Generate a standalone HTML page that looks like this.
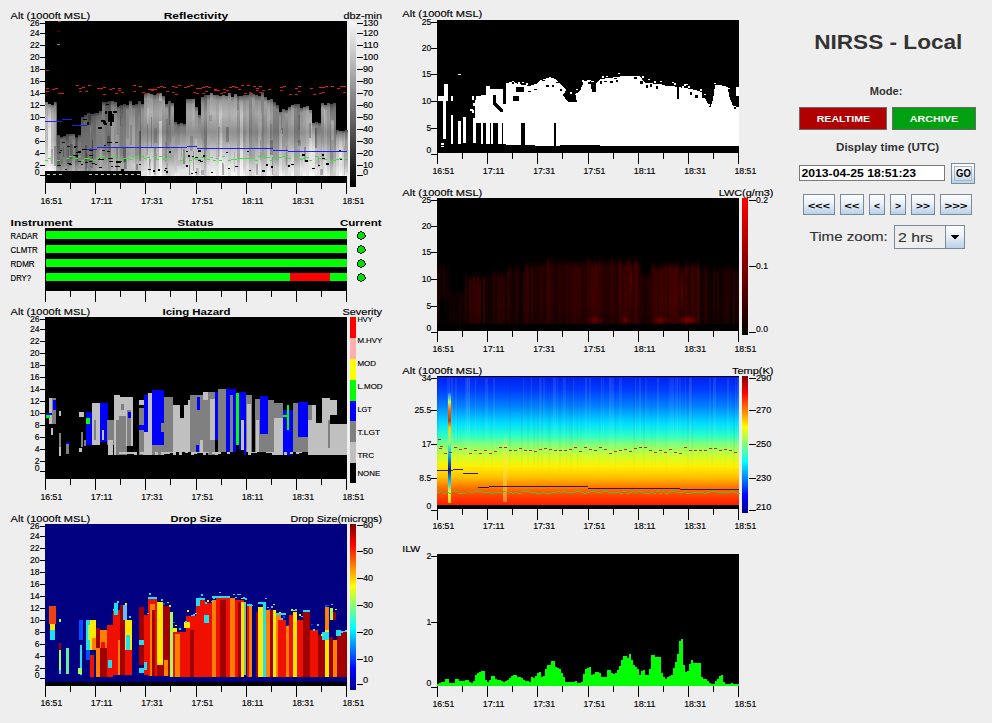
<!DOCTYPE html>
<html><head><meta charset="utf-8"><style>
html,body{margin:0;padding:0;background:#eeeeee;width:992px;height:723px;overflow:hidden}
svg{display:block}
text{font-family:"Liberation Sans",sans-serif}
</style></head><body>
<svg width="992" height="723" viewBox="0 0 992 723" shape-rendering="crispEdges">
<rect x="0" y="0" width="992" height="723" fill="#eeeeee"/>
<text x="10.6" y="18.6" font-size="9.6" fill="#000" stroke="#000" stroke-width="0.15" text-anchor="start" textLength="79.6" lengthAdjust="spacingAndGlyphs" >Alt (1000ft MSL)</text>
<text x="195.9" y="18.6" font-size="9.6" font-weight="bold" fill="#000" text-anchor="middle" textLength="64.5" lengthAdjust="spacingAndGlyphs" >Reflectivity</text>
<text x="382" y="18.6" font-size="9.6" fill="#000" stroke="#000" stroke-width="0.15" text-anchor="end" textLength="38.4" lengthAdjust="spacingAndGlyphs" >dbz-min</text>
<rect x="45.00" y="21.00" width="302.00" height="162.00" fill="#000" />
<defs><linearGradient id="rf0" x1="0" y1="0" x2="0" y2="1"><stop offset="0" stop-color="#343434"/><stop offset="0.07" stop-color="#636363"/><stop offset="0.25" stop-color="#7d7d7d"/><stop offset="0.55" stop-color="#767676"/><stop offset="0.75" stop-color="#767676"/><stop offset="0.9" stop-color="#b8b8b8"/><stop offset="1" stop-color="#c4c4c4"/></linearGradient><linearGradient id="rf1" x1="0" y1="0" x2="0" y2="1"><stop offset="0" stop-color="#4b4b4b"/><stop offset="0.07" stop-color="#5d5d5d"/><stop offset="0.25" stop-color="#737373"/><stop offset="0.55" stop-color="#898989"/><stop offset="0.75" stop-color="#8d8d8d"/><stop offset="0.9" stop-color="#c9c9c9"/><stop offset="1" stop-color="#cdcdcd"/></linearGradient><linearGradient id="rf2" x1="0" y1="0" x2="0" y2="1"><stop offset="0" stop-color="#454545"/><stop offset="0.07" stop-color="#6b6b6b"/><stop offset="0.25" stop-color="#9a9a9a"/><stop offset="0.55" stop-color="#898989"/><stop offset="0.75" stop-color="#8c8c8c"/><stop offset="0.9" stop-color="#b9b9b9"/><stop offset="1" stop-color="#cbcbcb"/></linearGradient><linearGradient id="rf3" x1="0" y1="0" x2="0" y2="1"><stop offset="0" stop-color="#4c4c4c"/><stop offset="0.07" stop-color="#717171"/><stop offset="0.25" stop-color="#8e8e8e"/><stop offset="0.55" stop-color="#969696"/><stop offset="0.75" stop-color="#a1a1a1"/><stop offset="0.9" stop-color="#d0d0d0"/><stop offset="1" stop-color="#d2d2d2"/></linearGradient><linearGradient id="rf4" x1="0" y1="0" x2="0" y2="1"><stop offset="0" stop-color="#414141"/><stop offset="0.07" stop-color="#808080"/><stop offset="0.25" stop-color="#8b8b8b"/><stop offset="0.55" stop-color="#9b9b9b"/><stop offset="0.75" stop-color="#999999"/><stop offset="0.9" stop-color="#cccccc"/><stop offset="1" stop-color="#cfcfcf"/></linearGradient><linearGradient id="rf5" x1="0" y1="0" x2="0" y2="1"><stop offset="0" stop-color="#555555"/><stop offset="0.07" stop-color="#9c9c9c"/><stop offset="0.25" stop-color="#9e9e9e"/><stop offset="0.55" stop-color="#acacac"/><stop offset="0.75" stop-color="#a3a3a3"/><stop offset="0.9" stop-color="#cfcfcf"/><stop offset="1" stop-color="#e0e0e0"/></linearGradient><linearGradient id="rf6" x1="0" y1="0" x2="0" y2="1"><stop offset="0" stop-color="#575757"/><stop offset="0.07" stop-color="#8b8b8b"/><stop offset="0.25" stop-color="#a8a8a8"/><stop offset="0.55" stop-color="#a6a6a6"/><stop offset="0.75" stop-color="#bbbbbb"/><stop offset="0.9" stop-color="#d0d0d0"/><stop offset="1" stop-color="#eeeeee"/></linearGradient><linearGradient id="rf7" x1="0" y1="0" x2="0" y2="1"><stop offset="0" stop-color="#585858"/><stop offset="0.07" stop-color="#949494"/><stop offset="0.25" stop-color="#afafaf"/><stop offset="0.55" stop-color="#bebebe"/><stop offset="0.75" stop-color="#bbbbbb"/><stop offset="0.9" stop-color="#e3e3e3"/><stop offset="1" stop-color="#e4e4e4"/></linearGradient><linearGradient id="rf8" x1="0" y1="0" x2="0" y2="1"><stop offset="0" stop-color="#6b6b6b"/><stop offset="0.07" stop-color="#9b9b9b"/><stop offset="0.25" stop-color="#b9b9b9"/><stop offset="0.55" stop-color="#b9b9b9"/><stop offset="0.75" stop-color="#cfcfcf"/><stop offset="0.9" stop-color="#e4e4e4"/><stop offset="1" stop-color="#f7f7f7"/></linearGradient><linearGradient id="rf9" x1="0" y1="0" x2="0" y2="1"><stop offset="0" stop-color="#626262"/><stop offset="0.07" stop-color="#a1a1a1"/><stop offset="0.25" stop-color="#c4c4c4"/><stop offset="0.55" stop-color="#cacaca"/><stop offset="0.75" stop-color="#d4d4d4"/><stop offset="0.9" stop-color="#e6e6e6"/><stop offset="1" stop-color="#eaeaea"/></linearGradient><linearGradient id="rf10" x1="0" y1="0" x2="0" y2="1"><stop offset="0" stop-color="#616161"/><stop offset="0.07" stop-color="#a0a0a0"/><stop offset="0.25" stop-color="#cdcdcd"/><stop offset="0.55" stop-color="#dddddd"/><stop offset="0.75" stop-color="#e3e3e3"/><stop offset="0.9" stop-color="#f2f2f2"/><stop offset="1" stop-color="#fafafa"/></linearGradient><linearGradient id="rf11" x1="0" y1="0" x2="0" y2="1"><stop offset="0" stop-color="#737373"/><stop offset="0.07" stop-color="#ababab"/><stop offset="0.25" stop-color="#d7d7d7"/><stop offset="0.55" stop-color="#e7e7e7"/><stop offset="0.75" stop-color="#e2e2e2"/><stop offset="0.9" stop-color="#e9e9e9"/><stop offset="1" stop-color="#ffffff"/></linearGradient></defs>
<rect x="45.00" y="102.00" width="3.00" height="69.00" fill="url(#rf8)" />
<rect x="48.00" y="104.00" width="3.00" height="67.00" fill="url(#rf11)" />
<rect x="51.00" y="105.00" width="3.00" height="66.00" fill="url(#rf8)" />
<rect x="54.00" y="102.00" width="3.00" height="69.00" fill="url(#rf6)" />
<rect x="57.00" y="135.00" width="3.00" height="36.00" fill="url(#rf5)" />
<rect x="60.00" y="137.00" width="3.00" height="34.00" fill="url(#rf5)" />
<rect x="63.00" y="136.00" width="3.00" height="35.00" fill="url(#rf6)" />
<rect x="66.00" y="134.00" width="3.00" height="37.00" fill="url(#rf3)" />
<rect x="69.00" y="134.00" width="3.00" height="37.00" fill="url(#rf5)" />
<rect x="72.00" y="134.00" width="3.00" height="37.00" fill="url(#rf8)" />
<rect x="75.00" y="137.00" width="3.00" height="34.00" fill="url(#rf4)" />
<rect x="78.00" y="135.00" width="3.00" height="36.00" fill="url(#rf6)" />
<rect x="81.00" y="116.53" width="3.00" height="54.47" fill="url(#rf3)" />
<rect x="84.00" y="114.58" width="3.00" height="56.42" fill="url(#rf4)" />
<rect x="87.00" y="112.63" width="3.00" height="58.37" fill="url(#rf3)" />
<rect x="90.00" y="111.68" width="3.00" height="59.32" fill="url(#rf2)" />
<rect x="93.00" y="112.74" width="3.00" height="58.26" fill="url(#rf4)" />
<rect x="96.00" y="112.79" width="3.00" height="58.21" fill="url(#rf6)" />
<rect x="99.00" y="110.67" width="3.00" height="60.33" fill="url(#rf6)" />
<rect x="102.00" y="102.06" width="3.00" height="68.94" fill="url(#rf5)" />
<rect x="105.00" y="102.39" width="3.00" height="68.61" fill="url(#rf3)" />
<rect x="108.00" y="100.72" width="3.00" height="70.28" fill="url(#rf2)" />
<rect x="111.00" y="101.06" width="3.00" height="69.94" fill="url(#rf9)" />
<rect x="114.00" y="102.39" width="3.00" height="68.61" fill="url(#rf8)" />
<rect x="117.00" y="105.72" width="3.00" height="65.28" fill="url(#rf6)" />
<rect x="120.00" y="104.95" width="3.00" height="66.05" fill="url(#rf3)" />
<rect x="123.00" y="103.68" width="3.00" height="67.32" fill="url(#rf4)" />
<rect x="126.00" y="105.41" width="3.00" height="65.59" fill="url(#rf5)" />
<rect x="129.00" y="101.14" width="3.00" height="69.86" fill="url(#rf7)" />
<rect x="132.00" y="104.86" width="3.00" height="66.14" fill="url(#rf7)" />
<rect x="135.00" y="103.59" width="3.00" height="67.41" fill="url(#rf4)" />
<rect x="138.00" y="101.32" width="3.00" height="69.68" fill="url(#rf3)" />
<rect x="141.00" y="104.05" width="3.00" height="71.45" fill="url(#rf7)" />
<rect x="144.00" y="94.00" width="3.00" height="81.50" fill="url(#rf7)" />
<rect x="147.00" y="93.00" width="3.00" height="82.50" fill="url(#rf8)" />
<rect x="150.00" y="94.00" width="3.00" height="81.50" fill="url(#rf8)" />
<rect x="153.00" y="95.00" width="3.00" height="80.50" fill="url(#rf6)" />
<rect x="156.00" y="94.00" width="3.00" height="81.50" fill="url(#rf6)" />
<rect x="159.00" y="93.00" width="3.00" height="82.50" fill="url(#rf11)" />
<rect x="162.00" y="96.00" width="3.00" height="79.50" fill="url(#rf5)" />
<rect x="165.00" y="104.00" width="3.00" height="71.50" fill="url(#rf5)" />
<rect x="168.00" y="101.00" width="3.00" height="74.50" fill="url(#rf3)" />
<rect x="171.00" y="103.00" width="3.00" height="72.50" fill="url(#rf5)" />
<rect x="174.00" y="122.00" width="3.00" height="53.50" fill="url(#rf6)" />
<rect x="177.00" y="124.00" width="3.00" height="51.50" fill="url(#rf6)" />
<rect x="180.00" y="123.00" width="3.00" height="52.50" fill="url(#rf7)" />
<rect x="183.00" y="124.00" width="3.00" height="51.50" fill="url(#rf7)" />
<rect x="186.00" y="99.00" width="3.00" height="76.50" fill="url(#rf7)" />
<rect x="189.00" y="99.00" width="3.00" height="76.50" fill="url(#rf7)" />
<rect x="192.00" y="99.00" width="3.00" height="76.50" fill="url(#rf8)" />
<rect x="195.00" y="107.00" width="3.00" height="68.50" fill="url(#rf7)" />
<rect x="198.00" y="115.00" width="3.00" height="60.50" fill="url(#rf7)" />
<rect x="201.00" y="96.99" width="3.00" height="78.51" fill="url(#rf6)" />
<rect x="204.00" y="94.94" width="3.00" height="80.56" fill="url(#rf2)" />
<rect x="207.00" y="94.90" width="3.00" height="80.60" fill="url(#rf7)" />
<rect x="210.00" y="92.85" width="3.00" height="82.65" fill="url(#rf8)" />
<rect x="213.00" y="94.80" width="3.00" height="80.70" fill="url(#rf8)" />
<rect x="216.00" y="94.75" width="3.00" height="80.75" fill="url(#rf7)" />
<rect x="219.00" y="95.71" width="3.00" height="79.79" fill="url(#rf10)" />
<rect x="222.00" y="94.66" width="3.00" height="80.84" fill="url(#rf8)" />
<rect x="225.00" y="95.61" width="3.00" height="79.89" fill="url(#rf8)" />
<rect x="228.00" y="92.56" width="3.00" height="82.94" fill="url(#rf7)" />
<rect x="231.00" y="96.52" width="3.00" height="78.98" fill="url(#rf8)" />
<rect x="234.00" y="94.47" width="3.00" height="81.03" fill="url(#rf8)" />
<rect x="237.00" y="96.42" width="3.00" height="79.08" fill="url(#rf5)" />
<rect x="240.00" y="96.37" width="3.00" height="79.13" fill="url(#rf10)" />
<rect x="243.00" y="95.33" width="3.00" height="80.17" fill="url(#rf6)" />
<rect x="246.00" y="95.28" width="3.00" height="80.22" fill="url(#rf7)" />
<rect x="249.00" y="92.23" width="3.00" height="83.27" fill="url(#rf4)" />
<rect x="252.00" y="94.18" width="3.00" height="81.32" fill="url(#rf5)" />
<rect x="255.00" y="95.13" width="3.00" height="80.37" fill="url(#rf6)" />
<rect x="258.00" y="96.09" width="3.00" height="79.41" fill="url(#rf7)" />
<rect x="261.00" y="92.04" width="3.00" height="83.46" fill="url(#rf4)" />
<rect x="264.00" y="97.00" width="3.00" height="78.50" fill="url(#rf5)" />
<rect x="267.00" y="100.00" width="3.00" height="75.50" fill="url(#rf8)" />
<rect x="270.00" y="99.00" width="3.00" height="76.50" fill="url(#rf6)" />
<rect x="273.00" y="102.00" width="3.00" height="73.50" fill="url(#rf4)" />
<rect x="276.00" y="105.00" width="3.00" height="70.50" fill="url(#rf4)" />
<rect x="279.00" y="112.00" width="3.00" height="63.50" fill="url(#rf8)" />
<rect x="282.00" y="109.00" width="3.00" height="66.50" fill="url(#rf6)" />
<rect x="285.00" y="110.00" width="3.00" height="65.50" fill="url(#rf5)" />
<rect x="288.00" y="107.00" width="3.00" height="68.50" fill="url(#rf7)" />
<rect x="291.00" y="105.00" width="3.00" height="70.50" fill="url(#rf8)" />
<rect x="294.00" y="104.00" width="3.00" height="71.50" fill="url(#rf4)" />
<rect x="297.00" y="104.00" width="3.00" height="71.50" fill="url(#rf3)" />
<rect x="300.00" y="108.00" width="3.00" height="67.50" fill="url(#rf7)" />
<rect x="303.00" y="107.00" width="3.00" height="68.50" fill="url(#rf8)" />
<rect x="306.00" y="106.00" width="3.00" height="69.50" fill="url(#rf9)" />
<rect x="309.00" y="110.00" width="3.00" height="65.50" fill="url(#rf11)" />
<rect x="312.00" y="123.00" width="3.00" height="52.50" fill="url(#rf11)" />
<rect x="315.00" y="122.00" width="3.00" height="53.50" fill="url(#rf7)" />
<rect x="318.00" y="123.00" width="3.00" height="52.50" fill="url(#rf7)" />
<rect x="321.00" y="103.00" width="3.00" height="72.50" fill="url(#rf5)" />
<rect x="324.00" y="105.00" width="3.00" height="70.50" fill="url(#rf8)" />
<rect x="327.00" y="103.00" width="3.00" height="72.50" fill="url(#rf6)" />
<rect x="330.00" y="104.00" width="3.00" height="71.50" fill="url(#rf2)" />
<rect x="333.00" y="103.00" width="3.00" height="72.50" fill="url(#rf3)" />
<rect x="336.00" y="130.00" width="3.00" height="45.50" fill="url(#rf9)" />
<rect x="339.00" y="131.00" width="3.00" height="44.50" fill="url(#rf11)" />
<rect x="342.00" y="131.00" width="3.00" height="44.50" fill="url(#rf9)" />
<rect x="345.00" y="130.00" width="3.00" height="45.50" fill="url(#rf6)" />
<rect x="54" y="146" width="2" height="20" fill="#000" opacity="0.25"/>
<rect x="181" y="133" width="1" height="6" fill="#fff" opacity="0.12"/>
<rect x="100" y="148" width="3" height="15" fill="#fff" opacity="0.24"/>
<rect x="147" y="157" width="2" height="10" fill="#fff" opacity="0.25"/>
<rect x="318" y="157" width="1" height="10" fill="#000" opacity="0.17"/>
<rect x="311" y="139" width="1" height="20" fill="#fff" opacity="0.24"/>
<rect x="159" y="101" width="3" height="20" fill="#000" opacity="0.19"/>
<rect x="48" y="128" width="3" height="30" fill="#fff" opacity="0.29"/>
<rect x="282" y="130" width="1" height="6" fill="#fff" opacity="0.26"/>
<rect x="108" y="117" width="2" height="6" fill="#fff" opacity="0.21"/>
<rect x="209" y="115" width="3" height="6" fill="#000" opacity="0.12"/>
<rect x="270" y="124" width="2" height="15" fill="#000" opacity="0.11"/>
<rect x="77" y="151" width="1" height="10" fill="#000" opacity="0.24"/>
<rect x="116" y="135" width="3" height="30" fill="#fff" opacity="0.24"/>
<rect x="297" y="143" width="3" height="6" fill="#fff" opacity="0.19"/>
<rect x="331" y="122" width="3" height="30" fill="#fff" opacity="0.20"/>
<rect x="331" y="120" width="3" height="20" fill="#fff" opacity="0.27"/>
<rect x="151" y="117" width="1" height="30" fill="#000" opacity="0.21"/>
<rect x="147" y="125" width="1" height="30" fill="#000" opacity="0.18"/>
<rect x="320" y="169" width="3" height="6" fill="#000" opacity="0.30"/>
<rect x="107" y="136" width="3" height="10" fill="#000" opacity="0.21"/>
<rect x="256" y="164" width="2" height="11" fill="#000" opacity="0.20"/>
<rect x="218" y="127" width="2" height="30" fill="#000" opacity="0.14"/>
<rect x="60" y="167" width="1" height="6" fill="#000" opacity="0.13"/>
<rect x="51" y="149" width="2" height="15" fill="#000" opacity="0.20"/>
<rect x="300" y="153" width="1" height="22" fill="#fff" opacity="0.24"/>
<rect x="316" y="164" width="1" height="11" fill="#fff" opacity="0.27"/>
<rect x="126" y="139" width="3" height="30" fill="#fff" opacity="0.21"/>
<rect x="322" y="144" width="1" height="10" fill="#fff" opacity="0.23"/>
<rect x="222" y="163" width="2" height="12" fill="#000" opacity="0.28"/>
<rect x="156" y="153" width="1" height="6" fill="#000" opacity="0.15"/>
<rect x="90" y="128" width="1" height="20" fill="#fff" opacity="0.18"/>
<rect x="109" y="116" width="3" height="6" fill="#000" opacity="0.21"/>
<rect x="228" y="163" width="2" height="6" fill="#fff" opacity="0.23"/>
<rect x="220" y="133" width="3" height="10" fill="#fff" opacity="0.20"/>
<rect x="57" y="137" width="3" height="30" fill="#000" opacity="0.21"/>
<rect x="120" y="116" width="1" height="10" fill="#000" opacity="0.13"/>
<rect x="189" y="165" width="1" height="10" fill="#000" opacity="0.29"/>
<rect x="281" y="115" width="1" height="15" fill="#000" opacity="0.19"/>
<rect x="226" y="127" width="3" height="15" fill="#000" opacity="0.24"/>
<rect x="147" y="108" width="2" height="15" fill="#fff" opacity="0.18"/>
<rect x="144" y="142" width="1" height="30" fill="#fff" opacity="0.16"/>
<rect x="88" y="159" width="3" height="16" fill="#000" opacity="0.14"/>
<rect x="344" y="169" width="2" height="6" fill="#fff" opacity="0.25"/>
<rect x="126" y="158" width="2" height="10" fill="#fff" opacity="0.28"/>
<rect x="234" y="152" width="1" height="20" fill="#000" opacity="0.14"/>
<rect x="219" y="117" width="1" height="6" fill="#fff" opacity="0.30"/>
<rect x="70" y="144" width="3" height="15" fill="#000" opacity="0.23"/>
<rect x="336" y="115" width="1" height="20" fill="#000" opacity="0.20"/>
<rect x="154" y="147" width="2" height="28" fill="#000" opacity="0.22"/>
<rect x="166" y="119" width="2" height="30" fill="#000" opacity="0.14"/>
<rect x="237" y="95" width="2" height="15" fill="#000" opacity="0.17"/>
<rect x="321" y="147" width="3" height="28" fill="#fff" opacity="0.12"/>
<rect x="272" y="157" width="1" height="18" fill="#000" opacity="0.25"/>
<rect x="68" y="149" width="1" height="20" fill="#000" opacity="0.13"/>
<rect x="298" y="140" width="3" height="6" fill="#000" opacity="0.20"/>
<rect x="190" y="136" width="3" height="15" fill="#000" opacity="0.16"/>
<rect x="183" y="149" width="2" height="15" fill="#000" opacity="0.25"/>
<rect x="344" y="132" width="1" height="20" fill="#fff" opacity="0.18"/>
<rect x="206" y="151" width="1" height="24" fill="#fff" opacity="0.29"/>
<rect x="82" y="159" width="1" height="16" fill="#fff" opacity="0.15"/>
<rect x="169" y="105" width="1" height="20" fill="#000" opacity="0.29"/>
<rect x="170" y="143" width="1" height="6" fill="#fff" opacity="0.19"/>
<rect x="149" y="159" width="2" height="16" fill="#000" opacity="0.17"/>
<rect x="116" y="148" width="2" height="27" fill="#000" opacity="0.22"/>
<rect x="259" y="122" width="3" height="30" fill="#fff" opacity="0.13"/>
<rect x="193" y="151" width="1" height="20" fill="#000" opacity="0.28"/>
<rect x="304" y="147" width="2" height="15" fill="#000" opacity="0.24"/>
<rect x="334" y="150" width="1" height="15" fill="#fff" opacity="0.14"/>
<rect x="172" y="136" width="3" height="10" fill="#fff" opacity="0.11"/>
<rect x="76" y="136" width="2" height="20" fill="#000" opacity="0.11"/>
<rect x="158" y="135" width="1" height="6" fill="#fff" opacity="0.13"/>
<rect x="165" y="142" width="2" height="20" fill="#000" opacity="0.14"/>
<rect x="220" y="132" width="1" height="6" fill="#fff" opacity="0.19"/>
<rect x="154" y="128" width="3" height="15" fill="#000" opacity="0.13"/>
<rect x="123" y="147" width="3" height="15" fill="#000" opacity="0.25"/>
<rect x="139" y="131" width="2" height="30" fill="#000" opacity="0.28"/>
<rect x="85" y="145" width="2" height="30" fill="#000" opacity="0.26"/>
<rect x="282" y="128" width="1" height="6" fill="#000" opacity="0.28"/>
<rect x="86" y="153" width="2" height="15" fill="#000" opacity="0.13"/>
<rect x="228" y="144" width="2" height="15" fill="#fff" opacity="0.16"/>
<rect x="270" y="140" width="3" height="15" fill="#000" opacity="0.26"/>
<rect x="201" y="139" width="1" height="20" fill="#fff" opacity="0.25"/>
<rect x="309" y="123" width="2" height="15" fill="#000" opacity="0.24"/>
<rect x="344" y="146" width="1" height="29" fill="#000" opacity="0.18"/>
<rect x="124" y="159" width="3" height="10" fill="#000" opacity="0.25"/>
<rect x="189" y="157" width="1" height="18" fill="#000" opacity="0.13"/>
<rect x="196" y="168" width="3" height="7" fill="#000" opacity="0.21"/>
<rect x="324" y="109" width="1" height="15" fill="#fff" opacity="0.28"/>
<rect x="88" y="115" width="3" height="10" fill="#000" opacity="0.26"/>
<rect x="261" y="113" width="1" height="20" fill="#fff" opacity="0.20"/>
<rect x="280" y="134" width="2" height="15" fill="#fff" opacity="0.20"/>
<rect x="320" y="161" width="1" height="14" fill="#fff" opacity="0.18"/>
<rect x="223" y="159" width="2" height="6" fill="#fff" opacity="0.29"/>
<rect x="57" y="154" width="3" height="6" fill="#fff" opacity="0.18"/>
<rect x="260" y="164" width="1" height="10" fill="#fff" opacity="0.18"/>
<rect x="130" y="125" width="2" height="20" fill="#000" opacity="0.15"/>
<rect x="75" y="152" width="3" height="6" fill="#000" opacity="0.13"/>
<rect x="136" y="164" width="2" height="6" fill="#000" opacity="0.28"/>
<rect x="63" y="147" width="1" height="10" fill="#000" opacity="0.22"/>
<rect x="286" y="146" width="1" height="20" fill="#000" opacity="0.16"/>
<rect x="133" y="164" width="2" height="11" fill="#fff" opacity="0.21"/>
<rect x="178" y="145" width="2" height="15" fill="#fff" opacity="0.25"/>
<rect x="92" y="140" width="1" height="20" fill="#000" opacity="0.29"/>
<rect x="242" y="168" width="3" height="7" fill="#fff" opacity="0.11"/>
<rect x="166" y="163" width="2" height="12" fill="#000" opacity="0.15"/>
<rect x="260" y="140" width="1" height="20" fill="#000" opacity="0.16"/>
<rect x="177" y="166" width="3" height="9" fill="#fff" opacity="0.30"/>
<rect x="181" y="147" width="1" height="10" fill="#000" opacity="0.14"/>
<rect x="149" y="156" width="1" height="10" fill="#000" opacity="0.15"/>
<rect x="315" y="128" width="2" height="20" fill="#000" opacity="0.25"/>
<rect x="323" y="160" width="2" height="6" fill="#fff" opacity="0.18"/>
<rect x="91" y="158" width="2" height="10" fill="#000" opacity="0.18"/>
<rect x="298" y="115" width="2" height="15" fill="#000" opacity="0.12"/>
<rect x="201" y="170" width="3" height="5" fill="#000" opacity="0.24"/>
<rect x="99" y="150" width="3" height="20" fill="#fff" opacity="0.26"/>
<rect x="107" y="147" width="1" height="20" fill="#fff" opacity="0.20"/>
<rect x="195" y="139" width="2" height="6" fill="#fff" opacity="0.27"/>
<rect x="150" y="163" width="1" height="12" fill="#fff" opacity="0.29"/>
<rect x="197" y="167" width="2" height="8" fill="#fff" opacity="0.15"/>
<rect x="81.00" y="164.00" width="2.00" height="1.00" fill="#000" />
<rect x="98.00" y="159.00" width="4.00" height="1.00" fill="#000" />
<rect x="116.00" y="161.00" width="5.00" height="1.00" fill="#000" />
<rect x="104.00" y="145.00" width="2.00" height="1.00" fill="#000" />
<rect x="74.00" y="146.00" width="3.00" height="1.00" fill="#000" />
<rect x="78.00" y="151.00" width="3.00" height="1.00" fill="#000" />
<rect x="107.00" y="142.00" width="5.00" height="1.00" fill="#000" />
<rect x="67.00" y="146.00" width="3.00" height="1.00" fill="#000" />
<rect x="60.00" y="150.00" width="2.00" height="1.00" fill="#000" />
<rect x="111.00" y="166.00" width="2.00" height="1.00" fill="#000" />
<rect x="99.00" y="167.00" width="3.00" height="1.00" fill="#000" />
<rect x="82.00" y="149.00" width="5.00" height="1.00" fill="#000" />
<rect x="117.00" y="161.00" width="5.00" height="1.00" fill="#000" />
<rect x="57.00" y="165.00" width="4.00" height="1.00" fill="#000" />
<rect x="87.00" y="173.00" width="2.00" height="1.00" fill="#000" />
<rect x="89.00" y="161.00" width="3.00" height="1.00" fill="#000" />
<rect x="99.00" y="159.00" width="5.00" height="1.00" fill="#000" />
<rect x="69.00" y="164.00" width="3.00" height="1.00" fill="#000" />
<rect x="98.00" y="158.00" width="2.00" height="1.00" fill="#000" />
<rect x="76.00" y="156.00" width="4.00" height="1.00" fill="#000" />
<rect x="85.00" y="162.00" width="3.00" height="1.00" fill="#000" />
<rect x="81.00" y="173.00" width="3.00" height="1.00" fill="#000" />
<rect x="59.00" y="152.00" width="2.00" height="1.00" fill="#000" />
<rect x="73.00" y="155.00" width="5.00" height="1.00" fill="#000" />
<rect x="109.00" y="161.00" width="4.00" height="1.00" fill="#000" />
<rect x="67.00" y="163.00" width="4.00" height="1.00" fill="#000" />
<rect x="115.00" y="147.00" width="5.00" height="1.00" fill="#000" />
<rect x="73.00" y="155.00" width="2.00" height="1.00" fill="#000" />
<rect x="89.00" y="150.00" width="4.00" height="1.00" fill="#000" />
<rect x="74.00" y="147.00" width="2.00" height="1.00" fill="#000" />
<rect x="92.00" y="163.00" width="3.00" height="1.00" fill="#000" />
<rect x="102.00" y="150.00" width="3.00" height="1.00" fill="#000" />
<rect x="65.00" y="169.00" width="2.00" height="1.00" fill="#000" />
<rect x="107.00" y="151.00" width="3.00" height="1.00" fill="#000" />
<rect x="95.00" y="164.00" width="2.00" height="1.00" fill="#000" />
<rect x="76.00" y="152.00" width="5.00" height="1.00" fill="#000" />
<rect x="115.00" y="142.00" width="3.00" height="1.00" fill="#000" />
<rect x="105.00" y="147.00" width="5.00" height="1.00" fill="#000" />
<rect x="78.00" y="161.00" width="3.00" height="1.00" fill="#000" />
<rect x="89.00" y="155.00" width="4.00" height="1.00" fill="#000" />
<rect x="62.00" y="142.00" width="3.00" height="1.00" fill="#000" />
<rect x="107.00" y="171.00" width="2.00" height="1.00" fill="#000" />
<rect x="116.00" y="162.00" width="5.00" height="1.00" fill="#000" />
<rect x="108.00" y="158.00" width="5.00" height="1.00" fill="#000" />
<rect x="115.00" y="166.00" width="5.00" height="1.00" fill="#000" />
<rect x="87.00" y="122.00" width="2.00" height="3.00" fill="#000" />
<rect x="101.00" y="120.00" width="4.00" height="2.00" fill="#000" />
<rect x="106.00" y="104.00" width="3.00" height="1.00" fill="#000" />
<rect x="98.00" y="127.00" width="4.00" height="2.00" fill="#000" />
<rect x="104.00" y="123.00" width="3.00" height="2.00" fill="#000" />
<rect x="117.00" y="106.00" width="2.00" height="1.00" fill="#000" />
<rect x="108.00" y="111.00" width="4.00" height="2.00" fill="#000" />
<rect x="83.00" y="119.00" width="4.00" height="1.00" fill="#000" />
<rect x="113.00" y="111.00" width="4.00" height="2.00" fill="#000" />
<rect x="105.00" y="111.00" width="2.00" height="3.00" fill="#000" />
<rect x="103.00" y="121.00" width="3.00" height="3.00" fill="#000" />
<rect x="90.00" y="111.00" width="4.00" height="3.00" fill="#000" />
<defs><linearGradient id="rfd" x1="0" y1="0" x2="1" y2="0"><stop offset="0" stop-color="#000" stop-opacity="0.3"/><stop offset="0.6" stop-color="#000" stop-opacity="0.22"/><stop offset="1" stop-color="#000" stop-opacity="0"/></linearGradient></defs>
<rect x="56" y="100" width="100" height="71" fill="url(#rfd)"/>
<defs><linearGradient id="rfb" x1="0" y1="0" x2="0" y2="1"><stop offset="0" stop-color="#000" stop-opacity="0"/><stop offset="0.5" stop-color="#000" stop-opacity="0.22"/><stop offset="1" stop-color="#000" stop-opacity="0"/></linearGradient></defs>
<rect x="140" y="112" width="207" height="40" fill="url(#rfb)"/>
<rect x="108.00" y="112.00" width="2.00" height="10.00" fill="#000" />
<rect x="110.00" y="111.00" width="2.00" height="15.00" fill="#000" />
<rect x="112.00" y="114.00" width="2.00" height="8.00" fill="#000" />
<rect x="195.00" y="157.00" width="3.00" height="1.00" fill="#000" />
<rect x="203.00" y="155.00" width="2.00" height="2.00" fill="#000" />
<rect x="235.00" y="166.00" width="3.00" height="1.00" fill="#000" />
<rect x="211.00" y="172.00" width="2.00" height="1.00" fill="#000" />
<rect x="198.00" y="150.00" width="3.00" height="2.00" fill="#000" />
<rect x="198.00" y="160.00" width="3.00" height="1.00" fill="#000" />
<rect x="318.00" y="165.00" width="2.00" height="1.00" fill="#000" />
<rect x="195.00" y="172.00" width="2.00" height="1.00" fill="#000" />
<rect x="200.00" y="161.00" width="3.00" height="1.00" fill="#000" />
<rect x="164.00" y="170.00" width="2.00" height="1.00" fill="#000" />
<rect x="169.00" y="151.00" width="2.00" height="2.00" fill="#000" />
<rect x="305.00" y="160.00" width="3.00" height="2.00" fill="#000" />
<rect x="302.00" y="154.00" width="3.00" height="2.00" fill="#000" />
<rect x="226.00" y="152.00" width="2.00" height="1.00" fill="#000" />
<rect x="340.00" y="159.00" width="2.00" height="1.00" fill="#000" />
<rect x="188.00" y="155.00" width="2.00" height="2.00" fill="#000" />
<rect x="322.00" y="158.00" width="3.00" height="1.00" fill="#000" />
<rect x="271.00" y="166.00" width="2.00" height="2.00" fill="#000" />
<rect x="166.00" y="171.00" width="2.00" height="2.00" fill="#000" />
<rect x="153.00" y="170.00" width="2.00" height="2.00" fill="#000" />
<rect x="139.00" y="164.00" width="2.00" height="1.00" fill="#000" />
<rect x="121.00" y="169.00" width="3.00" height="2.00" fill="#000" />
<rect x="228.00" y="168.00" width="2.00" height="1.00" fill="#000" />
<rect x="192.00" y="156.00" width="2.00" height="1.00" fill="#000" />
<rect x="191.00" y="173.00" width="2.00" height="1.00" fill="#000" />
<rect x="322.00" y="154.00" width="2.00" height="2.00" fill="#000" />
<rect x="312.00" y="168.00" width="3.00" height="1.00" fill="#000" />
<rect x="247.00" y="151.00" width="2.00" height="1.00" fill="#000" />
<rect x="262.00" y="170.00" width="3.00" height="2.00" fill="#000" />
<rect x="288.00" y="165.00" width="2.00" height="2.00" fill="#000" />
<rect x="249.00" y="170.00" width="2.00" height="1.00" fill="#000" />
<rect x="148.00" y="169.00" width="3.00" height="1.00" fill="#000" />
<rect x="291.00" y="164.00" width="3.00" height="1.00" fill="#000" />
<rect x="186.00" y="165.00" width="2.00" height="2.00" fill="#000" />
<rect x="186.00" y="151.00" width="2.00" height="1.00" fill="#000" />
<rect x="266.00" y="164.00" width="2.00" height="2.00" fill="#000" />
<rect x="158.00" y="169.00" width="2.00" height="2.00" fill="#000" />
<rect x="326.00" y="163.00" width="3.00" height="2.00" fill="#000" />
<rect x="339.00" y="150.00" width="2.00" height="1.00" fill="#000" />
<rect x="165.00" y="168.00" width="2.00" height="1.00" fill="#000" />
<rect x="45.00" y="171.00" width="95.00" height="12.00" fill="#000" />
<rect x="140.00" y="175.50" width="207.00" height="7.50" fill="#000" />
<rect x="47.00" y="173.50" width="3.00" height="1.00" fill="#c8c8c8" />
<rect x="53.00" y="173.50" width="3.00" height="1.00" fill="#c8c8c8" />
<rect x="59.00" y="173.50" width="3.00" height="1.00" fill="#c8c8c8" />
<rect x="89.00" y="173.50" width="3.00" height="1.00" fill="#c8c8c8" />
<rect x="95.00" y="173.50" width="3.00" height="1.00" fill="#c8c8c8" />
<rect x="101.00" y="173.50" width="3.00" height="1.00" fill="#c8c8c8" />
<rect x="107.00" y="173.50" width="3.00" height="1.00" fill="#c8c8c8" />
<rect x="113.00" y="173.50" width="3.00" height="1.00" fill="#c8c8c8" />
<rect x="119.00" y="173.50" width="3.00" height="1.00" fill="#c8c8c8" />
<rect x="125.00" y="173.50" width="3.00" height="1.00" fill="#c8c8c8" />
<rect x="131.00" y="173.50" width="3.00" height="1.00" fill="#c8c8c8" />
<rect x="137.00" y="173.50" width="3.00" height="1.00" fill="#c8c8c8" />
<rect x="46.00" y="88.00" width="3.00" height="1.20" fill="#e02020" />
<rect x="46.00" y="91.00" width="3.00" height="1.20" fill="#d01818" />
<rect x="52.00" y="89.00" width="3.00" height="1.20" fill="#e02020" />
<rect x="55.00" y="88.00" width="3.00" height="1.20" fill="#e02020" />
<rect x="58.00" y="93.00" width="3.00" height="1.20" fill="#d01818" />
<rect x="61.00" y="93.00" width="3.00" height="1.20" fill="#d01818" />
<rect x="76.00" y="85.00" width="3.00" height="1.20" fill="#e02020" />
<rect x="79.00" y="88.00" width="3.00" height="1.20" fill="#e02020" />
<rect x="79.00" y="91.00" width="3.00" height="1.20" fill="#d01818" />
<rect x="82.00" y="87.00" width="3.00" height="1.20" fill="#e02020" />
<rect x="85.00" y="91.00" width="3.00" height="1.20" fill="#d01818" />
<rect x="88.00" y="85.00" width="3.00" height="1.20" fill="#e02020" />
<rect x="97.00" y="88.00" width="3.00" height="1.20" fill="#e02020" />
<rect x="100.00" y="88.00" width="3.00" height="1.20" fill="#e02020" />
<rect x="103.00" y="87.00" width="3.00" height="1.20" fill="#e02020" />
<rect x="103.00" y="94.00" width="3.00" height="1.20" fill="#d01818" />
<rect x="109.00" y="89.00" width="3.00" height="1.20" fill="#e02020" />
<rect x="112.00" y="88.00" width="3.00" height="1.20" fill="#e02020" />
<rect x="115.00" y="93.00" width="3.00" height="1.20" fill="#d01818" />
<rect x="118.00" y="88.00" width="3.00" height="1.20" fill="#e02020" />
<rect x="118.00" y="90.00" width="3.00" height="1.20" fill="#d01818" />
<rect x="121.00" y="92.00" width="3.00" height="1.20" fill="#d01818" />
<rect x="133.00" y="85.00" width="3.00" height="1.20" fill="#e02020" />
<rect x="133.00" y="91.00" width="3.00" height="1.20" fill="#d01818" />
<rect x="139.00" y="86.00" width="3.00" height="1.20" fill="#e02020" />
<rect x="142.00" y="92.00" width="3.00" height="1.20" fill="#d01818" />
<rect x="145.00" y="93.00" width="3.00" height="1.20" fill="#d01818" />
<rect x="148.00" y="89.00" width="3.00" height="1.20" fill="#e02020" />
<rect x="151.00" y="89.00" width="3.00" height="1.20" fill="#e02020" />
<rect x="151.00" y="90.00" width="3.00" height="1.20" fill="#d01818" />
<rect x="154.00" y="89.00" width="3.00" height="1.20" fill="#e02020" />
<rect x="157.00" y="87.00" width="3.00" height="1.20" fill="#e02020" />
<rect x="157.00" y="93.00" width="3.00" height="1.20" fill="#d01818" />
<rect x="160.00" y="86.00" width="3.00" height="1.20" fill="#e02020" />
<rect x="163.00" y="87.00" width="3.00" height="1.20" fill="#e02020" />
<rect x="166.00" y="91.00" width="3.00" height="1.20" fill="#d01818" />
<rect x="172.00" y="86.00" width="3.00" height="1.20" fill="#e02020" />
<rect x="172.00" y="92.00" width="3.00" height="1.20" fill="#d01818" />
<rect x="175.00" y="87.00" width="3.00" height="1.20" fill="#e02020" />
<rect x="175.00" y="94.00" width="3.00" height="1.20" fill="#d01818" />
<rect x="178.00" y="85.00" width="3.00" height="1.20" fill="#e02020" />
<rect x="184.00" y="87.00" width="3.00" height="1.20" fill="#e02020" />
<rect x="187.00" y="86.00" width="3.00" height="1.20" fill="#e02020" />
<rect x="190.00" y="85.00" width="3.00" height="1.20" fill="#e02020" />
<rect x="193.00" y="92.00" width="3.00" height="1.20" fill="#d01818" />
<rect x="196.00" y="88.00" width="3.00" height="1.20" fill="#e02020" />
<rect x="196.00" y="93.00" width="3.00" height="1.20" fill="#d01818" />
<rect x="199.00" y="88.00" width="3.00" height="1.20" fill="#e02020" />
<rect x="202.00" y="87.00" width="3.00" height="1.20" fill="#e02020" />
<rect x="202.00" y="93.00" width="3.00" height="1.20" fill="#d01818" />
<rect x="205.00" y="86.00" width="3.00" height="1.20" fill="#e02020" />
<rect x="205.00" y="91.00" width="3.00" height="1.20" fill="#d01818" />
<rect x="208.00" y="87.00" width="3.00" height="1.20" fill="#e02020" />
<rect x="214.00" y="89.00" width="3.00" height="1.20" fill="#e02020" />
<rect x="214.00" y="90.00" width="3.00" height="1.20" fill="#d01818" />
<rect x="217.00" y="90.00" width="3.00" height="1.20" fill="#d01818" />
<rect x="220.00" y="93.00" width="3.00" height="1.20" fill="#d01818" />
<rect x="223.00" y="89.00" width="3.00" height="1.20" fill="#e02020" />
<rect x="223.00" y="92.00" width="3.00" height="1.20" fill="#d01818" />
<rect x="226.00" y="90.00" width="3.00" height="1.20" fill="#d01818" />
<rect x="229.00" y="87.00" width="3.00" height="1.20" fill="#e02020" />
<rect x="232.00" y="86.00" width="3.00" height="1.20" fill="#e02020" />
<rect x="235.00" y="87.00" width="3.00" height="1.20" fill="#e02020" />
<rect x="238.00" y="89.00" width="3.00" height="1.20" fill="#e02020" />
<rect x="241.00" y="85.00" width="3.00" height="1.20" fill="#e02020" />
<rect x="244.00" y="93.00" width="3.00" height="1.20" fill="#d01818" />
<rect x="247.00" y="85.00" width="3.00" height="1.20" fill="#e02020" />
<rect x="250.00" y="93.00" width="3.00" height="1.20" fill="#d01818" />
<rect x="253.00" y="86.00" width="3.00" height="1.20" fill="#e02020" />
<rect x="256.00" y="88.00" width="3.00" height="1.20" fill="#e02020" />
<rect x="256.00" y="90.00" width="3.00" height="1.20" fill="#d01818" />
<rect x="259.00" y="86.00" width="3.00" height="1.20" fill="#e02020" />
<rect x="259.00" y="92.00" width="3.00" height="1.20" fill="#d01818" />
<rect x="262.00" y="90.00" width="3.00" height="1.20" fill="#d01818" />
<rect x="268.00" y="89.00" width="3.00" height="1.20" fill="#e02020" />
<rect x="280.00" y="87.00" width="3.00" height="1.20" fill="#e02020" />
<rect x="280.00" y="90.00" width="3.00" height="1.20" fill="#d01818" />
<rect x="283.00" y="86.00" width="3.00" height="1.20" fill="#e02020" />
<rect x="289.00" y="94.00" width="3.00" height="1.20" fill="#d01818" />
<rect x="295.00" y="88.00" width="3.00" height="1.20" fill="#e02020" />
<rect x="295.00" y="94.00" width="3.00" height="1.20" fill="#d01818" />
<rect x="298.00" y="86.00" width="3.00" height="1.20" fill="#e02020" />
<rect x="298.00" y="91.00" width="3.00" height="1.20" fill="#d01818" />
<rect x="310.00" y="88.00" width="3.00" height="1.20" fill="#e02020" />
<rect x="313.00" y="94.00" width="3.00" height="1.20" fill="#d01818" />
<rect x="319.00" y="87.00" width="3.00" height="1.20" fill="#e02020" />
<rect x="319.00" y="93.00" width="3.00" height="1.20" fill="#d01818" />
<rect x="322.00" y="87.00" width="3.00" height="1.20" fill="#e02020" />
<rect x="322.00" y="92.00" width="3.00" height="1.20" fill="#d01818" />
<rect x="325.00" y="86.00" width="3.00" height="1.20" fill="#e02020" />
<rect x="331.00" y="86.00" width="3.00" height="1.20" fill="#e02020" />
<rect x="337.00" y="88.00" width="3.00" height="1.20" fill="#e02020" />
<rect x="340.00" y="86.00" width="3.00" height="1.20" fill="#e02020" />
<rect x="343.00" y="86.00" width="3.00" height="1.20" fill="#e02020" />
<rect x="343.00" y="92.00" width="3.00" height="1.20" fill="#d01818" />
<rect x="45.00" y="121.00" width="17.00" height="1.40" fill="#2020f0" />
<rect x="62.00" y="119.00" width="10.00" height="1.40" fill="#2020f0" />
<rect x="72.00" y="125.00" width="15.00" height="1.40" fill="#2020f0" />
<rect x="87.00" y="149.00" width="10.00" height="1.40" fill="#2020f0" />
<rect x="97.00" y="147.00" width="90.00" height="1.40" fill="#2020f0" />
<rect x="187.00" y="146.00" width="10.00" height="1.40" fill="#2020f0" />
<rect x="197.00" y="148.00" width="76.00" height="1.40" fill="#2020f0" />
<rect x="273.00" y="149.50" width="15.00" height="1.40" fill="#2020f0" />
<rect x="288.00" y="150.50" width="59.00" height="1.40" fill="#2020f0" />
<rect x="45.00" y="160.00" width="3.00" height="1.40" fill="#40e040" />
<rect x="48.00" y="158.00" width="3.00" height="1.40" fill="#40e040" />
<rect x="57.00" y="160.00" width="3.00" height="1.40" fill="#40e040" />
<rect x="66.00" y="158.00" width="3.00" height="1.40" fill="#40e040" />
<rect x="69.00" y="156.00" width="3.00" height="1.40" fill="#40e040" />
<rect x="72.00" y="156.00" width="3.00" height="1.40" fill="#40e040" />
<rect x="75.00" y="158.00" width="3.00" height="1.40" fill="#40e040" />
<rect x="78.00" y="156.00" width="3.00" height="1.40" fill="#40e040" />
<rect x="81.00" y="160.00" width="3.00" height="1.40" fill="#40e040" />
<rect x="84.00" y="158.00" width="3.00" height="1.40" fill="#40e040" />
<rect x="87.00" y="158.00" width="3.00" height="1.40" fill="#40e040" />
<rect x="90.00" y="159.00" width="3.00" height="1.40" fill="#40e040" />
<rect x="93.00" y="160.00" width="3.00" height="1.40" fill="#40e040" />
<rect x="96.00" y="158.00" width="3.00" height="1.40" fill="#40e040" />
<rect x="99.00" y="157.00" width="3.00" height="1.40" fill="#40e040" />
<rect x="102.00" y="156.00" width="3.00" height="1.40" fill="#40e040" />
<rect x="105.00" y="158.00" width="3.00" height="1.40" fill="#40e040" />
<rect x="111.00" y="157.00" width="3.00" height="1.40" fill="#40e040" />
<rect x="114.00" y="156.00" width="3.00" height="1.40" fill="#40e040" />
<rect x="117.00" y="159.00" width="3.00" height="1.40" fill="#40e040" />
<rect x="120.00" y="160.00" width="3.00" height="1.40" fill="#40e040" />
<rect x="123.00" y="158.00" width="3.00" height="1.40" fill="#40e040" />
<rect x="126.00" y="158.00" width="3.00" height="1.40" fill="#40e040" />
<rect x="129.00" y="159.00" width="3.00" height="1.40" fill="#40e040" />
<rect x="132.00" y="156.00" width="3.00" height="1.40" fill="#40e040" />
<rect x="135.00" y="156.00" width="3.00" height="1.40" fill="#40e040" />
<rect x="141.00" y="156.00" width="3.00" height="1.40" fill="#40e040" />
<rect x="144.00" y="158.00" width="3.00" height="1.40" fill="#40e040" />
<rect x="147.00" y="157.00" width="3.00" height="1.40" fill="#40e040" />
<rect x="153.00" y="156.00" width="3.00" height="1.40" fill="#40e040" />
<rect x="156.00" y="159.00" width="3.00" height="1.40" fill="#40e040" />
<rect x="159.00" y="156.00" width="3.00" height="1.40" fill="#40e040" />
<rect x="162.00" y="159.00" width="3.00" height="1.40" fill="#40e040" />
<rect x="165.00" y="159.00" width="3.00" height="1.40" fill="#40e040" />
<rect x="168.00" y="157.00" width="3.00" height="1.40" fill="#40e040" />
<rect x="180.00" y="160.00" width="3.00" height="1.40" fill="#40e040" />
<rect x="183.00" y="156.00" width="3.00" height="1.40" fill="#40e040" />
<rect x="189.00" y="160.00" width="3.00" height="1.40" fill="#40e040" />
<rect x="192.00" y="158.00" width="3.00" height="1.40" fill="#40e040" />
<rect x="195.00" y="159.00" width="3.00" height="1.40" fill="#40e040" />
<rect x="198.00" y="159.00" width="3.00" height="1.40" fill="#40e040" />
<rect x="201.00" y="157.00" width="3.00" height="1.40" fill="#40e040" />
<rect x="204.00" y="158.00" width="3.00" height="1.40" fill="#40e040" />
<rect x="207.00" y="159.00" width="3.00" height="1.40" fill="#40e040" />
<rect x="210.00" y="157.00" width="3.00" height="1.40" fill="#40e040" />
<rect x="213.00" y="160.00" width="3.00" height="1.40" fill="#40e040" />
<rect x="216.00" y="158.00" width="3.00" height="1.40" fill="#40e040" />
<rect x="219.00" y="160.00" width="3.00" height="1.40" fill="#40e040" />
<rect x="222.00" y="156.00" width="3.00" height="1.40" fill="#40e040" />
<rect x="228.00" y="160.00" width="3.00" height="1.40" fill="#40e040" />
<rect x="231.00" y="159.00" width="3.00" height="1.40" fill="#40e040" />
<rect x="234.00" y="159.00" width="3.00" height="1.40" fill="#40e040" />
<rect x="237.00" y="158.00" width="3.00" height="1.40" fill="#40e040" />
<rect x="240.00" y="158.00" width="3.00" height="1.40" fill="#40e040" />
<rect x="243.00" y="158.00" width="3.00" height="1.40" fill="#40e040" />
<rect x="246.00" y="158.00" width="3.00" height="1.40" fill="#40e040" />
<rect x="249.00" y="158.00" width="3.00" height="1.40" fill="#40e040" />
<rect x="252.00" y="158.00" width="3.00" height="1.40" fill="#40e040" />
<rect x="255.00" y="160.00" width="3.00" height="1.40" fill="#40e040" />
<rect x="258.00" y="156.00" width="3.00" height="1.40" fill="#40e040" />
<rect x="261.00" y="157.00" width="3.00" height="1.40" fill="#40e040" />
<rect x="264.00" y="157.00" width="3.00" height="1.40" fill="#40e040" />
<rect x="267.00" y="157.00" width="3.00" height="1.40" fill="#40e040" />
<rect x="270.00" y="160.00" width="3.00" height="1.40" fill="#40e040" />
<rect x="273.00" y="158.00" width="3.00" height="1.40" fill="#40e040" />
<rect x="276.00" y="157.00" width="3.00" height="1.40" fill="#40e040" />
<rect x="279.00" y="157.00" width="3.00" height="1.40" fill="#40e040" />
<rect x="282.00" y="156.00" width="3.00" height="1.40" fill="#40e040" />
<rect x="285.00" y="156.00" width="3.00" height="1.40" fill="#40e040" />
<rect x="288.00" y="158.00" width="3.00" height="1.40" fill="#40e040" />
<rect x="294.00" y="157.00" width="3.00" height="1.40" fill="#40e040" />
<rect x="297.00" y="157.00" width="3.00" height="1.40" fill="#40e040" />
<rect x="300.00" y="159.00" width="3.00" height="1.40" fill="#40e040" />
<rect x="303.00" y="158.00" width="3.00" height="1.40" fill="#40e040" />
<rect x="306.00" y="157.00" width="3.00" height="1.40" fill="#40e040" />
<rect x="309.00" y="160.00" width="3.00" height="1.40" fill="#40e040" />
<rect x="315.00" y="156.00" width="3.00" height="1.40" fill="#40e040" />
<rect x="318.00" y="158.00" width="3.00" height="1.40" fill="#40e040" />
<rect x="324.00" y="159.00" width="3.00" height="1.40" fill="#40e040" />
<rect x="330.00" y="160.00" width="3.00" height="1.40" fill="#40e040" />
<rect x="333.00" y="160.00" width="3.00" height="1.40" fill="#40e040" />
<rect x="336.00" y="159.00" width="3.00" height="1.40" fill="#40e040" />
<rect x="339.00" y="158.00" width="3.00" height="1.40" fill="#40e040" />
<rect x="345.00" y="159.00" width="3.00" height="1.40" fill="#40e040" />
<rect x="57.00" y="44.00" width="3.00" height="1.00" fill="#30c030" />
<rect x="46.00" y="70.00" width="3.00" height="1.00" fill="#b02020" />
<rect x="58.00" y="21.00" width="3.00" height="1.00" fill="#d02020" />
<rect x="57.00" y="31.00" width="3.00" height="1.00" fill="#600000" />
<line x1="40" y1="23.5" x2="45" y2="23.5" stroke="#000" stroke-width="1"/>
<text x="39.5" y="26.0" font-size="8.6" fill="#000" stroke="#000" stroke-width="0.15" text-anchor="end" >26</text>
<line x1="40" y1="33.5" x2="45" y2="33.5" stroke="#000" stroke-width="1"/>
<text x="39.5" y="36.0" font-size="8.6" fill="#000" stroke="#000" stroke-width="0.15" text-anchor="end" >24</text>
<line x1="40" y1="45.5" x2="45" y2="45.5" stroke="#000" stroke-width="1"/>
<text x="39.5" y="48.0" font-size="8.6" fill="#000" stroke="#000" stroke-width="0.15" text-anchor="end" >22</text>
<line x1="40" y1="57.5" x2="45" y2="57.5" stroke="#000" stroke-width="1"/>
<text x="39.5" y="60.0" font-size="8.6" fill="#000" stroke="#000" stroke-width="0.15" text-anchor="end" >20</text>
<line x1="40" y1="69.5" x2="45" y2="69.5" stroke="#000" stroke-width="1"/>
<text x="39.5" y="72.0" font-size="8.6" fill="#000" stroke="#000" stroke-width="0.15" text-anchor="end" >18</text>
<line x1="40" y1="81.5" x2="45" y2="81.5" stroke="#000" stroke-width="1"/>
<text x="39.5" y="84.0" font-size="8.6" fill="#000" stroke="#000" stroke-width="0.15" text-anchor="end" >16</text>
<line x1="40" y1="93.5" x2="45" y2="93.5" stroke="#000" stroke-width="1"/>
<text x="39.5" y="96.0" font-size="8.6" fill="#000" stroke="#000" stroke-width="0.15" text-anchor="end" >14</text>
<line x1="40" y1="105.5" x2="45" y2="105.5" stroke="#000" stroke-width="1"/>
<text x="39.5" y="108.0" font-size="8.6" fill="#000" stroke="#000" stroke-width="0.15" text-anchor="end" >12</text>
<line x1="40" y1="117.5" x2="45" y2="117.5" stroke="#000" stroke-width="1"/>
<text x="39.5" y="120.0" font-size="8.6" fill="#000" stroke="#000" stroke-width="0.15" text-anchor="end" >10</text>
<line x1="40" y1="129.5" x2="45" y2="129.5" stroke="#000" stroke-width="1"/>
<text x="39.5" y="132.0" font-size="8.6" fill="#000" stroke="#000" stroke-width="0.15" text-anchor="end" >8</text>
<line x1="40" y1="141.5" x2="45" y2="141.5" stroke="#000" stroke-width="1"/>
<text x="39.5" y="144.0" font-size="8.6" fill="#000" stroke="#000" stroke-width="0.15" text-anchor="end" >6</text>
<line x1="40" y1="153.5" x2="45" y2="153.5" stroke="#000" stroke-width="1"/>
<text x="39.5" y="156.0" font-size="8.6" fill="#000" stroke="#000" stroke-width="0.15" text-anchor="end" >4</text>
<line x1="40" y1="165.5" x2="45" y2="165.5" stroke="#000" stroke-width="1"/>
<text x="39.5" y="168.0" font-size="8.6" fill="#000" stroke="#000" stroke-width="0.15" text-anchor="end" >2</text>
<line x1="40" y1="175.5" x2="45" y2="175.5" stroke="#000" stroke-width="1"/>
<text x="39.5" y="174.8" font-size="8.6" fill="#000" stroke="#000" stroke-width="0.15" text-anchor="end" >0</text>
<line x1="45.5" y1="183" x2="45.5" y2="194" stroke="#000" stroke-width="1"/>
<line x1="70.5" y1="183" x2="70.5" y2="189" stroke="#000" stroke-width="1"/>
<line x1="95.5" y1="183" x2="95.5" y2="194" stroke="#000" stroke-width="1"/>
<line x1="120.5" y1="183" x2="120.5" y2="189" stroke="#000" stroke-width="1"/>
<line x1="145.5" y1="183" x2="145.5" y2="194" stroke="#000" stroke-width="1"/>
<line x1="170.5" y1="183" x2="170.5" y2="189" stroke="#000" stroke-width="1"/>
<line x1="196.5" y1="183" x2="196.5" y2="194" stroke="#000" stroke-width="1"/>
<line x1="221.5" y1="183" x2="221.5" y2="189" stroke="#000" stroke-width="1"/>
<line x1="246.5" y1="183" x2="246.5" y2="194" stroke="#000" stroke-width="1"/>
<line x1="271.5" y1="183" x2="271.5" y2="189" stroke="#000" stroke-width="1"/>
<line x1="296.5" y1="183" x2="296.5" y2="194" stroke="#000" stroke-width="1"/>
<line x1="321.5" y1="183" x2="321.5" y2="189" stroke="#000" stroke-width="1"/>
<line x1="346.5" y1="183" x2="346.5" y2="194" stroke="#000" stroke-width="1"/>
<text x="40.5" y="203.6" font-size="8.6" fill="#000" stroke="#000" stroke-width="0.15" text-anchor="start" textLength="21.8" lengthAdjust="spacingAndGlyphs" >16:51</text>
<text x="90.8" y="203.6" font-size="8.6" fill="#000" stroke="#000" stroke-width="0.15" text-anchor="start" textLength="21.8" lengthAdjust="spacingAndGlyphs" >17:11</text>
<text x="141.2" y="203.6" font-size="8.6" fill="#000" stroke="#000" stroke-width="0.15" text-anchor="start" textLength="21.8" lengthAdjust="spacingAndGlyphs" >17:31</text>
<text x="191.5" y="203.6" font-size="8.6" fill="#000" stroke="#000" stroke-width="0.15" text-anchor="start" textLength="21.8" lengthAdjust="spacingAndGlyphs" >17:51</text>
<text x="241.8" y="203.6" font-size="8.6" fill="#000" stroke="#000" stroke-width="0.15" text-anchor="start" textLength="21.8" lengthAdjust="spacingAndGlyphs" >18:11</text>
<text x="292.2" y="203.6" font-size="8.6" fill="#000" stroke="#000" stroke-width="0.15" text-anchor="start" textLength="21.8" lengthAdjust="spacingAndGlyphs" >18:31</text>
<text x="342.5" y="203.6" font-size="8.6" fill="#000" stroke="#000" stroke-width="0.15" text-anchor="start" textLength="21.8" lengthAdjust="spacingAndGlyphs" >18:51</text>
<defs><linearGradient id="gbar" x1="0" y1="0" x2="0" y2="1"><stop offset="0" stop-color="#f8f8f8"/><stop offset="1" stop-color="#000"/></linearGradient></defs>
<rect x="350.00" y="21.00" width="6.00" height="166.00" fill="url(#gbar)" />
<line x1="357" y1="23.5" x2="363" y2="23.5" stroke="#000" stroke-width="1"/>
<text x="363" y="26.0" font-size="8.6" fill="#000" stroke="#000" stroke-width="0.15" text-anchor="start" textLength="15.299999999999999" lengthAdjust="spacingAndGlyphs" >130</text>
<line x1="357" y1="33.5" x2="363" y2="33.5" stroke="#000" stroke-width="1"/>
<text x="363" y="36.0" font-size="8.6" fill="#000" stroke="#000" stroke-width="0.15" text-anchor="start" textLength="15.299999999999999" lengthAdjust="spacingAndGlyphs" >120</text>
<line x1="357" y1="45.5" x2="363" y2="45.5" stroke="#000" stroke-width="1"/>
<text x="363" y="48.0" font-size="8.6" fill="#000" stroke="#000" stroke-width="0.15" text-anchor="start" textLength="15.299999999999999" lengthAdjust="spacingAndGlyphs" >110</text>
<line x1="357" y1="57.5" x2="363" y2="57.5" stroke="#000" stroke-width="1"/>
<text x="363" y="60.0" font-size="8.6" fill="#000" stroke="#000" stroke-width="0.15" text-anchor="start" textLength="15.299999999999999" lengthAdjust="spacingAndGlyphs" >100</text>
<line x1="357" y1="69.5" x2="363" y2="69.5" stroke="#000" stroke-width="1"/>
<text x="363" y="72.0" font-size="8.6" fill="#000" stroke="#000" stroke-width="0.15" text-anchor="start" textLength="10.2" lengthAdjust="spacingAndGlyphs" >90</text>
<line x1="357" y1="81.5" x2="363" y2="81.5" stroke="#000" stroke-width="1"/>
<text x="363" y="84.0" font-size="8.6" fill="#000" stroke="#000" stroke-width="0.15" text-anchor="start" textLength="10.2" lengthAdjust="spacingAndGlyphs" >80</text>
<line x1="357" y1="93.5" x2="363" y2="93.5" stroke="#000" stroke-width="1"/>
<text x="363" y="96.0" font-size="8.6" fill="#000" stroke="#000" stroke-width="0.15" text-anchor="start" textLength="10.2" lengthAdjust="spacingAndGlyphs" >70</text>
<line x1="357" y1="105.5" x2="363" y2="105.5" stroke="#000" stroke-width="1"/>
<text x="363" y="108.0" font-size="8.6" fill="#000" stroke="#000" stroke-width="0.15" text-anchor="start" textLength="10.2" lengthAdjust="spacingAndGlyphs" >60</text>
<line x1="357" y1="117.5" x2="363" y2="117.5" stroke="#000" stroke-width="1"/>
<text x="363" y="120.0" font-size="8.6" fill="#000" stroke="#000" stroke-width="0.15" text-anchor="start" textLength="10.2" lengthAdjust="spacingAndGlyphs" >50</text>
<line x1="357" y1="129.5" x2="363" y2="129.5" stroke="#000" stroke-width="1"/>
<text x="363" y="132.0" font-size="8.6" fill="#000" stroke="#000" stroke-width="0.15" text-anchor="start" textLength="10.2" lengthAdjust="spacingAndGlyphs" >40</text>
<line x1="357" y1="141.5" x2="363" y2="141.5" stroke="#000" stroke-width="1"/>
<text x="363" y="144.0" font-size="8.6" fill="#000" stroke="#000" stroke-width="0.15" text-anchor="start" textLength="10.2" lengthAdjust="spacingAndGlyphs" >30</text>
<line x1="357" y1="153.5" x2="363" y2="153.5" stroke="#000" stroke-width="1"/>
<text x="363" y="156.0" font-size="8.6" fill="#000" stroke="#000" stroke-width="0.15" text-anchor="start" textLength="10.2" lengthAdjust="spacingAndGlyphs" >20</text>
<line x1="357" y1="165.5" x2="363" y2="165.5" stroke="#000" stroke-width="1"/>
<text x="363" y="168.0" font-size="8.6" fill="#000" stroke="#000" stroke-width="0.15" text-anchor="start" textLength="10.2" lengthAdjust="spacingAndGlyphs" >10</text>
<line x1="357" y1="175.5" x2="363" y2="175.5" stroke="#000" stroke-width="1"/>
<text x="363" y="174.8" font-size="8.6" fill="#000" stroke="#000" stroke-width="0.15" text-anchor="start" textLength="5.1" lengthAdjust="spacingAndGlyphs" >0</text>
<text x="10.6" y="225.8" font-size="9.4" font-weight="bold" fill="#000" text-anchor="start" textLength="62" lengthAdjust="spacingAndGlyphs" >Instrument</text>
<text x="195.5" y="225.8" font-size="9.4" font-weight="bold" fill="#000" text-anchor="middle" textLength="36.3" lengthAdjust="spacingAndGlyphs" >Status</text>
<text x="381.6" y="225.8" font-size="9.4" font-weight="bold" fill="#000" text-anchor="end" textLength="41.6" lengthAdjust="spacingAndGlyphs" >Current</text>
<rect x="45.00" y="228.00" width="302.00" height="63.00" fill="#000" />
<rect x="46.00" y="231.00" width="301.00" height="8.00" fill="#00ff00" />
<circle cx="361.3" cy="235.5" r="3.8" fill="#00e000" stroke="#000" stroke-width="0.9"/>
<text x="10.6" y="239" font-size="8.2" fill="#000" stroke="#000" stroke-width="0.15" text-anchor="start" textLength="27.2" lengthAdjust="spacingAndGlyphs" >RADAR</text>
<rect x="46.00" y="245.00" width="301.00" height="8.00" fill="#00ff00" />
<circle cx="361.3" cy="249.5" r="3.8" fill="#00e000" stroke="#000" stroke-width="0.9"/>
<text x="10.6" y="253" font-size="8.2" fill="#000" stroke="#000" stroke-width="0.15" text-anchor="start" textLength="27.2" lengthAdjust="spacingAndGlyphs" >CLMTR</text>
<rect x="46.00" y="259.00" width="301.00" height="8.00" fill="#00ff00" />
<circle cx="361.3" cy="263.5" r="3.8" fill="#00e000" stroke="#000" stroke-width="0.9"/>
<text x="10.6" y="267" font-size="8.2" fill="#000" stroke="#000" stroke-width="0.15" text-anchor="start" textLength="24" lengthAdjust="spacingAndGlyphs" >RDMR</text>
<rect x="46.00" y="273.00" width="301.00" height="8.00" fill="#00ff00" />
<circle cx="361.3" cy="277.5" r="3.8" fill="#00e000" stroke="#000" stroke-width="0.9"/>
<text x="10.6" y="281" font-size="8.2" fill="#000" stroke="#000" stroke-width="0.15" text-anchor="start" textLength="20.4" lengthAdjust="spacingAndGlyphs" >DRY?</text>
<rect x="290.00" y="273.00" width="40.00" height="8.00" fill="#ff0000" />
<line x1="45.5" y1="291" x2="45.5" y2="302" stroke="#000" stroke-width="1"/>
<line x1="70.5" y1="291" x2="70.5" y2="297" stroke="#000" stroke-width="1"/>
<line x1="95.5" y1="291" x2="95.5" y2="302" stroke="#000" stroke-width="1"/>
<line x1="120.5" y1="291" x2="120.5" y2="297" stroke="#000" stroke-width="1"/>
<line x1="145.5" y1="291" x2="145.5" y2="302" stroke="#000" stroke-width="1"/>
<line x1="170.5" y1="291" x2="170.5" y2="297" stroke="#000" stroke-width="1"/>
<line x1="196.5" y1="291" x2="196.5" y2="302" stroke="#000" stroke-width="1"/>
<line x1="221.5" y1="291" x2="221.5" y2="297" stroke="#000" stroke-width="1"/>
<line x1="246.5" y1="291" x2="246.5" y2="302" stroke="#000" stroke-width="1"/>
<line x1="271.5" y1="291" x2="271.5" y2="297" stroke="#000" stroke-width="1"/>
<line x1="296.5" y1="291" x2="296.5" y2="302" stroke="#000" stroke-width="1"/>
<line x1="321.5" y1="291" x2="321.5" y2="297" stroke="#000" stroke-width="1"/>
<line x1="346.5" y1="291" x2="346.5" y2="302" stroke="#000" stroke-width="1"/>
<text x="10.6" y="314.6" font-size="9.6" fill="#000" stroke="#000" stroke-width="0.15" text-anchor="start" textLength="79.6" lengthAdjust="spacingAndGlyphs" >Alt (1000ft MSL)</text>
<text x="196.5" y="314.6" font-size="9.6" font-weight="bold" fill="#000" text-anchor="middle" textLength="68" lengthAdjust="spacingAndGlyphs" >Icing Hazard</text>
<text x="382" y="314.6" font-size="9.6" fill="#000" stroke="#000" stroke-width="0.15" text-anchor="end" textLength="39.5" lengthAdjust="spacingAndGlyphs" >Severity</text>
<rect x="45.00" y="317.00" width="302.00" height="162.00" fill="#000" />
<rect x="49.00" y="398.00" width="7.00" height="26.00" fill="#808080" />
<rect x="49.00" y="398.00" width="3.00" height="26.00" fill="#c0c0c0" />
<rect x="53.00" y="400.00" width="3.00" height="10.00" fill="#0000ff" />
<rect x="46.00" y="413.00" width="6.00" height="2.00" fill="#0000ff" />
<rect x="46.00" y="415.00" width="4.00" height="3.00" fill="#00ff00" />
<rect x="51.00" y="428.00" width="2.00" height="7.00" fill="#c0c0c0" />
<rect x="59.00" y="411.00" width="2.00" height="5.00" fill="#c0c0c0" />
<rect x="59.00" y="433.00" width="2.00" height="14.00" fill="#808080" />
<rect x="59.00" y="447.00" width="2.00" height="9.00" fill="#c0c0c0" />
<rect x="66.00" y="442.00" width="3.00" height="2.00" fill="#0000ff" />
<rect x="66.00" y="444.00" width="3.00" height="10.00" fill="#808080" />
<rect x="79.00" y="412.00" width="5.00" height="5.00" fill="#c0c0c0" />
<rect x="81.00" y="432.00" width="2.00" height="15.00" fill="#808080" />
<rect x="79.00" y="448.00" width="3.00" height="4.00" fill="#c0c0c0" />
<rect x="86.00" y="412.00" width="6.00" height="33.00" fill="#0000ff" />
<rect x="86.00" y="418.00" width="4.00" height="6.00" fill="#00ff00" />
<rect x="84.00" y="440.00" width="2.00" height="6.00" fill="#808080" />
<rect x="92.00" y="403.00" width="8.00" height="42.00" fill="#c0c0c0" />
<rect x="94.00" y="420.00" width="2.00" height="20.00" fill="#808080" />
<rect x="100.00" y="403.00" width="8.00" height="39.00" fill="#0000ff" />
<rect x="102.00" y="430.00" width="2.00" height="10.00" fill="#c0c0c0" />
<rect x="107.00" y="420.00" width="7.00" height="25.00" fill="#808080" />
<rect x="108.00" y="440.00" width="5.00" height="15.00" fill="#c0c0c0" />
<rect x="114.00" y="395.00" width="6.00" height="60.00" fill="#c0c0c0" />
<rect x="116.00" y="420.00" width="3.00" height="35.00" fill="#808080" />
<rect x="119.00" y="415.00" width="8.00" height="40.00" fill="#808080" />
<rect x="119.00" y="397.00" width="8.00" height="19.00" fill="#c0c0c0" />
<rect x="121.00" y="404.00" width="3.00" height="6.00" fill="#808080" />
<rect x="126.00" y="397.00" width="7.00" height="49.00" fill="#c0c0c0" />
<rect x="127.00" y="410.00" width="4.00" height="36.00" fill="#808080" />
<rect x="128.00" y="412.00" width="3.00" height="6.00" fill="#0000ff" />
<rect x="139.00" y="400.00" width="5.00" height="5.00" fill="#c0c0c0" />
<rect x="139.00" y="408.00" width="5.00" height="47.00" fill="#808080" />
<rect x="139.00" y="425.00" width="5.00" height="5.00" fill="#0000ff" />
<rect x="144.00" y="395.00" width="4.00" height="37.00" fill="#0000ff" />
<rect x="144.00" y="432.00" width="4.00" height="23.00" fill="#c0c0c0" />
<rect x="148.00" y="393.00" width="4.00" height="59.00" fill="#c0c0c0" />
<rect x="152.00" y="390.00" width="12.00" height="55.00" fill="#0000ff" />
<rect x="152.00" y="445.00" width="12.00" height="10.00" fill="#808080" />
<rect x="161.00" y="423.00" width="3.00" height="9.00" fill="#808080" />
<rect x="164.00" y="397.00" width="9.00" height="55.00" fill="#808080" />
<rect x="173.00" y="405.00" width="7.00" height="47.00" fill="#c0c0c0" />
<rect x="180.00" y="418.00" width="4.00" height="34.00" fill="#c0c0c0" />
<rect x="184.00" y="405.00" width="6.00" height="47.00" fill="#c0c0c0" />
<rect x="188.00" y="400.00" width="2.00" height="52.00" fill="#c0c0c0" />
<rect x="190.00" y="395.00" width="14.00" height="57.00" fill="#808080" />
<rect x="197.00" y="397.00" width="3.00" height="13.00" fill="#0000ff" />
<rect x="200.00" y="440.00" width="4.00" height="12.00" fill="#c0c0c0" />
<rect x="196.00" y="445.00" width="3.00" height="7.00" fill="#0000ff" />
<rect x="203.00" y="392.00" width="5.00" height="8.00" fill="#c0c0c0" />
<rect x="203.00" y="400.00" width="5.00" height="52.00" fill="#808080" />
<rect x="208.00" y="392.00" width="7.00" height="63.00" fill="#808080" />
<rect x="210.00" y="399.00" width="5.00" height="41.00" fill="#c0c0c0" />
<rect x="215.00" y="392.00" width="3.00" height="48.00" fill="#0000ff" />
<rect x="218.00" y="389.00" width="8.00" height="63.00" fill="#808080" />
<rect x="226.00" y="389.00" width="10.00" height="63.00" fill="#0000ff" />
<rect x="230.00" y="395.00" width="3.00" height="57.00" fill="#808080" />
<rect x="236.00" y="393.00" width="3.00" height="52.00" fill="#00ff00" />
<rect x="239.00" y="392.00" width="5.00" height="58.00" fill="#0000ff" />
<rect x="241.00" y="420.00" width="3.00" height="30.00" fill="#c0c0c0" />
<rect x="244.00" y="392.00" width="2.00" height="63.00" fill="#0000ff" />
<rect x="246.00" y="395.00" width="6.00" height="57.00" fill="#808080" />
<rect x="247.00" y="404.00" width="4.00" height="48.00" fill="#c0c0c0" />
<rect x="255.00" y="399.00" width="5.00" height="53.00" fill="#808080" />
<rect x="256.00" y="420.00" width="3.00" height="32.00" fill="#c0c0c0" />
<rect x="260.00" y="396.00" width="8.00" height="56.00" fill="#0000ff" />
<rect x="260.00" y="434.00" width="8.00" height="18.00" fill="#808080" />
<rect x="268.00" y="400.00" width="6.00" height="52.00" fill="#808080" />
<rect x="274.00" y="403.00" width="9.00" height="49.00" fill="#808080" />
<rect x="274.00" y="418.00" width="9.00" height="37.00" fill="#c0c0c0" />
<rect x="283.00" y="410.00" width="10.00" height="45.00" fill="#0000ff" />
<rect x="287.00" y="405.00" width="2.00" height="25.00" fill="#00ff00" />
<rect x="283.00" y="415.00" width="4.00" height="2.00" fill="#00ff00" />
<rect x="293.00" y="403.00" width="5.00" height="49.00" fill="#808080" />
<rect x="298.00" y="402.00" width="10.00" height="35.00" fill="#0000ff" />
<rect x="298.00" y="437.00" width="10.00" height="15.00" fill="#808080" />
<rect x="308.00" y="405.00" width="8.00" height="50.00" fill="#c0c0c0" />
<rect x="308.00" y="405.00" width="4.00" height="15.00" fill="#808080" />
<rect x="316.00" y="423.00" width="6.00" height="32.00" fill="#c0c0c0" />
<rect x="322.00" y="398.00" width="8.00" height="57.00" fill="#c0c0c0" />
<rect x="328.00" y="420.00" width="2.00" height="28.00" fill="#808080" />
<rect x="330.00" y="424.00" width="17.00" height="31.00" fill="#c0c0c0" />
<rect x="330.00" y="400.00" width="7.00" height="15.00" fill="#c0c0c0" />
<rect x="110.00" y="452.00" width="3.00" height="3.00" fill="#c0c0c0" />
<rect x="119.00" y="452.00" width="3.00" height="2.00" fill="#c0c0c0" />
<rect x="122.00" y="452.00" width="3.00" height="2.00" fill="#c0c0c0" />
<rect x="125.00" y="452.00" width="3.00" height="2.00" fill="#c0c0c0" />
<rect x="128.00" y="452.00" width="3.00" height="2.00" fill="#c0c0c0" />
<rect x="131.00" y="452.00" width="3.00" height="2.00" fill="#c0c0c0" />
<rect x="134.00" y="452.00" width="3.00" height="3.00" fill="#c0c0c0" />
<rect x="140.00" y="452.00" width="3.00" height="2.00" fill="#c0c0c0" />
<rect x="143.00" y="452.00" width="3.00" height="3.00" fill="#c0c0c0" />
<rect x="146.00" y="452.00" width="3.00" height="3.00" fill="#c0c0c0" />
<rect x="149.00" y="452.00" width="3.00" height="3.00" fill="#c0c0c0" />
<rect x="155.00" y="452.00" width="3.00" height="3.00" fill="#c0c0c0" />
<rect x="161.00" y="452.00" width="3.00" height="3.00" fill="#c0c0c0" />
<rect x="164.00" y="452.00" width="3.00" height="2.00" fill="#c0c0c0" />
<rect x="167.00" y="452.00" width="3.00" height="2.00" fill="#c0c0c0" />
<rect x="170.00" y="452.00" width="3.00" height="1.00" fill="#c0c0c0" />
<rect x="173.00" y="452.00" width="3.00" height="3.00" fill="#c0c0c0" />
<rect x="179.00" y="452.00" width="3.00" height="3.00" fill="#c0c0c0" />
<rect x="185.00" y="452.00" width="3.00" height="1.00" fill="#c0c0c0" />
<rect x="191.00" y="452.00" width="3.00" height="3.00" fill="#c0c0c0" />
<rect x="194.00" y="452.00" width="3.00" height="2.00" fill="#c0c0c0" />
<rect x="197.00" y="452.00" width="3.00" height="1.00" fill="#c0c0c0" />
<rect x="200.00" y="452.00" width="3.00" height="1.00" fill="#c0c0c0" />
<rect x="203.00" y="452.00" width="3.00" height="3.00" fill="#c0c0c0" />
<rect x="206.00" y="452.00" width="3.00" height="1.00" fill="#c0c0c0" />
<rect x="212.00" y="452.00" width="3.00" height="2.00" fill="#c0c0c0" />
<rect x="215.00" y="452.00" width="3.00" height="3.00" fill="#c0c0c0" />
<rect x="218.00" y="452.00" width="3.00" height="2.00" fill="#c0c0c0" />
<rect x="227.00" y="452.00" width="3.00" height="2.00" fill="#c0c0c0" />
<rect x="248.00" y="452.00" width="3.00" height="3.00" fill="#c0c0c0" />
<rect x="251.00" y="452.00" width="3.00" height="1.00" fill="#c0c0c0" />
<rect x="254.00" y="452.00" width="3.00" height="1.00" fill="#c0c0c0" />
<rect x="266.00" y="452.00" width="3.00" height="1.00" fill="#c0c0c0" />
<rect x="269.00" y="452.00" width="3.00" height="1.00" fill="#c0c0c0" />
<rect x="272.00" y="452.00" width="3.00" height="3.00" fill="#c0c0c0" />
<rect x="275.00" y="452.00" width="3.00" height="1.00" fill="#c0c0c0" />
<rect x="278.00" y="452.00" width="3.00" height="2.00" fill="#c0c0c0" />
<rect x="284.00" y="452.00" width="3.00" height="3.00" fill="#c0c0c0" />
<rect x="290.00" y="452.00" width="3.00" height="2.00" fill="#c0c0c0" />
<rect x="296.00" y="452.00" width="3.00" height="2.00" fill="#c0c0c0" />
<rect x="299.00" y="452.00" width="3.00" height="1.00" fill="#c0c0c0" />
<rect x="311.00" y="452.00" width="3.00" height="3.00" fill="#c0c0c0" />
<rect x="314.00" y="452.00" width="3.00" height="2.00" fill="#c0c0c0" />
<rect x="317.00" y="452.00" width="3.00" height="2.00" fill="#c0c0c0" />
<rect x="326.00" y="452.00" width="3.00" height="2.00" fill="#c0c0c0" />
<rect x="332.00" y="452.00" width="3.00" height="3.00" fill="#c0c0c0" />
<rect x="341.00" y="452.00" width="3.00" height="1.00" fill="#c0c0c0" />
<line x1="40" y1="319.5" x2="45" y2="319.5" stroke="#000" stroke-width="1"/>
<text x="39.5" y="322.0" font-size="8.6" fill="#000" stroke="#000" stroke-width="0.15" text-anchor="end" >26</text>
<line x1="40" y1="329.5" x2="45" y2="329.5" stroke="#000" stroke-width="1"/>
<text x="39.5" y="332.0" font-size="8.6" fill="#000" stroke="#000" stroke-width="0.15" text-anchor="end" >24</text>
<line x1="40" y1="341.5" x2="45" y2="341.5" stroke="#000" stroke-width="1"/>
<text x="39.5" y="344.0" font-size="8.6" fill="#000" stroke="#000" stroke-width="0.15" text-anchor="end" >22</text>
<line x1="40" y1="353.5" x2="45" y2="353.5" stroke="#000" stroke-width="1"/>
<text x="39.5" y="356.0" font-size="8.6" fill="#000" stroke="#000" stroke-width="0.15" text-anchor="end" >20</text>
<line x1="40" y1="365.5" x2="45" y2="365.5" stroke="#000" stroke-width="1"/>
<text x="39.5" y="368.0" font-size="8.6" fill="#000" stroke="#000" stroke-width="0.15" text-anchor="end" >18</text>
<line x1="40" y1="377.5" x2="45" y2="377.5" stroke="#000" stroke-width="1"/>
<text x="39.5" y="380.0" font-size="8.6" fill="#000" stroke="#000" stroke-width="0.15" text-anchor="end" >16</text>
<line x1="40" y1="389.5" x2="45" y2="389.5" stroke="#000" stroke-width="1"/>
<text x="39.5" y="392.0" font-size="8.6" fill="#000" stroke="#000" stroke-width="0.15" text-anchor="end" >14</text>
<line x1="40" y1="401.5" x2="45" y2="401.5" stroke="#000" stroke-width="1"/>
<text x="39.5" y="404.0" font-size="8.6" fill="#000" stroke="#000" stroke-width="0.15" text-anchor="end" >12</text>
<line x1="40" y1="413.5" x2="45" y2="413.5" stroke="#000" stroke-width="1"/>
<text x="39.5" y="416.0" font-size="8.6" fill="#000" stroke="#000" stroke-width="0.15" text-anchor="end" >10</text>
<line x1="40" y1="425.5" x2="45" y2="425.5" stroke="#000" stroke-width="1"/>
<text x="39.5" y="428.0" font-size="8.6" fill="#000" stroke="#000" stroke-width="0.15" text-anchor="end" >8</text>
<line x1="40" y1="437.5" x2="45" y2="437.5" stroke="#000" stroke-width="1"/>
<text x="39.5" y="440.0" font-size="8.6" fill="#000" stroke="#000" stroke-width="0.15" text-anchor="end" >6</text>
<line x1="40" y1="449.5" x2="45" y2="449.5" stroke="#000" stroke-width="1"/>
<text x="39.5" y="452.0" font-size="8.6" fill="#000" stroke="#000" stroke-width="0.15" text-anchor="end" >4</text>
<line x1="40" y1="461.5" x2="45" y2="461.5" stroke="#000" stroke-width="1"/>
<text x="39.5" y="464.0" font-size="8.6" fill="#000" stroke="#000" stroke-width="0.15" text-anchor="end" >2</text>
<line x1="40" y1="471.5" x2="45" y2="471.5" stroke="#000" stroke-width="1"/>
<text x="39.5" y="470.8" font-size="8.6" fill="#000" stroke="#000" stroke-width="0.15" text-anchor="end" >0</text>
<line x1="45.5" y1="479" x2="45.5" y2="490" stroke="#000" stroke-width="1"/>
<line x1="70.5" y1="479" x2="70.5" y2="485" stroke="#000" stroke-width="1"/>
<line x1="95.5" y1="479" x2="95.5" y2="490" stroke="#000" stroke-width="1"/>
<line x1="120.5" y1="479" x2="120.5" y2="485" stroke="#000" stroke-width="1"/>
<line x1="145.5" y1="479" x2="145.5" y2="490" stroke="#000" stroke-width="1"/>
<line x1="170.5" y1="479" x2="170.5" y2="485" stroke="#000" stroke-width="1"/>
<line x1="196.5" y1="479" x2="196.5" y2="490" stroke="#000" stroke-width="1"/>
<line x1="221.5" y1="479" x2="221.5" y2="485" stroke="#000" stroke-width="1"/>
<line x1="246.5" y1="479" x2="246.5" y2="490" stroke="#000" stroke-width="1"/>
<line x1="271.5" y1="479" x2="271.5" y2="485" stroke="#000" stroke-width="1"/>
<line x1="296.5" y1="479" x2="296.5" y2="490" stroke="#000" stroke-width="1"/>
<line x1="321.5" y1="479" x2="321.5" y2="485" stroke="#000" stroke-width="1"/>
<line x1="346.5" y1="479" x2="346.5" y2="490" stroke="#000" stroke-width="1"/>
<text x="40.5" y="499.6" font-size="8.6" fill="#000" stroke="#000" stroke-width="0.15" text-anchor="start" textLength="21.8" lengthAdjust="spacingAndGlyphs" >16:51</text>
<text x="90.8" y="499.6" font-size="8.6" fill="#000" stroke="#000" stroke-width="0.15" text-anchor="start" textLength="21.8" lengthAdjust="spacingAndGlyphs" >17:11</text>
<text x="141.2" y="499.6" font-size="8.6" fill="#000" stroke="#000" stroke-width="0.15" text-anchor="start" textLength="21.8" lengthAdjust="spacingAndGlyphs" >17:31</text>
<text x="191.5" y="499.6" font-size="8.6" fill="#000" stroke="#000" stroke-width="0.15" text-anchor="start" textLength="21.8" lengthAdjust="spacingAndGlyphs" >17:51</text>
<text x="241.8" y="499.6" font-size="8.6" fill="#000" stroke="#000" stroke-width="0.15" text-anchor="start" textLength="21.8" lengthAdjust="spacingAndGlyphs" >18:11</text>
<text x="292.2" y="499.6" font-size="8.6" fill="#000" stroke="#000" stroke-width="0.15" text-anchor="start" textLength="21.8" lengthAdjust="spacingAndGlyphs" >18:31</text>
<text x="342.5" y="499.6" font-size="8.6" fill="#000" stroke="#000" stroke-width="0.15" text-anchor="start" textLength="21.8" lengthAdjust="spacingAndGlyphs" >18:51</text>
<rect x="350.00" y="317.00" width="6.00" height="21.00" fill="#ff0000" />
<rect x="350.00" y="338.00" width="6.00" height="21.00" fill="#ffafaf" />
<rect x="350.00" y="359.00" width="6.00" height="21.00" fill="#ffff00" />
<rect x="350.00" y="380.00" width="6.00" height="20.50" fill="#00ff00" />
<rect x="350.00" y="400.50" width="6.00" height="20.50" fill="#0000ff" />
<rect x="350.00" y="421.00" width="6.00" height="21.00" fill="#808080" />
<rect x="350.00" y="442.00" width="6.00" height="20.50" fill="#c0c0c0" />
<rect x="350.00" y="462.50" width="6.00" height="20.50" fill="#000000" />
<text x="357.4" y="321.9" font-size="8" fill="#000" stroke="#000" stroke-width="0.15" text-anchor="start" textLength="15.2" lengthAdjust="spacingAndGlyphs" >HVY</text>
<text x="357.4" y="342.6" font-size="8" fill="#000" stroke="#000" stroke-width="0.15" text-anchor="start" textLength="24.9" lengthAdjust="spacingAndGlyphs" >M.HVY</text>
<text x="357.4" y="365.7" font-size="8" fill="#000" stroke="#000" stroke-width="0.15" text-anchor="start" textLength="18.6" lengthAdjust="spacingAndGlyphs" >MOD</text>
<text x="357.4" y="388.5" font-size="8" fill="#000" stroke="#000" stroke-width="0.15" text-anchor="start" textLength="25.2" lengthAdjust="spacingAndGlyphs" >L.MOD</text>
<text x="357.4" y="412" font-size="8" fill="#000" stroke="#000" stroke-width="0.15" text-anchor="start" textLength="14.5" lengthAdjust="spacingAndGlyphs" >LGT</text>
<text x="357.4" y="434.9" font-size="8" fill="#000" stroke="#000" stroke-width="0.15" text-anchor="start" textLength="22.6" lengthAdjust="spacingAndGlyphs" >T.LGT</text>
<text x="357.4" y="457.8" font-size="8" fill="#000" stroke="#000" stroke-width="0.15" text-anchor="start" textLength="16.6" lengthAdjust="spacingAndGlyphs" >TRC</text>
<text x="357.4" y="476.1" font-size="8" fill="#000" stroke="#000" stroke-width="0.15" text-anchor="start" textLength="22.8" lengthAdjust="spacingAndGlyphs" >NONE</text>
<text x="10.6" y="521.6" font-size="9.6" fill="#000" stroke="#000" stroke-width="0.15" text-anchor="start" textLength="79.6" lengthAdjust="spacingAndGlyphs" >Alt (1000ft MSL)</text>
<text x="196.2" y="521.6" font-size="9.6" font-weight="bold" fill="#000" text-anchor="middle" textLength="51.2" lengthAdjust="spacingAndGlyphs" >Drop Size</text>
<text x="382" y="521.6" font-size="9.6" fill="#000" stroke="#000" stroke-width="0.15" text-anchor="end" textLength="91.5" lengthAdjust="spacingAndGlyphs" >Drop Size(microns)</text>
<rect x="45.00" y="524.00" width="302.00" height="161.50" fill="#000080" />
<rect x="49.00" y="606.00" width="7.00" height="18.00" fill="#f04010" />
<rect x="50.00" y="624.00" width="5.00" height="6.00" fill="#ffe800" />
<rect x="50.00" y="630.00" width="5.00" height="10.00" fill="#20e0f0" />
<rect x="59.00" y="619.00" width="2.00" height="3.00" fill="#a0ff60" />
<rect x="59.00" y="643.00" width="2.00" height="7.00" fill="#a00000" />
<rect x="59.00" y="650.00" width="2.00" height="20.00" fill="#a0ff60" />
<rect x="59.00" y="670.00" width="2.00" height="4.00" fill="#20e0f0" />
<rect x="66.00" y="648.00" width="3.00" height="26.00" fill="#60f0a0" />
<rect x="79.00" y="620.00" width="4.00" height="20.00" fill="#0050ff" />
<rect x="80.00" y="645.00" width="2.00" height="30.00" fill="#20e0f0" />
<rect x="78.00" y="668.00" width="4.00" height="6.00" fill="#a0ff60" />
<rect x="86.00" y="620.00" width="6.00" height="30.00" fill="#20e0f0" />
<rect x="88.00" y="625.00" width="4.00" height="15.00" fill="#a0ff60" />
<rect x="90.00" y="620.00" width="6.00" height="30.00" fill="#ffe800" />
<rect x="92.00" y="638.00" width="4.00" height="12.00" fill="#ff8000" />
<rect x="96.00" y="628.00" width="4.00" height="20.00" fill="#a00000" />
<rect x="100.00" y="630.00" width="7.00" height="18.00" fill="#ff8000" />
<rect x="101.00" y="642.00" width="4.00" height="10.00" fill="#f01000" />
<rect x="107.00" y="625.00" width="6.00" height="52.00" fill="#f01000" />
<rect x="108.00" y="660.00" width="4.00" height="8.00" fill="#20e0f0" />
<rect x="100.00" y="648.00" width="7.00" height="29.00" fill="#a00000" />
<rect x="96.00" y="648.00" width="4.00" height="29.00" fill="#ff8000" />
<rect x="86.00" y="650.00" width="4.00" height="10.00" fill="#0050ff" />
<rect x="90.00" y="655.00" width="4.00" height="22.00" fill="#f01000" />
<rect x="113.00" y="610.00" width="7.00" height="65.00" fill="#f01000" />
<rect x="114.00" y="603.00" width="4.00" height="12.00" fill="#20e0f0" />
<rect x="118.00" y="640.00" width="4.00" height="35.00" fill="#ff8000" />
<rect x="120.00" y="605.00" width="5.00" height="70.00" fill="#a00000" />
<rect x="123.00" y="605.00" width="4.00" height="15.00" fill="#60c0ff" />
<rect x="125.00" y="620.00" width="7.00" height="30.00" fill="#ffe800" />
<rect x="126.00" y="635.00" width="4.00" height="15.00" fill="#20e0f0" />
<rect x="125.00" y="650.00" width="7.00" height="25.00" fill="#f01000" />
<rect x="139.00" y="607.00" width="5.00" height="58.00" fill="#a00000" />
<rect x="139.00" y="640.00" width="5.00" height="5.00" fill="#20e0f0" />
<rect x="139.00" y="668.00" width="5.00" height="5.00" fill="#20e0f0" />
<rect x="144.00" y="615.00" width="4.00" height="60.00" fill="#f01000" />
<rect x="144.00" y="662.00" width="3.00" height="8.00" fill="#20e0f0" />
<rect x="148.00" y="599.00" width="9.00" height="77.00" fill="#f01000" />
<rect x="150.00" y="604.00" width="5.00" height="72.00" fill="#ff8000" />
<rect x="152.00" y="610.00" width="3.00" height="66.00" fill="#a00000" />
<rect x="157.00" y="602.00" width="6.00" height="63.00" fill="#ffe800" />
<rect x="157.00" y="665.00" width="6.00" height="11.00" fill="#a00000" />
<rect x="163.00" y="606.00" width="7.00" height="70.00" fill="#a00000" />
<rect x="164.00" y="660.00" width="4.00" height="16.00" fill="#ff8000" />
<rect x="170.00" y="612.00" width="3.00" height="65.00" fill="#a0ff60" />
<rect x="173.00" y="632.00" width="13.00" height="45.00" fill="#f01000" />
<rect x="173.00" y="628.00" width="4.00" height="4.00" fill="#ffe800" />
<rect x="175.00" y="634.00" width="5.00" height="43.00" fill="#ff8000" />
<rect x="186.00" y="616.00" width="10.00" height="61.00" fill="#f01000" />
<rect x="190.00" y="630.00" width="4.00" height="47.00" fill="#a00000" />
<rect x="184.00" y="622.00" width="6.00" height="6.00" fill="#ffe800" />
<rect x="196.00" y="600.00" width="9.00" height="77.00" fill="#f01000" />
<rect x="196.00" y="600.00" width="4.00" height="6.00" fill="#20e0f0" />
<rect x="205.00" y="603.00" width="7.00" height="74.00" fill="#f01000" />
<rect x="204.00" y="615.00" width="5.00" height="8.00" fill="#20e0f0" />
<rect x="212.00" y="600.00" width="4.00" height="77.00" fill="#ff8000" />
<rect x="216.00" y="598.00" width="14.00" height="79.00" fill="#f01000" />
<rect x="220.00" y="600.00" width="6.00" height="77.00" fill="#a00000" />
<rect x="230.00" y="598.00" width="5.00" height="79.00" fill="#ff8000" />
<rect x="235.00" y="600.00" width="9.00" height="77.00" fill="#f01000" />
<rect x="238.00" y="602.00" width="4.00" height="75.00" fill="#a00000" />
<rect x="241.00" y="602.00" width="3.00" height="75.00" fill="#ffe800" />
<rect x="244.00" y="602.00" width="2.00" height="73.00" fill="#80c080" />
<rect x="247.00" y="606.00" width="5.00" height="71.00" fill="#f01000" />
<rect x="249.00" y="606.00" width="3.00" height="71.00" fill="#ff8000" />
<rect x="256.00" y="612.00" width="2.00" height="65.00" fill="#a00000" />
<rect x="258.00" y="607.00" width="5.00" height="70.00" fill="#ffe800" />
<rect x="263.00" y="604.00" width="3.00" height="73.00" fill="#20e0f0" />
<rect x="266.00" y="610.00" width="4.00" height="67.00" fill="#ff8000" />
<rect x="270.00" y="610.00" width="3.00" height="67.00" fill="#a00000" />
<rect x="273.00" y="610.00" width="3.00" height="67.00" fill="#ffe800" />
<rect x="276.00" y="615.00" width="5.00" height="62.00" fill="#ff8000" />
<rect x="278.00" y="620.00" width="3.00" height="57.00" fill="#f01000" />
<rect x="281.00" y="620.00" width="5.00" height="57.00" fill="#f01000" />
<rect x="286.00" y="626.00" width="3.00" height="51.00" fill="#ff8000" />
<rect x="289.00" y="615.00" width="4.00" height="62.00" fill="#f01000" />
<rect x="293.00" y="612.00" width="4.00" height="65.00" fill="#ffe800" />
<rect x="297.00" y="620.00" width="6.00" height="57.00" fill="#f01000" />
<rect x="303.00" y="612.00" width="7.00" height="65.00" fill="#a00000" />
<rect x="310.00" y="630.00" width="8.00" height="47.00" fill="#f01000" />
<rect x="318.00" y="635.00" width="7.00" height="42.00" fill="#a00000" />
<rect x="325.00" y="625.00" width="4.00" height="52.00" fill="#ffe800" />
<rect x="325.00" y="607.00" width="4.00" height="23.00" fill="#ff8000" />
<rect x="330.00" y="608.00" width="3.00" height="12.00" fill="#a0ff60" />
<rect x="333.00" y="612.00" width="3.00" height="8.00" fill="#a00000" />
<rect x="329.00" y="637.00" width="4.00" height="40.00" fill="#a00000" />
<rect x="333.00" y="640.00" width="4.00" height="37.00" fill="#ff8000" />
<rect x="337.00" y="632.00" width="10.00" height="45.00" fill="#a00000" />
<rect x="322.00" y="632.00" width="7.00" height="8.00" fill="#20e0f0" />
<rect x="336.00" y="630.00" width="5.00" height="6.00" fill="#20e0f0" />
<rect x="113.00" y="609.00" width="2.00" height="2.00" fill="#20e0f0" />
<rect x="117.00" y="601.00" width="2.00" height="2.00" fill="#20e0f0" />
<rect x="125.00" y="603.00" width="2.00" height="2.00" fill="#ffe800" />
<rect x="129.00" y="616.00" width="2.00" height="2.00" fill="#20e0f0" />
<rect x="147.00" y="613.00" width="2.00" height="1.00" fill="#20e0f0" />
<rect x="149.00" y="593.00" width="2.00" height="2.00" fill="#20e0f0" />
<rect x="151.00" y="598.00" width="2.00" height="2.00" fill="#0050ff" />
<rect x="155.00" y="597.00" width="2.00" height="1.00" fill="#20e0f0" />
<rect x="161.00" y="599.00" width="2.00" height="2.00" fill="#20e0f0" />
<rect x="163.00" y="603.00" width="2.00" height="2.00" fill="#0050ff" />
<rect x="167.00" y="602.00" width="2.00" height="1.00" fill="#a0ff60" />
<rect x="169.00" y="605.00" width="2.00" height="2.00" fill="#a0ff60" />
<rect x="173.00" y="622.00" width="2.00" height="1.00" fill="#0050ff" />
<rect x="175.00" y="625.00" width="2.00" height="1.00" fill="#ffe800" />
<rect x="179.00" y="628.00" width="2.00" height="2.00" fill="#20e0f0" />
<rect x="185.00" y="621.00" width="2.00" height="2.00" fill="#60c0ff" />
<rect x="187.00" y="610.00" width="2.00" height="2.00" fill="#ffe800" />
<rect x="191.00" y="615.00" width="2.00" height="1.00" fill="#20e0f0" />
<rect x="193.00" y="614.00" width="2.00" height="2.00" fill="#60c0ff" />
<rect x="195.00" y="613.00" width="2.00" height="1.00" fill="#a0ff60" />
<rect x="197.00" y="599.00" width="2.00" height="2.00" fill="#20e0f0" />
<rect x="199.00" y="597.00" width="2.00" height="1.00" fill="#0050ff" />
<rect x="201.00" y="594.00" width="2.00" height="2.00" fill="#20e0f0" />
<rect x="205.00" y="602.00" width="2.00" height="2.00" fill="#20e0f0" />
<rect x="207.00" y="600.00" width="2.00" height="2.00" fill="#ffe800" />
<rect x="211.00" y="601.00" width="2.00" height="1.00" fill="#60c0ff" />
<rect x="213.00" y="598.00" width="2.00" height="1.00" fill="#20e0f0" />
<rect x="215.00" y="596.00" width="2.00" height="2.00" fill="#ffe800" />
<rect x="219.00" y="592.00" width="2.00" height="1.00" fill="#60c0ff" />
<rect x="221.00" y="596.00" width="2.00" height="2.00" fill="#20e0f0" />
<rect x="225.00" y="596.00" width="2.00" height="2.00" fill="#ffe800" />
<rect x="233.00" y="594.00" width="2.00" height="1.00" fill="#20e0f0" />
<rect x="235.00" y="597.00" width="2.00" height="1.00" fill="#20e0f0" />
<rect x="237.00" y="594.00" width="2.00" height="1.00" fill="#20e0f0" />
<rect x="239.00" y="594.00" width="2.00" height="1.00" fill="#20e0f0" />
<rect x="241.00" y="598.00" width="2.00" height="1.00" fill="#a0ff60" />
<rect x="243.00" y="597.00" width="2.00" height="2.00" fill="#20e0f0" />
<rect x="245.00" y="598.00" width="2.00" height="2.00" fill="#20e0f0" />
<rect x="249.00" y="604.00" width="2.00" height="1.00" fill="#60c0ff" />
<rect x="251.00" y="605.00" width="2.00" height="1.00" fill="#20e0f0" />
<rect x="259.00" y="603.00" width="2.00" height="1.00" fill="#60c0ff" />
<rect x="263.00" y="603.00" width="2.00" height="2.00" fill="#20e0f0" />
<rect x="265.00" y="598.00" width="2.00" height="1.00" fill="#60c0ff" />
<rect x="267.00" y="607.00" width="2.00" height="1.00" fill="#60c0ff" />
<rect x="269.00" y="609.00" width="2.00" height="1.00" fill="#0050ff" />
<rect x="271.00" y="606.00" width="2.00" height="2.00" fill="#60c0ff" />
<rect x="273.00" y="604.00" width="2.00" height="1.00" fill="#a0ff60" />
<rect x="279.00" y="612.00" width="2.00" height="2.00" fill="#ffe800" />
<rect x="281.00" y="618.00" width="2.00" height="2.00" fill="#20e0f0" />
<rect x="283.00" y="616.00" width="2.00" height="2.00" fill="#0050ff" />
<rect x="287.00" y="625.00" width="2.00" height="1.00" fill="#0050ff" />
<rect x="291.00" y="609.00" width="2.00" height="2.00" fill="#a0ff60" />
<rect x="293.00" y="610.00" width="2.00" height="1.00" fill="#ffe800" />
<rect x="295.00" y="609.00" width="2.00" height="2.00" fill="#60c0ff" />
<rect x="299.00" y="614.00" width="2.00" height="2.00" fill="#ffe800" />
<rect x="301.00" y="616.00" width="2.00" height="1.00" fill="#20e0f0" />
<rect x="305.00" y="610.00" width="2.00" height="2.00" fill="#a0ff60" />
<rect x="311.00" y="624.00" width="2.00" height="1.00" fill="#0050ff" />
<rect x="313.00" y="629.00" width="2.00" height="2.00" fill="#20e0f0" />
<rect x="317.00" y="624.00" width="2.00" height="2.00" fill="#60c0ff" />
<rect x="321.00" y="634.00" width="2.00" height="2.00" fill="#a0ff60" />
<rect x="325.00" y="605.00" width="2.00" height="2.00" fill="#0050ff" />
<rect x="327.00" y="605.00" width="2.00" height="1.00" fill="#0050ff" />
<rect x="331.00" y="604.00" width="2.00" height="1.00" fill="#60c0ff" />
<rect x="335.00" y="609.00" width="2.00" height="1.00" fill="#a0ff60" />
<rect x="341.00" y="631.00" width="2.00" height="2.00" fill="#60c0ff" />
<rect x="343.00" y="631.00" width="2.00" height="1.00" fill="#20e0f0" />
<rect x="345.00" y="630.00" width="2.00" height="2.00" fill="#60c0ff" />
<rect x="148.00" y="597.00" width="9.00" height="2.00" fill="#20e0f0" />
<rect x="196.00" y="598.00" width="9.00" height="2.00" fill="#20e0f0" />
<rect x="212.00" y="596.00" width="18.00" height="2.00" fill="#20e0f0" />
<rect x="247.00" y="604.00" width="5.00" height="2.00" fill="#20e0f0" />
<rect x="258.00" y="602.00" width="8.00" height="2.00" fill="#20e0f0" />
<rect x="276.00" y="613.00" width="10.00" height="2.00" fill="#20e0f0" />
<rect x="303.00" y="610.00" width="7.00" height="2.00" fill="#20e0f0" />
<rect x="45.00" y="682.00" width="302.00" height="3.50" fill="#000" />
<line x1="40" y1="526.5" x2="45" y2="526.5" stroke="#000" stroke-width="1"/>
<text x="39.5" y="529.0" font-size="8.6" fill="#000" stroke="#000" stroke-width="0.15" text-anchor="end" >26</text>
<line x1="40" y1="536.5" x2="45" y2="536.5" stroke="#000" stroke-width="1"/>
<text x="39.5" y="539.0" font-size="8.6" fill="#000" stroke="#000" stroke-width="0.15" text-anchor="end" >24</text>
<line x1="40" y1="548.5" x2="45" y2="548.5" stroke="#000" stroke-width="1"/>
<text x="39.5" y="551.0" font-size="8.6" fill="#000" stroke="#000" stroke-width="0.15" text-anchor="end" >22</text>
<line x1="40" y1="560.5" x2="45" y2="560.5" stroke="#000" stroke-width="1"/>
<text x="39.5" y="563.0" font-size="8.6" fill="#000" stroke="#000" stroke-width="0.15" text-anchor="end" >20</text>
<line x1="40" y1="572.5" x2="45" y2="572.5" stroke="#000" stroke-width="1"/>
<text x="39.5" y="575.0" font-size="8.6" fill="#000" stroke="#000" stroke-width="0.15" text-anchor="end" >18</text>
<line x1="40" y1="584.5" x2="45" y2="584.5" stroke="#000" stroke-width="1"/>
<text x="39.5" y="587.0" font-size="8.6" fill="#000" stroke="#000" stroke-width="0.15" text-anchor="end" >16</text>
<line x1="40" y1="596.5" x2="45" y2="596.5" stroke="#000" stroke-width="1"/>
<text x="39.5" y="599.0" font-size="8.6" fill="#000" stroke="#000" stroke-width="0.15" text-anchor="end" >14</text>
<line x1="40" y1="608.5" x2="45" y2="608.5" stroke="#000" stroke-width="1"/>
<text x="39.5" y="611.0" font-size="8.6" fill="#000" stroke="#000" stroke-width="0.15" text-anchor="end" >12</text>
<line x1="40" y1="620.5" x2="45" y2="620.5" stroke="#000" stroke-width="1"/>
<text x="39.5" y="623.0" font-size="8.6" fill="#000" stroke="#000" stroke-width="0.15" text-anchor="end" >10</text>
<line x1="40" y1="632.5" x2="45" y2="632.5" stroke="#000" stroke-width="1"/>
<text x="39.5" y="635.0" font-size="8.6" fill="#000" stroke="#000" stroke-width="0.15" text-anchor="end" >8</text>
<line x1="40" y1="644.5" x2="45" y2="644.5" stroke="#000" stroke-width="1"/>
<text x="39.5" y="647.0" font-size="8.6" fill="#000" stroke="#000" stroke-width="0.15" text-anchor="end" >6</text>
<line x1="40" y1="656.5" x2="45" y2="656.5" stroke="#000" stroke-width="1"/>
<text x="39.5" y="659.0" font-size="8.6" fill="#000" stroke="#000" stroke-width="0.15" text-anchor="end" >4</text>
<line x1="40" y1="668.5" x2="45" y2="668.5" stroke="#000" stroke-width="1"/>
<text x="39.5" y="671.0" font-size="8.6" fill="#000" stroke="#000" stroke-width="0.15" text-anchor="end" >2</text>
<line x1="40" y1="678.5" x2="45" y2="678.5" stroke="#000" stroke-width="1"/>
<text x="39.5" y="677.8" font-size="8.6" fill="#000" stroke="#000" stroke-width="0.15" text-anchor="end" >0</text>
<line x1="45.5" y1="685.5" x2="45.5" y2="696.5" stroke="#000" stroke-width="1"/>
<line x1="70.5" y1="685.5" x2="70.5" y2="691.5" stroke="#000" stroke-width="1"/>
<line x1="95.5" y1="685.5" x2="95.5" y2="696.5" stroke="#000" stroke-width="1"/>
<line x1="120.5" y1="685.5" x2="120.5" y2="691.5" stroke="#000" stroke-width="1"/>
<line x1="145.5" y1="685.5" x2="145.5" y2="696.5" stroke="#000" stroke-width="1"/>
<line x1="170.5" y1="685.5" x2="170.5" y2="691.5" stroke="#000" stroke-width="1"/>
<line x1="196.5" y1="685.5" x2="196.5" y2="696.5" stroke="#000" stroke-width="1"/>
<line x1="221.5" y1="685.5" x2="221.5" y2="691.5" stroke="#000" stroke-width="1"/>
<line x1="246.5" y1="685.5" x2="246.5" y2="696.5" stroke="#000" stroke-width="1"/>
<line x1="271.5" y1="685.5" x2="271.5" y2="691.5" stroke="#000" stroke-width="1"/>
<line x1="296.5" y1="685.5" x2="296.5" y2="696.5" stroke="#000" stroke-width="1"/>
<line x1="321.5" y1="685.5" x2="321.5" y2="691.5" stroke="#000" stroke-width="1"/>
<line x1="346.5" y1="685.5" x2="346.5" y2="696.5" stroke="#000" stroke-width="1"/>
<text x="40.5" y="706.1" font-size="8.6" fill="#000" stroke="#000" stroke-width="0.15" text-anchor="start" textLength="21.8" lengthAdjust="spacingAndGlyphs" >16:51</text>
<text x="90.8" y="706.1" font-size="8.6" fill="#000" stroke="#000" stroke-width="0.15" text-anchor="start" textLength="21.8" lengthAdjust="spacingAndGlyphs" >17:11</text>
<text x="141.2" y="706.1" font-size="8.6" fill="#000" stroke="#000" stroke-width="0.15" text-anchor="start" textLength="21.8" lengthAdjust="spacingAndGlyphs" >17:31</text>
<text x="191.5" y="706.1" font-size="8.6" fill="#000" stroke="#000" stroke-width="0.15" text-anchor="start" textLength="21.8" lengthAdjust="spacingAndGlyphs" >17:51</text>
<text x="241.8" y="706.1" font-size="8.6" fill="#000" stroke="#000" stroke-width="0.15" text-anchor="start" textLength="21.8" lengthAdjust="spacingAndGlyphs" >18:11</text>
<text x="292.2" y="706.1" font-size="8.6" fill="#000" stroke="#000" stroke-width="0.15" text-anchor="start" textLength="21.8" lengthAdjust="spacingAndGlyphs" >18:31</text>
<text x="342.5" y="706.1" font-size="8.6" fill="#000" stroke="#000" stroke-width="0.15" text-anchor="start" textLength="21.8" lengthAdjust="spacingAndGlyphs" >18:51</text>
<defs><linearGradient id="jet" x1="0" y1="1" x2="0" y2="0"><stop offset="0" stop-color="#00008f"/><stop offset="0.125" stop-color="#0000ff"/><stop offset="0.375" stop-color="#00ffff"/><stop offset="0.625" stop-color="#ffff00"/><stop offset="0.875" stop-color="#ff0000"/><stop offset="1" stop-color="#800000"/></linearGradient></defs>
<rect x="350.00" y="524.00" width="6.00" height="166.00" fill="url(#jet)" />
<line x1="357" y1="525.5" x2="363" y2="525.5" stroke="#000" stroke-width="1"/>
<text x="363" y="528.2" font-size="8.6" fill="#000" stroke="#000" stroke-width="0.15" text-anchor="start" textLength="10.2" lengthAdjust="spacingAndGlyphs" >60</text>
<line x1="357" y1="551.5" x2="363" y2="551.5" stroke="#000" stroke-width="1"/>
<text x="363" y="553.8" font-size="8.6" fill="#000" stroke="#000" stroke-width="0.15" text-anchor="start" textLength="10.2" lengthAdjust="spacingAndGlyphs" >50</text>
<line x1="357" y1="578.5" x2="363" y2="578.5" stroke="#000" stroke-width="1"/>
<text x="363" y="580.8" font-size="8.6" fill="#000" stroke="#000" stroke-width="0.15" text-anchor="start" textLength="10.2" lengthAdjust="spacingAndGlyphs" >40</text>
<line x1="357" y1="605.5" x2="363" y2="605.5" stroke="#000" stroke-width="1"/>
<text x="363" y="607.7" font-size="8.6" fill="#000" stroke="#000" stroke-width="0.15" text-anchor="start" textLength="10.2" lengthAdjust="spacingAndGlyphs" >30</text>
<line x1="357" y1="632.5" x2="363" y2="632.5" stroke="#000" stroke-width="1"/>
<text x="363" y="634.6" font-size="8.6" fill="#000" stroke="#000" stroke-width="0.15" text-anchor="start" textLength="10.2" lengthAdjust="spacingAndGlyphs" >20</text>
<line x1="357" y1="659.5" x2="363" y2="659.5" stroke="#000" stroke-width="1"/>
<text x="363" y="662.1" font-size="8.6" fill="#000" stroke="#000" stroke-width="0.15" text-anchor="start" textLength="10.2" lengthAdjust="spacingAndGlyphs" >10</text>
<line x1="357" y1="684.5" x2="363" y2="684.5" stroke="#000" stroke-width="1"/>
<text x="363" y="683.0" font-size="8.6" fill="#000" stroke="#000" stroke-width="0.15" text-anchor="start" textLength="5.1" lengthAdjust="spacingAndGlyphs" >0</text>
<text x="402.3" y="17.4" font-size="9.6" fill="#000" stroke="#000" stroke-width="0.15" text-anchor="start" textLength="80" lengthAdjust="spacingAndGlyphs" >Alt (1000ft MSL)</text>
<rect x="437.00" y="20.00" width="302.00" height="133.00" fill="#000" />
<rect x="438.00" y="96.00" width="10.00" height="5.00" fill="#fff" />
<rect x="444.00" y="84.00" width="4.00" height="12.00" fill="#fff" />
<rect x="443.00" y="101.00" width="3.00" height="38.00" fill="#fff" />
<rect x="451.00" y="96.00" width="2.00" height="5.00" fill="#fff" />
<rect x="451.00" y="115.00" width="2.00" height="29.00" fill="#fff" />
<rect x="458.00" y="121.00" width="3.00" height="23.00" fill="#fff" />
<rect x="463.00" y="117.00" width="3.00" height="26.00" fill="#fff" />
<rect x="458.00" y="74.00" width="3.00" height="1.00" fill="#fff" />
<rect x="472.00" y="96.00" width="2.00" height="4.00" fill="#fff" />
<rect x="473.00" y="103.00" width="2.00" height="3.00" fill="#fff" />
<rect x="472.00" y="110.00" width="2.00" height="3.00" fill="#fff" />
<rect x="473.00" y="118.00" width="2.00" height="25.00" fill="#fff" />
<rect x="475.00" y="100.00" width="2.00" height="43.00" fill="#fff" />
<rect x="470.00" y="109.00" width="3.00" height="2.00" fill="#fff" />
<rect x="441.00" y="143.00" width="3.00" height="2.00" fill="#fff" />
<rect x="441.00" y="146.00" width="3.00" height="1.00" fill="#fff" />
<polygon points="476.0,146.0 476.0,96.0 486.0,95.0 486.0,86.0 490.0,86.0 490.0,88.7 503.0,88.7 503.0,104.0 506.0,104.0 506.0,83.4 513.0,81.0 518.0,84.0 530.0,86.0 538.0,83.0 540.0,80.0 545.0,79.0 550.0,77.0 555.0,79.0 560.0,83.0 566.0,90.0 572.0,95.0 577.0,93.0 580.0,91.0 584.0,81.0 590.0,80.0 595.0,85.0 600.0,79.0 610.0,78.0 620.0,76.5 630.0,76.0 640.0,76.5 645.0,83.0 660.0,84.0 665.0,85.5 670.0,85.5 677.0,87.0 685.0,88.0 690.0,89.0 695.0,90.0 702.0,92.0 706.0,100.0 710.0,108.0 713.0,100.0 715.0,85.0 720.0,85.0 728.0,87.0 731.0,95.0 735.0,104.0 739.0,103.0 739.0,146.0" fill="#fff"/>
<polygon points="493.0,94.6 496.0,94.6 496.0,103.0 503.0,110.0 503.0,112.0 500.0,112.0 493.0,104.0" fill="#000"/>
<rect x="516.00" y="87.00" width="8.00" height="5.00" fill="#000" />
<rect x="513.00" y="96.00" width="6.00" height="5.00" fill="#000" />
<polygon points="563.0,95.0 568.0,88.0 575.0,92.0 577.0,102.0 568.0,102.0" fill="#000"/>
<polygon points="590.0,81.0 596.0,84.0 596.0,92.0 592.0,92.0" fill="#000"/>
<rect x="677.00" y="87.00" width="2.00" height="12.00" fill="#000" />
<rect x="702.00" y="92.00" width="4.00" height="6.00" fill="#000" />
<rect x="695.00" y="95.00" width="3.00" height="3.00" fill="#000" />
<polygon points="728.0,87.0 735.0,95.0 739.0,104.0 739.0,107.0 733.0,106.0 729.0,96.0" fill="#000"/>
<rect x="736.00" y="87.00" width="3.00" height="9.00" fill="#fff" />
<rect x="512.00" y="82.00" width="2.00" height="2.00" fill="#000" />
<rect x="518.00" y="82.00" width="2.00" height="2.00" fill="#fff" />
<rect x="520.00" y="91.00" width="2.00" height="1.00" fill="#000" />
<rect x="522.00" y="82.00" width="2.00" height="1.00" fill="#fff" />
<rect x="526.00" y="83.00" width="2.00" height="2.00" fill="#fff" />
<rect x="528.00" y="91.00" width="3.00" height="1.00" fill="#000" />
<rect x="534.00" y="89.00" width="3.00" height="1.00" fill="#000" />
<rect x="542.00" y="80.00" width="3.00" height="1.00" fill="#000" />
<rect x="546.00" y="85.00" width="3.00" height="2.00" fill="#000" />
<rect x="552.00" y="85.00" width="2.00" height="2.00" fill="#000" />
<rect x="556.00" y="82.00" width="3.00" height="1.00" fill="#000" />
<rect x="560.00" y="89.00" width="2.00" height="2.00" fill="#000" />
<rect x="566.00" y="93.00" width="2.00" height="2.00" fill="#000" />
<rect x="570.00" y="92.00" width="2.00" height="2.00" fill="#fff" />
<rect x="574.00" y="99.00" width="2.00" height="1.00" fill="#000" />
<rect x="576.00" y="89.00" width="2.00" height="1.00" fill="#fff" />
<rect x="582.00" y="80.00" width="2.00" height="2.00" fill="#fff" />
<rect x="588.00" y="82.00" width="3.00" height="2.00" fill="#000" />
<rect x="592.00" y="81.00" width="2.00" height="1.00" fill="#fff" />
<rect x="600.00" y="81.00" width="2.00" height="3.00" fill="#000" />
<rect x="602.00" y="76.00" width="2.00" height="2.00" fill="#fff" />
<rect x="604.00" y="81.00" width="3.00" height="1.00" fill="#000" />
<rect x="606.00" y="76.00" width="2.00" height="1.00" fill="#fff" />
<rect x="610.00" y="81.00" width="3.00" height="2.00" fill="#000" />
<rect x="614.00" y="78.00" width="3.00" height="1.00" fill="#000" />
<rect x="616.00" y="80.00" width="2.00" height="2.00" fill="#000" />
<rect x="618.00" y="73.00" width="2.00" height="1.00" fill="#fff" />
<rect x="634.00" y="77.00" width="3.00" height="2.00" fill="#000" />
<rect x="640.00" y="81.00" width="3.00" height="3.00" fill="#000" />
<rect x="642.00" y="76.00" width="2.00" height="2.00" fill="#fff" />
<rect x="646.00" y="85.00" width="2.00" height="3.00" fill="#000" />
<rect x="648.00" y="79.00" width="2.00" height="1.00" fill="#fff" />
<rect x="650.00" y="84.00" width="2.00" height="3.00" fill="#000" />
<rect x="654.00" y="81.00" width="2.00" height="2.00" fill="#fff" />
<rect x="656.00" y="86.00" width="2.00" height="3.00" fill="#000" />
<rect x="660.00" y="81.00" width="2.00" height="1.00" fill="#fff" />
<rect x="672.00" y="82.00" width="2.00" height="1.00" fill="#fff" />
<rect x="674.00" y="83.00" width="2.00" height="2.00" fill="#fff" />
<rect x="682.00" y="86.00" width="2.00" height="2.00" fill="#fff" />
<rect x="684.00" y="84.00" width="2.00" height="2.00" fill="#fff" />
<rect x="686.00" y="84.00" width="2.00" height="1.00" fill="#fff" />
<rect x="688.00" y="86.00" width="2.00" height="2.00" fill="#fff" />
<rect x="690.00" y="92.00" width="2.00" height="3.00" fill="#000" />
<rect x="700.00" y="89.00" width="2.00" height="2.00" fill="#fff" />
<rect x="704.00" y="94.00" width="2.00" height="1.00" fill="#fff" />
<rect x="708.00" y="104.00" width="2.00" height="2.00" fill="#fff" />
<rect x="714.00" y="83.00" width="2.00" height="1.00" fill="#fff" />
<rect x="728.00" y="88.00" width="2.00" height="1.00" fill="#fff" />
<rect x="734.00" y="107.00" width="2.00" height="2.00" fill="#000" />
<rect x="736.00" y="106.00" width="3.00" height="1.00" fill="#000" />
<rect x="476.00" y="123.00" width="30.00" height="23.00" fill="#000" />
<rect x="480.50" y="123.00" width="2.00" height="21.00" fill="#fff" />
<rect x="486.00" y="123.00" width="3.50" height="21.00" fill="#fff" />
<rect x="490.50" y="123.00" width="2.50" height="21.00" fill="#fff" />
<rect x="498.00" y="123.00" width="3.50" height="21.00" fill="#fff" />
<rect x="503.00" y="123.00" width="3.00" height="21.00" fill="#fff" />
<rect x="521.00" y="123.00" width="4.00" height="23.00" fill="#000" />
<rect x="554.00" y="123.00" width="2.00" height="23.00" fill="#000" />
<rect x="505.00" y="145.00" width="30.00" height="1.00" fill="#000" />
<rect x="560.00" y="145.00" width="40.00" height="1.00" fill="#000" />
<line x1="431" y1="22.5" x2="437" y2="22.5" stroke="#000" stroke-width="1"/>
<text x="431.3" y="25.2" font-size="8.6" fill="#000" stroke="#000" stroke-width="0.15" text-anchor="end" >25</text>
<line x1="431" y1="48.5" x2="437" y2="48.5" stroke="#000" stroke-width="1"/>
<text x="431.3" y="50.6" font-size="8.6" fill="#000" stroke="#000" stroke-width="0.15" text-anchor="end" >20</text>
<line x1="431" y1="74.5" x2="437" y2="74.5" stroke="#000" stroke-width="1"/>
<text x="431.3" y="77.1" font-size="8.6" fill="#000" stroke="#000" stroke-width="0.15" text-anchor="end" >15</text>
<line x1="431" y1="101.5" x2="437" y2="101.5" stroke="#000" stroke-width="1"/>
<text x="431.3" y="104.0" font-size="8.6" fill="#000" stroke="#000" stroke-width="0.15" text-anchor="end" >10</text>
<line x1="431" y1="128.5" x2="437" y2="128.5" stroke="#000" stroke-width="1"/>
<text x="431.3" y="131.1" font-size="8.6" fill="#000" stroke="#000" stroke-width="0.15" text-anchor="end" >5</text>
<line x1="431" y1="154.5" x2="437" y2="154.5" stroke="#000" stroke-width="1"/>
<text x="431.3" y="152.5" font-size="8.6" fill="#000" stroke="#000" stroke-width="0.15" text-anchor="end" >0</text>
<line x1="437.5" y1="153" x2="437.5" y2="164" stroke="#000" stroke-width="1"/>
<line x1="462.5" y1="153" x2="462.5" y2="159" stroke="#000" stroke-width="1"/>
<line x1="487.5" y1="153" x2="487.5" y2="164" stroke="#000" stroke-width="1"/>
<line x1="512.5" y1="153" x2="512.5" y2="159" stroke="#000" stroke-width="1"/>
<line x1="537.5" y1="153" x2="537.5" y2="164" stroke="#000" stroke-width="1"/>
<line x1="562.5" y1="153" x2="562.5" y2="159" stroke="#000" stroke-width="1"/>
<line x1="588.5" y1="153" x2="588.5" y2="164" stroke="#000" stroke-width="1"/>
<line x1="613.5" y1="153" x2="613.5" y2="159" stroke="#000" stroke-width="1"/>
<line x1="638.5" y1="153" x2="638.5" y2="164" stroke="#000" stroke-width="1"/>
<line x1="663.5" y1="153" x2="663.5" y2="159" stroke="#000" stroke-width="1"/>
<line x1="688.5" y1="153" x2="688.5" y2="164" stroke="#000" stroke-width="1"/>
<line x1="713.5" y1="153" x2="713.5" y2="159" stroke="#000" stroke-width="1"/>
<line x1="738.5" y1="153" x2="738.5" y2="164" stroke="#000" stroke-width="1"/>
<text x="432.5" y="173.6" font-size="8.6" fill="#000" stroke="#000" stroke-width="0.15" text-anchor="start" textLength="21.8" lengthAdjust="spacingAndGlyphs" >16:51</text>
<text x="482.8" y="173.6" font-size="8.6" fill="#000" stroke="#000" stroke-width="0.15" text-anchor="start" textLength="21.8" lengthAdjust="spacingAndGlyphs" >17:11</text>
<text x="533.2" y="173.6" font-size="8.6" fill="#000" stroke="#000" stroke-width="0.15" text-anchor="start" textLength="21.8" lengthAdjust="spacingAndGlyphs" >17:31</text>
<text x="583.5" y="173.6" font-size="8.6" fill="#000" stroke="#000" stroke-width="0.15" text-anchor="start" textLength="21.8" lengthAdjust="spacingAndGlyphs" >17:51</text>
<text x="633.8" y="173.6" font-size="8.6" fill="#000" stroke="#000" stroke-width="0.15" text-anchor="start" textLength="21.8" lengthAdjust="spacingAndGlyphs" >18:11</text>
<text x="684.2" y="173.6" font-size="8.6" fill="#000" stroke="#000" stroke-width="0.15" text-anchor="start" textLength="21.8" lengthAdjust="spacingAndGlyphs" >18:31</text>
<text x="734.5" y="173.6" font-size="8.6" fill="#000" stroke="#000" stroke-width="0.15" text-anchor="start" textLength="21.8" lengthAdjust="spacingAndGlyphs" >18:51</text>
<text x="402.3" y="196.0" font-size="9.6" fill="#000" stroke="#000" stroke-width="0.15" text-anchor="start" textLength="80" lengthAdjust="spacingAndGlyphs" >Alt (1000ft MSL)</text>
<text x="773.5" y="196.0" font-size="9.6" fill="#000" stroke="#000" stroke-width="0.15" text-anchor="end" textLength="54.8" lengthAdjust="spacingAndGlyphs" >LWC(g/m3)</text>
<rect x="437.00" y="198.00" width="302.00" height="133.00" fill="#000" />
<defs><linearGradient id="lw0" x1="0" y1="0" x2="0" y2="1"><stop offset="0" stop-color="#060000" stop-opacity="0"/><stop offset="0.15" stop-color="#0c0000"/><stop offset="0.7" stop-color="#0c0000"/><stop offset="1" stop-color="#090000"/></linearGradient><linearGradient id="lw1" x1="0" y1="0" x2="0" y2="1"><stop offset="0" stop-color="#0a0000" stop-opacity="0"/><stop offset="0.15" stop-color="#140000"/><stop offset="0.7" stop-color="#150000"/><stop offset="1" stop-color="#100000"/></linearGradient><linearGradient id="lw2" x1="0" y1="0" x2="0" y2="1"><stop offset="0" stop-color="#0e0000" stop-opacity="0"/><stop offset="0.15" stop-color="#1c0000"/><stop offset="0.7" stop-color="#1d0000"/><stop offset="1" stop-color="#160000"/></linearGradient><linearGradient id="lw3" x1="0" y1="0" x2="0" y2="1"><stop offset="0" stop-color="#120000" stop-opacity="0"/><stop offset="0.15" stop-color="#240000"/><stop offset="0.7" stop-color="#250000"/><stop offset="1" stop-color="#1c0000"/></linearGradient><linearGradient id="lw4" x1="0" y1="0" x2="0" y2="1"><stop offset="0" stop-color="#160000" stop-opacity="0"/><stop offset="0.15" stop-color="#2c0000"/><stop offset="0.7" stop-color="#2e0000"/><stop offset="1" stop-color="#230000"/></linearGradient><linearGradient id="lw5" x1="0" y1="0" x2="0" y2="1"><stop offset="0" stop-color="#1a0000" stop-opacity="0"/><stop offset="0.15" stop-color="#340000"/><stop offset="0.7" stop-color="#360000"/><stop offset="1" stop-color="#290000"/></linearGradient><linearGradient id="lw6" x1="0" y1="0" x2="0" y2="1"><stop offset="0" stop-color="#1e0000" stop-opacity="0"/><stop offset="0.15" stop-color="#3c0000"/><stop offset="0.7" stop-color="#3f0000"/><stop offset="1" stop-color="#300000"/></linearGradient><linearGradient id="lw7" x1="0" y1="0" x2="0" y2="1"><stop offset="0" stop-color="#220000" stop-opacity="0"/><stop offset="0.15" stop-color="#440000"/><stop offset="0.7" stop-color="#470000"/><stop offset="1" stop-color="#360000"/></linearGradient><radialGradient id="lwg"><stop offset="0" stop-color="#b00000"/><stop offset="0.5" stop-color="#800000" stop-opacity="0.6"/><stop offset="1" stop-color="#500000" stop-opacity="0"/></radialGradient></defs>
<rect x="437.00" y="262.01" width="2.00" height="61.99" fill="url(#lw2)" />
<rect x="439.00" y="263.91" width="2.00" height="36.09" fill="url(#lw1)" />
<rect x="441.00" y="260.90" width="2.00" height="39.10" fill="url(#lw0)" />
<rect x="443.00" y="261.33" width="2.00" height="38.67" fill="url(#lw2)" />
<rect x="445.00" y="264.07" width="2.00" height="59.93" fill="url(#lw0)" />
<rect x="447.00" y="263.14" width="2.00" height="36.86" fill="url(#lw1)" />
<rect x="449.00" y="288.13" width="2.00" height="35.87" fill="url(#lw1)" />
<rect x="451.00" y="288.39" width="2.00" height="35.61" fill="url(#lw0)" />
<rect x="453.00" y="292.44" width="2.00" height="31.56" fill="url(#lw1)" />
<rect x="455.00" y="288.21" width="2.00" height="35.79" fill="url(#lw0)" />
<rect x="457.00" y="288.56" width="2.00" height="35.44" fill="url(#lw0)" />
<rect x="459.00" y="291.02" width="2.00" height="32.98" fill="url(#lw2)" />
<rect x="461.00" y="288.27" width="2.00" height="35.73" fill="url(#lw0)" />
<rect x="463.00" y="288.83" width="2.00" height="35.17" fill="url(#lw1)" />
<rect x="465.00" y="270.42" width="2.00" height="53.58" fill="url(#lw3)" />
<rect x="467.00" y="275.01" width="2.00" height="48.99" fill="url(#lw0)" />
<rect x="469.00" y="272.51" width="2.00" height="51.49" fill="url(#lw5)" />
<rect x="471.00" y="271.40" width="2.00" height="52.60" fill="url(#lw3)" />
<rect x="473.00" y="271.24" width="2.00" height="52.76" fill="url(#lw5)" />
<rect x="475.00" y="273.37" width="2.00" height="50.63" fill="url(#lw4)" />
<rect x="477.00" y="270.41" width="2.00" height="53.59" fill="url(#lw5)" />
<rect x="479.00" y="275.47" width="2.00" height="48.53" fill="url(#lw5)" />
<rect x="481.00" y="270.20" width="2.00" height="53.80" fill="url(#lw0)" />
<rect x="483.00" y="272.55" width="2.00" height="51.45" fill="url(#lw5)" />
<rect x="485.00" y="270.41" width="2.00" height="53.59" fill="url(#lw1)" />
<rect x="487.00" y="272.96" width="2.00" height="51.04" fill="url(#lw1)" />
<rect x="489.00" y="271.91" width="2.00" height="52.09" fill="url(#lw1)" />
<rect x="491.00" y="266.82" width="2.00" height="57.18" fill="url(#lw1)" />
<rect x="493.00" y="267.92" width="2.00" height="56.08" fill="url(#lw4)" />
<rect x="495.00" y="267.42" width="2.00" height="56.58" fill="url(#lw0)" />
<rect x="497.00" y="267.42" width="2.00" height="56.58" fill="url(#lw4)" />
<rect x="499.00" y="271.31" width="2.00" height="52.69" fill="url(#lw4)" />
<rect x="501.00" y="268.20" width="2.00" height="55.80" fill="url(#lw4)" />
<rect x="503.00" y="271.54" width="2.00" height="52.46" fill="url(#lw4)" />
<rect x="505.00" y="265.22" width="2.00" height="58.78" fill="url(#lw0)" />
<rect x="507.00" y="264.35" width="2.00" height="59.65" fill="url(#lw4)" />
<rect x="509.00" y="260.74" width="2.00" height="63.26" fill="url(#lw3)" />
<rect x="511.00" y="263.49" width="2.00" height="60.51" fill="url(#lw1)" />
<rect x="513.00" y="263.13" width="2.00" height="60.87" fill="url(#lw1)" />
<rect x="515.00" y="262.65" width="2.00" height="61.35" fill="url(#lw3)" />
<rect x="517.00" y="261.57" width="2.00" height="62.43" fill="url(#lw3)" />
<rect x="519.00" y="263.92" width="2.00" height="60.08" fill="url(#lw0)" />
<rect x="521.00" y="265.53" width="2.00" height="58.47" fill="url(#lw0)" />
<rect x="523.00" y="265.60" width="2.00" height="58.40" fill="url(#lw4)" />
<rect x="525.00" y="257.12" width="2.00" height="66.88" fill="url(#lw4)" />
<rect x="527.00" y="259.83" width="2.00" height="64.17" fill="url(#lw5)" />
<rect x="529.00" y="258.90" width="2.00" height="65.10" fill="url(#lw1)" />
<rect x="531.00" y="259.59" width="2.00" height="64.41" fill="url(#lw5)" />
<rect x="533.00" y="261.98" width="2.00" height="62.02" fill="url(#lw2)" />
<rect x="535.00" y="256.23" width="2.00" height="67.77" fill="url(#lw3)" />
<rect x="537.00" y="258.81" width="2.00" height="65.19" fill="url(#lw1)" />
<rect x="539.00" y="258.63" width="2.00" height="65.37" fill="url(#lw4)" />
<rect x="541.00" y="259.26" width="2.00" height="64.74" fill="url(#lw4)" />
<rect x="543.00" y="256.27" width="2.00" height="67.73" fill="url(#lw2)" />
<rect x="545.00" y="257.94" width="2.00" height="66.06" fill="url(#lw3)" />
<rect x="547.00" y="253.15" width="2.00" height="70.85" fill="url(#lw6)" />
<rect x="549.00" y="258.77" width="2.00" height="65.23" fill="url(#lw4)" />
<rect x="551.00" y="253.38" width="2.00" height="70.62" fill="url(#lw4)" />
<rect x="553.00" y="255.05" width="2.00" height="68.95" fill="url(#lw2)" />
<rect x="555.00" y="258.83" width="2.00" height="65.17" fill="url(#lw2)" />
<rect x="557.00" y="258.09" width="2.00" height="65.91" fill="url(#lw3)" />
<rect x="559.00" y="257.13" width="2.00" height="66.87" fill="url(#lw4)" />
<rect x="561.00" y="257.46" width="2.00" height="66.54" fill="url(#lw3)" />
<rect x="563.00" y="253.86" width="2.00" height="70.14" fill="url(#lw2)" />
<rect x="565.00" y="256.67" width="2.00" height="67.33" fill="url(#lw4)" />
<rect x="567.00" y="256.52" width="2.00" height="67.48" fill="url(#lw4)" />
<rect x="569.00" y="258.70" width="2.00" height="65.30" fill="url(#lw3)" />
<rect x="571.00" y="257.07" width="2.00" height="66.93" fill="url(#lw4)" />
<rect x="573.00" y="258.35" width="2.00" height="65.65" fill="url(#lw5)" />
<rect x="575.00" y="255.81" width="2.00" height="68.19" fill="url(#lw5)" />
<rect x="577.00" y="258.52" width="2.00" height="65.48" fill="url(#lw4)" />
<rect x="579.00" y="258.60" width="2.00" height="65.40" fill="url(#lw5)" />
<rect x="581.00" y="256.33" width="2.00" height="67.67" fill="url(#lw3)" />
<rect x="583.00" y="257.21" width="2.00" height="66.79" fill="url(#lw3)" />
<rect x="585.00" y="256.83" width="2.00" height="67.17" fill="url(#lw3)" />
<rect x="587.00" y="253.02" width="2.00" height="70.98" fill="url(#lw5)" />
<rect x="589.00" y="253.67" width="2.00" height="70.33" fill="url(#lw4)" />
<rect x="591.00" y="257.80" width="2.00" height="66.20" fill="url(#lw6)" />
<rect x="593.00" y="257.11" width="2.00" height="66.89" fill="url(#lw6)" />
<rect x="595.00" y="255.41" width="2.00" height="68.59" fill="url(#lw6)" />
<rect x="597.00" y="258.08" width="2.00" height="65.92" fill="url(#lw5)" />
<rect x="599.00" y="253.34" width="2.00" height="70.66" fill="url(#lw5)" />
<rect x="601.00" y="256.84" width="2.00" height="67.16" fill="url(#lw4)" />
<rect x="603.00" y="253.86" width="2.00" height="70.14" fill="url(#lw3)" />
<rect x="605.00" y="256.23" width="2.00" height="67.77" fill="url(#lw3)" />
<rect x="607.00" y="254.68" width="2.00" height="69.32" fill="url(#lw3)" />
<rect x="609.00" y="256.50" width="2.00" height="67.50" fill="url(#lw3)" />
<rect x="611.00" y="253.25" width="2.00" height="70.75" fill="url(#lw5)" />
<rect x="613.00" y="256.80" width="2.00" height="67.20" fill="url(#lw4)" />
<rect x="615.00" y="255.12" width="2.00" height="68.88" fill="url(#lw3)" />
<rect x="617.00" y="253.43" width="2.00" height="70.57" fill="url(#lw3)" />
<rect x="619.00" y="253.91" width="2.00" height="70.09" fill="url(#lw7)" />
<rect x="621.00" y="256.99" width="2.00" height="67.01" fill="url(#lw4)" />
<rect x="623.00" y="258.56" width="2.00" height="65.44" fill="url(#lw5)" />
<rect x="625.00" y="257.14" width="2.00" height="66.86" fill="url(#lw6)" />
<rect x="627.00" y="254.79" width="2.00" height="69.21" fill="url(#lw5)" />
<rect x="629.00" y="253.77" width="2.00" height="70.23" fill="url(#lw6)" />
<rect x="631.00" y="257.38" width="2.00" height="66.62" fill="url(#lw4)" />
<rect x="633.00" y="254.79" width="2.00" height="69.21" fill="url(#lw4)" />
<rect x="635.00" y="253.71" width="2.00" height="70.29" fill="url(#lw7)" />
<rect x="637.00" y="257.29" width="2.00" height="66.71" fill="url(#lw5)" />
<rect x="639.00" y="257.85" width="2.00" height="66.15" fill="url(#lw3)" />
<rect x="641.00" y="269.95" width="2.00" height="54.05" fill="url(#lw3)" />
<rect x="643.00" y="269.86" width="2.00" height="54.14" fill="url(#lw1)" />
<rect x="645.00" y="268.40" width="2.00" height="55.60" fill="url(#lw2)" />
<rect x="647.00" y="271.19" width="2.00" height="52.81" fill="url(#lw3)" />
<rect x="649.00" y="266.96" width="2.00" height="57.04" fill="url(#lw3)" />
<rect x="651.00" y="259.73" width="2.00" height="64.27" fill="url(#lw4)" />
<rect x="653.00" y="259.53" width="2.00" height="64.47" fill="url(#lw5)" />
<rect x="655.00" y="262.65" width="2.00" height="61.35" fill="url(#lw6)" />
<rect x="657.00" y="262.25" width="2.00" height="61.75" fill="url(#lw4)" />
<rect x="659.00" y="262.49" width="2.00" height="61.51" fill="url(#lw6)" />
<rect x="661.00" y="260.62" width="2.00" height="63.38" fill="url(#lw6)" />
<rect x="663.00" y="260.37" width="2.00" height="63.63" fill="url(#lw5)" />
<rect x="665.00" y="258.02" width="2.00" height="65.98" fill="url(#lw6)" />
<rect x="667.00" y="260.96" width="2.00" height="63.04" fill="url(#lw4)" />
<rect x="669.00" y="259.35" width="2.00" height="64.65" fill="url(#lw7)" />
<rect x="671.00" y="258.23" width="2.00" height="65.77" fill="url(#lw6)" />
<rect x="673.00" y="261.00" width="2.00" height="63.00" fill="url(#lw7)" />
<rect x="675.00" y="259.39" width="2.00" height="64.61" fill="url(#lw7)" />
<rect x="677.00" y="258.71" width="2.00" height="65.29" fill="url(#lw6)" />
<rect x="679.00" y="260.59" width="2.00" height="63.41" fill="url(#lw3)" />
<rect x="681.00" y="262.15" width="2.00" height="61.85" fill="url(#lw5)" />
<rect x="683.00" y="259.60" width="2.00" height="64.40" fill="url(#lw3)" />
<rect x="685.00" y="258.62" width="2.00" height="65.38" fill="url(#lw6)" />
<rect x="687.00" y="258.33" width="2.00" height="65.67" fill="url(#lw4)" />
<rect x="689.00" y="261.20" width="2.00" height="62.80" fill="url(#lw3)" />
<rect x="691.00" y="259.82" width="2.00" height="64.18" fill="url(#lw6)" />
<rect x="693.00" y="258.34" width="2.00" height="65.66" fill="url(#lw5)" />
<rect x="695.00" y="259.31" width="2.00" height="64.69" fill="url(#lw3)" />
<rect x="697.00" y="258.40" width="2.00" height="65.60" fill="url(#lw7)" />
<rect x="699.00" y="262.23" width="2.00" height="61.77" fill="url(#lw3)" />
<rect x="701.00" y="264.54" width="2.00" height="59.46" fill="url(#lw0)" />
<rect x="703.00" y="261.73" width="2.00" height="62.27" fill="url(#lw2)" />
<rect x="705.00" y="262.19" width="2.00" height="61.81" fill="url(#lw4)" />
<rect x="707.00" y="262.39" width="2.00" height="61.61" fill="url(#lw1)" />
<rect x="709.00" y="265.75" width="2.00" height="58.25" fill="url(#lw1)" />
<rect x="711.00" y="265.16" width="2.00" height="58.84" fill="url(#lw0)" />
<rect x="713.00" y="263.19" width="2.00" height="60.81" fill="url(#lw3)" />
<rect x="715.00" y="265.52" width="2.00" height="58.48" fill="url(#lw0)" />
<rect x="717.00" y="265.50" width="2.00" height="58.50" fill="url(#lw3)" />
<rect x="719.00" y="262.58" width="2.00" height="61.42" fill="url(#lw0)" />
<rect x="721.00" y="262.50" width="2.00" height="61.50" fill="url(#lw1)" />
<rect x="723.00" y="264.85" width="2.00" height="59.15" fill="url(#lw2)" />
<rect x="725.00" y="263.00" width="2.00" height="61.00" fill="url(#lw3)" />
<rect x="727.00" y="263.52" width="2.00" height="60.48" fill="url(#lw3)" />
<rect x="729.00" y="260.07" width="2.00" height="63.93" fill="url(#lw1)" />
<rect x="731.00" y="261.09" width="2.00" height="62.91" fill="url(#lw0)" />
<rect x="733.00" y="263.69" width="2.00" height="60.31" fill="url(#lw4)" />
<rect x="735.00" y="265.81" width="2.00" height="58.19" fill="url(#lw0)" />
<rect x="737.00" y="263.51" width="2.00" height="60.49" fill="url(#lw3)" />
<ellipse cx="595" cy="320" rx="11" ry="5" fill="url(#lwg)" opacity="0.45"/>
<ellipse cx="625" cy="320" rx="5" ry="5" fill="url(#lwg)" opacity="0.6"/>
<ellipse cx="660" cy="320" rx="10" ry="5" fill="url(#lwg)" opacity="0.55"/>
<ellipse cx="688" cy="320" rx="13" ry="6" fill="url(#lwg)" opacity="0.7"/>
<ellipse cx="682" cy="290" rx="3" ry="25" fill="url(#lwg)" opacity="0.3"/>
<ellipse cx="631" cy="280" rx="2" ry="20" fill="url(#lwg)" opacity="0.35"/>
<line x1="431" y1="200.5" x2="437" y2="200.5" stroke="#000" stroke-width="1"/>
<text x="431.3" y="203.2" font-size="8.6" fill="#000" stroke="#000" stroke-width="0.15" text-anchor="end" >25</text>
<line x1="431" y1="226.5" x2="437" y2="226.5" stroke="#000" stroke-width="1"/>
<text x="431.3" y="228.6" font-size="8.6" fill="#000" stroke="#000" stroke-width="0.15" text-anchor="end" >20</text>
<line x1="431" y1="252.5" x2="437" y2="252.5" stroke="#000" stroke-width="1"/>
<text x="431.3" y="255.1" font-size="8.6" fill="#000" stroke="#000" stroke-width="0.15" text-anchor="end" >15</text>
<line x1="431" y1="279.5" x2="437" y2="279.5" stroke="#000" stroke-width="1"/>
<text x="431.3" y="282.0" font-size="8.6" fill="#000" stroke="#000" stroke-width="0.15" text-anchor="end" >10</text>
<line x1="431" y1="306.5" x2="437" y2="306.5" stroke="#000" stroke-width="1"/>
<text x="431.3" y="309.1" font-size="8.6" fill="#000" stroke="#000" stroke-width="0.15" text-anchor="end" >5</text>
<line x1="431" y1="332.5" x2="437" y2="332.5" stroke="#000" stroke-width="1"/>
<text x="431.3" y="330.5" font-size="8.6" fill="#000" stroke="#000" stroke-width="0.15" text-anchor="end" >0</text>
<line x1="437.5" y1="331" x2="437.5" y2="342" stroke="#000" stroke-width="1"/>
<line x1="462.5" y1="331" x2="462.5" y2="337" stroke="#000" stroke-width="1"/>
<line x1="487.5" y1="331" x2="487.5" y2="342" stroke="#000" stroke-width="1"/>
<line x1="512.5" y1="331" x2="512.5" y2="337" stroke="#000" stroke-width="1"/>
<line x1="537.5" y1="331" x2="537.5" y2="342" stroke="#000" stroke-width="1"/>
<line x1="562.5" y1="331" x2="562.5" y2="337" stroke="#000" stroke-width="1"/>
<line x1="588.5" y1="331" x2="588.5" y2="342" stroke="#000" stroke-width="1"/>
<line x1="613.5" y1="331" x2="613.5" y2="337" stroke="#000" stroke-width="1"/>
<line x1="638.5" y1="331" x2="638.5" y2="342" stroke="#000" stroke-width="1"/>
<line x1="663.5" y1="331" x2="663.5" y2="337" stroke="#000" stroke-width="1"/>
<line x1="688.5" y1="331" x2="688.5" y2="342" stroke="#000" stroke-width="1"/>
<line x1="713.5" y1="331" x2="713.5" y2="337" stroke="#000" stroke-width="1"/>
<line x1="738.5" y1="331" x2="738.5" y2="342" stroke="#000" stroke-width="1"/>
<text x="432.5" y="351.6" font-size="8.6" fill="#000" stroke="#000" stroke-width="0.15" text-anchor="start" textLength="21.8" lengthAdjust="spacingAndGlyphs" >16:51</text>
<text x="482.8" y="351.6" font-size="8.6" fill="#000" stroke="#000" stroke-width="0.15" text-anchor="start" textLength="21.8" lengthAdjust="spacingAndGlyphs" >17:11</text>
<text x="533.2" y="351.6" font-size="8.6" fill="#000" stroke="#000" stroke-width="0.15" text-anchor="start" textLength="21.8" lengthAdjust="spacingAndGlyphs" >17:31</text>
<text x="583.5" y="351.6" font-size="8.6" fill="#000" stroke="#000" stroke-width="0.15" text-anchor="start" textLength="21.8" lengthAdjust="spacingAndGlyphs" >17:51</text>
<text x="633.8" y="351.6" font-size="8.6" fill="#000" stroke="#000" stroke-width="0.15" text-anchor="start" textLength="21.8" lengthAdjust="spacingAndGlyphs" >18:11</text>
<text x="684.2" y="351.6" font-size="8.6" fill="#000" stroke="#000" stroke-width="0.15" text-anchor="start" textLength="21.8" lengthAdjust="spacingAndGlyphs" >18:31</text>
<text x="734.5" y="351.6" font-size="8.6" fill="#000" stroke="#000" stroke-width="0.15" text-anchor="start" textLength="21.8" lengthAdjust="spacingAndGlyphs" >18:51</text>
<defs><linearGradient id="lwcg" x1="0" y1="1" x2="0" y2="0"><stop offset="0" stop-color="#000"/><stop offset="1" stop-color="#ff0000"/></linearGradient></defs>
<rect x="742.00" y="198.00" width="6.00" height="137.00" fill="url(#lwcg)" />
<line x1="749" y1="200.5" x2="756" y2="200.5" stroke="#000" stroke-width="1"/>
<text x="756" y="203.0" font-size="8.6" fill="#000" stroke="#000" stroke-width="0.15" text-anchor="start" >0.2</text>
<line x1="749" y1="266.5" x2="756" y2="266.5" stroke="#000" stroke-width="1"/>
<text x="756" y="269.4" font-size="8.6" fill="#000" stroke="#000" stroke-width="0.15" text-anchor="start" >0.1</text>
<line x1="749" y1="332.5" x2="756" y2="332.5" stroke="#000" stroke-width="1"/>
<text x="756" y="331.5" font-size="8.6" fill="#000" stroke="#000" stroke-width="0.15" text-anchor="start" >0.0</text>
<text x="402.3" y="373.9" font-size="9.6" fill="#000" stroke="#000" stroke-width="0.15" text-anchor="start" textLength="80" lengthAdjust="spacingAndGlyphs" >Alt (1000ft MSL)</text>
<text x="773.5" y="373.9" font-size="9.6" fill="#000" stroke="#000" stroke-width="0.15" text-anchor="end" textLength="41.6" lengthAdjust="spacingAndGlyphs" >Temp(K)</text>
<rect x="437.00" y="376.00" width="302.00" height="132.50" fill="#000" />
<defs><linearGradient id="tg" x1="0" y1="0" x2="0" y2="1"><stop offset="0" stop-color="#0020f0"/><stop offset="0.10" stop-color="#003cff"/><stop offset="0.23" stop-color="#0082ff"/><stop offset="0.36" stop-color="#00dcff"/><stop offset="0.46" stop-color="#28ffc8"/><stop offset="0.52" stop-color="#78ff82"/><stop offset="0.61" stop-color="#c8ff32"/><stop offset="0.70" stop-color="#fff000"/><stop offset="0.79" stop-color="#ffbe00"/><stop offset="0.85" stop-color="#ff8200"/><stop offset="0.91" stop-color="#ff5000"/><stop offset="1" stop-color="#ff1e00"/></linearGradient></defs>
<rect x="437.00" y="377.00" width="302.00" height="127.70" fill="url(#tg)" />
<rect x="437.00" y="376.00" width="302.00" height="1.40" fill="#000" />
<defs><linearGradient id="tsw" x1="0" y1="0" x2="0" y2="1"><stop offset="0" stop-color="#fff" stop-opacity="0.12"/><stop offset="0.7" stop-color="#fff" stop-opacity="0.06"/><stop offset="1" stop-color="#fff" stop-opacity="0"/></linearGradient><linearGradient id="tsd" x1="0" y1="0" x2="0" y2="1"><stop offset="0" stop-color="#000060" stop-opacity="0.1"/><stop offset="0.7" stop-color="#603000" stop-opacity="0.05"/><stop offset="1" stop-color="#000" stop-opacity="0"/></linearGradient></defs>
<rect x="437.00" y="378.00" width="2.00" height="100.00" fill="url(#tsd)" opacity="0.88"/>
<rect x="447.00" y="378.00" width="2.00" height="100.00" fill="url(#tsw)" opacity="0.60"/>
<rect x="449.00" y="378.00" width="1.00" height="100.00" fill="url(#tsw)" opacity="0.78"/>
<rect x="451.00" y="378.00" width="2.00" height="100.00" fill="url(#tsw)" opacity="0.85"/>
<rect x="455.00" y="378.00" width="2.00" height="100.00" fill="url(#tsw)" opacity="0.75"/>
<rect x="457.00" y="378.00" width="1.00" height="100.00" fill="url(#tsd)" opacity="0.70"/>
<rect x="465.00" y="378.00" width="3.00" height="100.00" fill="url(#tsw)" opacity="0.78"/>
<rect x="467.00" y="378.00" width="3.00" height="100.00" fill="url(#tsw)" opacity="0.74"/>
<rect x="469.00" y="378.00" width="1.00" height="100.00" fill="url(#tsw)" opacity="0.87"/>
<rect x="475.00" y="378.00" width="1.00" height="100.00" fill="url(#tsw)" opacity="0.93"/>
<rect x="483.00" y="378.00" width="1.00" height="100.00" fill="url(#tsd)" opacity="0.67"/>
<rect x="485.00" y="378.00" width="3.00" height="100.00" fill="url(#tsw)" opacity="0.75"/>
<rect x="491.00" y="378.00" width="2.00" height="100.00" fill="url(#tsd)" opacity="0.52"/>
<rect x="493.00" y="378.00" width="2.00" height="100.00" fill="url(#tsw)" opacity="0.72"/>
<rect x="509.00" y="378.00" width="2.00" height="100.00" fill="url(#tsd)" opacity="0.87"/>
<rect x="521.00" y="378.00" width="2.00" height="100.00" fill="url(#tsd)" opacity="0.94"/>
<rect x="523.00" y="378.00" width="1.00" height="100.00" fill="url(#tsw)" opacity="0.65"/>
<rect x="527.00" y="378.00" width="2.00" height="100.00" fill="url(#tsd)" opacity="0.72"/>
<rect x="531.00" y="378.00" width="1.00" height="100.00" fill="url(#tsw)" opacity="0.77"/>
<rect x="533.00" y="378.00" width="2.00" height="100.00" fill="url(#tsd)" opacity="0.78"/>
<rect x="537.00" y="378.00" width="2.00" height="100.00" fill="url(#tsd)" opacity="0.88"/>
<rect x="539.00" y="378.00" width="3.00" height="100.00" fill="url(#tsw)" opacity="0.69"/>
<rect x="541.00" y="378.00" width="2.00" height="100.00" fill="url(#tsd)" opacity="1.00"/>
<rect x="543.00" y="378.00" width="2.00" height="100.00" fill="url(#tsw)" opacity="0.53"/>
<rect x="547.00" y="378.00" width="2.00" height="100.00" fill="url(#tsd)" opacity="0.53"/>
<rect x="549.00" y="378.00" width="2.00" height="100.00" fill="url(#tsd)" opacity="0.87"/>
<rect x="553.00" y="378.00" width="3.00" height="100.00" fill="url(#tsw)" opacity="0.84"/>
<rect x="557.00" y="378.00" width="1.00" height="100.00" fill="url(#tsw)" opacity="0.57"/>
<rect x="559.00" y="378.00" width="2.00" height="100.00" fill="url(#tsd)" opacity="0.90"/>
<rect x="563.00" y="378.00" width="3.00" height="100.00" fill="url(#tsw)" opacity="0.67"/>
<rect x="565.00" y="378.00" width="2.00" height="100.00" fill="url(#tsd)" opacity="0.58"/>
<rect x="569.00" y="378.00" width="2.00" height="100.00" fill="url(#tsd)" opacity="0.64"/>
<rect x="571.00" y="378.00" width="2.00" height="100.00" fill="url(#tsd)" opacity="0.84"/>
<rect x="573.00" y="378.00" width="1.00" height="100.00" fill="url(#tsw)" opacity="0.73"/>
<rect x="577.00" y="378.00" width="1.00" height="100.00" fill="url(#tsd)" opacity="0.98"/>
<rect x="581.00" y="378.00" width="1.00" height="100.00" fill="url(#tsd)" opacity="0.50"/>
<rect x="585.00" y="378.00" width="2.00" height="100.00" fill="url(#tsw)" opacity="0.91"/>
<rect x="589.00" y="378.00" width="2.00" height="100.00" fill="url(#tsw)" opacity="0.79"/>
<rect x="599.00" y="378.00" width="1.00" height="100.00" fill="url(#tsd)" opacity="0.60"/>
<rect x="601.00" y="378.00" width="1.00" height="100.00" fill="url(#tsw)" opacity="0.82"/>
<rect x="603.00" y="378.00" width="1.00" height="100.00" fill="url(#tsw)" opacity="0.63"/>
<rect x="609.00" y="378.00" width="2.00" height="100.00" fill="url(#tsw)" opacity="0.93"/>
<rect x="611.00" y="378.00" width="3.00" height="100.00" fill="url(#tsw)" opacity="0.68"/>
<rect x="615.00" y="378.00" width="1.00" height="100.00" fill="url(#tsd)" opacity="0.92"/>
<rect x="619.00" y="378.00" width="3.00" height="100.00" fill="url(#tsw)" opacity="0.64"/>
<rect x="633.00" y="378.00" width="2.00" height="100.00" fill="url(#tsd)" opacity="0.94"/>
<rect x="635.00" y="378.00" width="1.00" height="100.00" fill="url(#tsw)" opacity="0.96"/>
<rect x="639.00" y="378.00" width="2.00" height="100.00" fill="url(#tsw)" opacity="0.80"/>
<rect x="643.00" y="378.00" width="2.00" height="100.00" fill="url(#tsd)" opacity="0.94"/>
<rect x="645.00" y="378.00" width="2.00" height="100.00" fill="url(#tsw)" opacity="0.53"/>
<rect x="651.00" y="378.00" width="1.00" height="100.00" fill="url(#tsd)" opacity="0.88"/>
<rect x="655.00" y="378.00" width="1.00" height="100.00" fill="url(#tsd)" opacity="0.55"/>
<rect x="657.00" y="378.00" width="2.00" height="100.00" fill="url(#tsw)" opacity="0.88"/>
<rect x="665.00" y="378.00" width="2.00" height="100.00" fill="url(#tsd)" opacity="0.51"/>
<rect x="669.00" y="378.00" width="2.00" height="100.00" fill="url(#tsw)" opacity="0.52"/>
<rect x="671.00" y="378.00" width="3.00" height="100.00" fill="url(#tsw)" opacity="0.66"/>
<rect x="675.00" y="378.00" width="3.00" height="100.00" fill="url(#tsw)" opacity="0.51"/>
<rect x="677.00" y="378.00" width="1.00" height="100.00" fill="url(#tsw)" opacity="0.62"/>
<rect x="679.00" y="378.00" width="2.00" height="100.00" fill="url(#tsw)" opacity="0.51"/>
<rect x="685.00" y="378.00" width="1.00" height="100.00" fill="url(#tsw)" opacity="0.56"/>
<rect x="687.00" y="378.00" width="2.00" height="100.00" fill="url(#tsd)" opacity="0.84"/>
<rect x="689.00" y="378.00" width="3.00" height="100.00" fill="url(#tsw)" opacity="0.94"/>
<rect x="691.00" y="378.00" width="2.00" height="100.00" fill="url(#tsd)" opacity="0.85"/>
<rect x="707.00" y="378.00" width="1.00" height="100.00" fill="url(#tsd)" opacity="0.64"/>
<rect x="709.00" y="378.00" width="2.00" height="100.00" fill="url(#tsw)" opacity="0.52"/>
<rect x="711.00" y="378.00" width="2.00" height="100.00" fill="url(#tsd)" opacity="0.64"/>
<rect x="713.00" y="378.00" width="3.00" height="100.00" fill="url(#tsw)" opacity="0.84"/>
<rect x="725.00" y="378.00" width="1.00" height="100.00" fill="url(#tsd)" opacity="0.54"/>
<rect x="727.00" y="378.00" width="2.00" height="100.00" fill="url(#tsw)" opacity="0.77"/>
<rect x="733.00" y="378.00" width="2.00" height="100.00" fill="url(#tsd)" opacity="1.00"/>
<rect x="735.00" y="378.00" width="1.00" height="100.00" fill="url(#tsw)" opacity="0.51"/>
<rect x="737.00" y="378.00" width="2.00" height="100.00" fill="url(#tsw)" opacity="0.86"/>
<defs><linearGradient id="sc" x1="0" y1="0" x2="0" y2="1"><stop offset="0" stop-color="#40e0ff" stop-opacity="0.3"/><stop offset="0.08" stop-color="#d0ff40"/><stop offset="0.15" stop-color="#ff7000"/><stop offset="0.25" stop-color="#c04000"/><stop offset="0.32" stop-color="#ffd000"/><stop offset="0.45" stop-color="#80ff80"/><stop offset="0.55" stop-color="#00c0ff"/><stop offset="0.70" stop-color="#0010a0"/><stop offset="0.8" stop-color="#00c0ff"/><stop offset="0.9" stop-color="#e0ff40"/><stop offset="1" stop-color="#ffd000"/></linearGradient><linearGradient id="sc2" x1="0" y1="0" x2="0" y2="1"><stop offset="0" stop-color="#ffff80" stop-opacity="0"/><stop offset="0.3" stop-color="#ffe060" stop-opacity="0.7"/><stop offset="1" stop-color="#ffe060" stop-opacity="0.9"/></linearGradient></defs>
<rect x="447.50" y="393.00" width="3.50" height="110.00" fill="url(#sc)" />
<rect x="503.00" y="432.00" width="3.50" height="70.00" fill="url(#sc2)" opacity="0.55"/>
<rect x="439.00" y="448.00" width="3.00" height="1.30" fill="#b03010" />
<rect x="444.00" y="453.00" width="3.00" height="1.30" fill="#b03010" />
<rect x="449.00" y="452.00" width="3.00" height="1.30" fill="#b03010" />
<rect x="454.00" y="447.00" width="3.00" height="1.30" fill="#b03010" />
<rect x="459.00" y="449.00" width="3.00" height="1.30" fill="#b03010" />
<rect x="464.00" y="448.00" width="3.00" height="1.30" fill="#b03010" />
<rect x="469.00" y="453.00" width="3.00" height="1.30" fill="#b03010" />
<rect x="474.00" y="450.00" width="3.00" height="1.30" fill="#b03010" />
<rect x="479.00" y="453.00" width="3.00" height="1.30" fill="#b03010" />
<rect x="484.00" y="450.00" width="3.00" height="1.30" fill="#b03010" />
<rect x="489.00" y="453.00" width="3.00" height="1.30" fill="#b03010" />
<rect x="494.00" y="451.00" width="3.00" height="1.30" fill="#b03010" />
<rect x="499.00" y="447.00" width="3.00" height="1.30" fill="#b03010" />
<rect x="504.00" y="447.00" width="3.00" height="1.30" fill="#b03010" />
<rect x="509.00" y="450.00" width="3.00" height="1.30" fill="#b03010" />
<rect x="514.00" y="450.00" width="3.00" height="1.30" fill="#b03010" />
<rect x="519.00" y="448.00" width="3.00" height="1.30" fill="#b03010" />
<rect x="524.00" y="450.00" width="3.00" height="1.30" fill="#b03010" />
<rect x="529.00" y="450.00" width="3.00" height="1.30" fill="#b03010" />
<rect x="534.00" y="451.00" width="3.00" height="1.30" fill="#b03010" />
<rect x="539.00" y="449.00" width="3.00" height="1.30" fill="#b03010" />
<rect x="544.00" y="448.00" width="3.00" height="1.30" fill="#b03010" />
<rect x="549.00" y="449.00" width="3.00" height="1.30" fill="#b03010" />
<rect x="554.00" y="450.00" width="3.00" height="1.30" fill="#b03010" />
<rect x="559.00" y="450.00" width="3.00" height="1.30" fill="#b03010" />
<rect x="564.00" y="450.00" width="3.00" height="1.30" fill="#b03010" />
<rect x="569.00" y="449.00" width="3.00" height="1.30" fill="#b03010" />
<rect x="574.00" y="447.00" width="3.00" height="1.30" fill="#b03010" />
<rect x="579.00" y="451.00" width="3.00" height="1.30" fill="#b03010" />
<rect x="584.00" y="447.00" width="3.00" height="1.30" fill="#b03010" />
<rect x="589.00" y="449.00" width="3.00" height="1.30" fill="#b03010" />
<rect x="594.00" y="450.00" width="3.00" height="1.30" fill="#b03010" />
<rect x="599.00" y="447.00" width="3.00" height="1.30" fill="#b03010" />
<rect x="604.00" y="449.00" width="3.00" height="1.30" fill="#b03010" />
<rect x="609.00" y="453.00" width="3.00" height="1.30" fill="#b03010" />
<rect x="614.00" y="451.00" width="3.00" height="1.30" fill="#b03010" />
<rect x="619.00" y="450.00" width="3.00" height="1.30" fill="#b03010" />
<rect x="624.00" y="449.00" width="3.00" height="1.30" fill="#b03010" />
<rect x="629.00" y="451.00" width="3.00" height="1.30" fill="#b03010" />
<rect x="634.00" y="448.00" width="3.00" height="1.30" fill="#b03010" />
<rect x="639.00" y="447.00" width="3.00" height="1.30" fill="#b03010" />
<rect x="644.00" y="447.00" width="3.00" height="1.30" fill="#b03010" />
<rect x="649.00" y="450.00" width="3.00" height="1.30" fill="#b03010" />
<rect x="654.00" y="452.00" width="3.00" height="1.30" fill="#b03010" />
<rect x="659.00" y="450.00" width="3.00" height="1.30" fill="#b03010" />
<rect x="664.00" y="452.00" width="3.00" height="1.30" fill="#b03010" />
<rect x="669.00" y="449.00" width="3.00" height="1.30" fill="#b03010" />
<rect x="674.00" y="452.00" width="3.00" height="1.30" fill="#b03010" />
<rect x="679.00" y="453.00" width="3.00" height="1.30" fill="#b03010" />
<rect x="684.00" y="447.00" width="3.00" height="1.30" fill="#b03010" />
<rect x="689.00" y="450.00" width="3.00" height="1.30" fill="#b03010" />
<rect x="694.00" y="450.00" width="3.00" height="1.30" fill="#b03010" />
<rect x="699.00" y="450.00" width="3.00" height="1.30" fill="#b03010" />
<rect x="704.00" y="450.00" width="3.00" height="1.30" fill="#b03010" />
<rect x="709.00" y="448.00" width="3.00" height="1.30" fill="#b03010" />
<rect x="714.00" y="448.00" width="3.00" height="1.30" fill="#b03010" />
<rect x="719.00" y="450.00" width="3.00" height="1.30" fill="#b03010" />
<rect x="724.00" y="449.00" width="3.00" height="1.30" fill="#b03010" />
<rect x="729.00" y="450.00" width="3.00" height="1.30" fill="#b03010" />
<rect x="734.00" y="452.00" width="3.00" height="1.30" fill="#b03010" />
<rect x="440.00" y="446.00" width="3.00" height="1.20" fill="#b03010" />
<rect x="438.00" y="439.00" width="3.00" height="1.20" fill="#b03010" />
<rect x="437.00" y="470.00" width="16.00" height="1.20" fill="#202040" />
<rect x="453.00" y="468.50" width="10.00" height="1.20" fill="#202040" />
<rect x="463.00" y="472.50" width="15.00" height="1.20" fill="#202040" />
<rect x="478.00" y="487.00" width="11.00" height="1.20" fill="#202040" />
<rect x="489.00" y="486.00" width="99.00" height="1.20" fill="#202040" />
<rect x="588.00" y="488.00" width="92.00" height="1.20" fill="#202040" />
<rect x="680.00" y="489.00" width="59.00" height="1.20" fill="#202040" />
<rect x="437.00" y="492.00" width="3.00" height="1.30" fill="#50c030" />
<rect x="440.00" y="491.00" width="3.00" height="1.30" fill="#50c030" />
<rect x="443.00" y="493.00" width="3.00" height="1.30" fill="#50c030" />
<rect x="446.00" y="492.00" width="3.00" height="1.30" fill="#50c030" />
<rect x="449.00" y="493.00" width="3.00" height="1.30" fill="#50c030" />
<rect x="452.00" y="491.00" width="3.00" height="1.30" fill="#50c030" />
<rect x="455.00" y="491.00" width="3.00" height="1.30" fill="#50c030" />
<rect x="458.00" y="493.00" width="3.00" height="1.30" fill="#50c030" />
<rect x="461.00" y="493.00" width="3.00" height="1.30" fill="#50c030" />
<rect x="464.00" y="493.00" width="3.00" height="1.30" fill="#50c030" />
<rect x="467.00" y="491.00" width="3.00" height="1.30" fill="#50c030" />
<rect x="470.00" y="492.00" width="3.00" height="1.30" fill="#50c030" />
<rect x="473.00" y="491.00" width="3.00" height="1.30" fill="#50c030" />
<rect x="476.00" y="491.00" width="3.00" height="1.30" fill="#50c030" />
<rect x="479.00" y="491.00" width="3.00" height="1.30" fill="#50c030" />
<rect x="482.00" y="492.00" width="3.00" height="1.30" fill="#50c030" />
<rect x="485.00" y="492.00" width="3.00" height="1.30" fill="#50c030" />
<rect x="488.00" y="492.00" width="3.00" height="1.30" fill="#50c030" />
<rect x="491.00" y="493.00" width="3.00" height="1.30" fill="#50c030" />
<rect x="494.00" y="492.00" width="3.00" height="1.30" fill="#50c030" />
<rect x="497.00" y="492.00" width="3.00" height="1.30" fill="#50c030" />
<rect x="500.00" y="492.00" width="3.00" height="1.30" fill="#50c030" />
<rect x="503.00" y="491.00" width="3.00" height="1.30" fill="#50c030" />
<rect x="506.00" y="493.00" width="3.00" height="1.30" fill="#50c030" />
<rect x="509.00" y="492.00" width="3.00" height="1.30" fill="#50c030" />
<rect x="512.00" y="493.00" width="3.00" height="1.30" fill="#50c030" />
<rect x="515.00" y="492.00" width="3.00" height="1.30" fill="#50c030" />
<rect x="518.00" y="493.00" width="3.00" height="1.30" fill="#50c030" />
<rect x="521.00" y="491.00" width="3.00" height="1.30" fill="#50c030" />
<rect x="524.00" y="491.00" width="3.00" height="1.30" fill="#50c030" />
<rect x="527.00" y="491.00" width="3.00" height="1.30" fill="#50c030" />
<rect x="530.00" y="492.00" width="3.00" height="1.30" fill="#50c030" />
<rect x="533.00" y="492.00" width="3.00" height="1.30" fill="#50c030" />
<rect x="536.00" y="493.00" width="3.00" height="1.30" fill="#50c030" />
<rect x="539.00" y="493.00" width="3.00" height="1.30" fill="#50c030" />
<rect x="542.00" y="492.00" width="3.00" height="1.30" fill="#50c030" />
<rect x="545.00" y="493.00" width="3.00" height="1.30" fill="#50c030" />
<rect x="548.00" y="493.00" width="3.00" height="1.30" fill="#50c030" />
<rect x="551.00" y="492.00" width="3.00" height="1.30" fill="#50c030" />
<rect x="554.00" y="492.00" width="3.00" height="1.30" fill="#50c030" />
<rect x="557.00" y="491.00" width="3.00" height="1.30" fill="#50c030" />
<rect x="560.00" y="492.00" width="3.00" height="1.30" fill="#50c030" />
<rect x="563.00" y="491.00" width="3.00" height="1.30" fill="#50c030" />
<rect x="566.00" y="492.00" width="3.00" height="1.30" fill="#50c030" />
<rect x="569.00" y="492.00" width="3.00" height="1.30" fill="#50c030" />
<rect x="572.00" y="492.00" width="3.00" height="1.30" fill="#50c030" />
<rect x="575.00" y="491.00" width="3.00" height="1.30" fill="#50c030" />
<rect x="578.00" y="491.00" width="3.00" height="1.30" fill="#50c030" />
<rect x="581.00" y="492.00" width="3.00" height="1.30" fill="#50c030" />
<rect x="584.00" y="493.00" width="3.00" height="1.30" fill="#50c030" />
<rect x="587.00" y="492.00" width="3.00" height="1.30" fill="#50c030" />
<rect x="590.00" y="491.00" width="3.00" height="1.30" fill="#50c030" />
<rect x="593.00" y="491.00" width="3.00" height="1.30" fill="#50c030" />
<rect x="596.00" y="492.00" width="3.00" height="1.30" fill="#50c030" />
<rect x="599.00" y="492.00" width="3.00" height="1.30" fill="#50c030" />
<rect x="602.00" y="491.00" width="3.00" height="1.30" fill="#50c030" />
<rect x="605.00" y="491.00" width="3.00" height="1.30" fill="#50c030" />
<rect x="608.00" y="492.00" width="3.00" height="1.30" fill="#50c030" />
<rect x="611.00" y="492.00" width="3.00" height="1.30" fill="#50c030" />
<rect x="614.00" y="492.00" width="3.00" height="1.30" fill="#50c030" />
<rect x="617.00" y="492.00" width="3.00" height="1.30" fill="#50c030" />
<rect x="620.00" y="493.00" width="3.00" height="1.30" fill="#50c030" />
<rect x="623.00" y="491.00" width="3.00" height="1.30" fill="#50c030" />
<rect x="626.00" y="493.00" width="3.00" height="1.30" fill="#50c030" />
<rect x="629.00" y="492.00" width="3.00" height="1.30" fill="#50c030" />
<rect x="632.00" y="491.00" width="3.00" height="1.30" fill="#50c030" />
<rect x="635.00" y="492.00" width="3.00" height="1.30" fill="#50c030" />
<rect x="638.00" y="491.00" width="3.00" height="1.30" fill="#50c030" />
<rect x="641.00" y="492.00" width="3.00" height="1.30" fill="#50c030" />
<rect x="644.00" y="493.00" width="3.00" height="1.30" fill="#50c030" />
<rect x="647.00" y="493.00" width="3.00" height="1.30" fill="#50c030" />
<rect x="650.00" y="492.00" width="3.00" height="1.30" fill="#50c030" />
<rect x="653.00" y="493.00" width="3.00" height="1.30" fill="#50c030" />
<rect x="656.00" y="491.00" width="3.00" height="1.30" fill="#50c030" />
<rect x="659.00" y="493.00" width="3.00" height="1.30" fill="#50c030" />
<rect x="662.00" y="491.00" width="3.00" height="1.30" fill="#50c030" />
<rect x="665.00" y="493.00" width="3.00" height="1.30" fill="#50c030" />
<rect x="668.00" y="492.00" width="3.00" height="1.30" fill="#50c030" />
<rect x="671.00" y="491.00" width="3.00" height="1.30" fill="#50c030" />
<rect x="674.00" y="491.00" width="3.00" height="1.30" fill="#50c030" />
<rect x="677.00" y="492.00" width="3.00" height="1.30" fill="#50c030" />
<rect x="680.00" y="492.00" width="3.00" height="1.30" fill="#50c030" />
<rect x="683.00" y="491.00" width="3.00" height="1.30" fill="#50c030" />
<rect x="686.00" y="493.00" width="3.00" height="1.30" fill="#50c030" />
<rect x="689.00" y="493.00" width="3.00" height="1.30" fill="#50c030" />
<rect x="692.00" y="492.00" width="3.00" height="1.30" fill="#50c030" />
<rect x="695.00" y="492.00" width="3.00" height="1.30" fill="#50c030" />
<rect x="698.00" y="492.00" width="3.00" height="1.30" fill="#50c030" />
<rect x="701.00" y="492.00" width="3.00" height="1.30" fill="#50c030" />
<rect x="704.00" y="493.00" width="3.00" height="1.30" fill="#50c030" />
<rect x="707.00" y="492.00" width="3.00" height="1.30" fill="#50c030" />
<rect x="710.00" y="491.00" width="3.00" height="1.30" fill="#50c030" />
<rect x="713.00" y="491.00" width="3.00" height="1.30" fill="#50c030" />
<rect x="716.00" y="492.00" width="3.00" height="1.30" fill="#50c030" />
<rect x="719.00" y="492.00" width="3.00" height="1.30" fill="#50c030" />
<rect x="722.00" y="492.00" width="3.00" height="1.30" fill="#50c030" />
<rect x="725.00" y="492.00" width="3.00" height="1.30" fill="#50c030" />
<rect x="728.00" y="492.00" width="3.00" height="1.30" fill="#50c030" />
<rect x="731.00" y="491.00" width="3.00" height="1.30" fill="#50c030" />
<rect x="734.00" y="492.00" width="3.00" height="1.30" fill="#50c030" />
<rect x="737.00" y="493.00" width="3.00" height="1.30" fill="#50c030" />
<rect x="437.00" y="504.70" width="302.00" height="4.00" fill="#000" />
<line x1="431" y1="378.5" x2="437" y2="378.5" stroke="#000" stroke-width="1"/>
<text x="431.3" y="380.6" font-size="8.6" fill="#000" stroke="#000" stroke-width="0.15" text-anchor="end" >34</text>
<line x1="431" y1="410.5" x2="437" y2="410.5" stroke="#000" stroke-width="1"/>
<text x="431.3" y="413.0" font-size="8.6" fill="#000" stroke="#000" stroke-width="0.15" text-anchor="end" >25.5</text>
<line x1="431" y1="444.5" x2="437" y2="444.5" stroke="#000" stroke-width="1"/>
<text x="431.3" y="447.0" font-size="8.6" fill="#000" stroke="#000" stroke-width="0.15" text-anchor="end" >17</text>
<line x1="431" y1="478.5" x2="437" y2="478.5" stroke="#000" stroke-width="1"/>
<text x="431.3" y="480.6" font-size="8.6" fill="#000" stroke="#000" stroke-width="0.15" text-anchor="end" >8.5</text>
<line x1="431" y1="510.5" x2="437" y2="510.5" stroke="#000" stroke-width="1"/>
<text x="431.3" y="509.0" font-size="8.6" fill="#000" stroke="#000" stroke-width="0.15" text-anchor="end" >0</text>
<line x1="437.5" y1="508.5" x2="437.5" y2="519.5" stroke="#000" stroke-width="1"/>
<line x1="462.5" y1="508.5" x2="462.5" y2="514.5" stroke="#000" stroke-width="1"/>
<line x1="487.5" y1="508.5" x2="487.5" y2="519.5" stroke="#000" stroke-width="1"/>
<line x1="512.5" y1="508.5" x2="512.5" y2="514.5" stroke="#000" stroke-width="1"/>
<line x1="537.5" y1="508.5" x2="537.5" y2="519.5" stroke="#000" stroke-width="1"/>
<line x1="562.5" y1="508.5" x2="562.5" y2="514.5" stroke="#000" stroke-width="1"/>
<line x1="588.5" y1="508.5" x2="588.5" y2="519.5" stroke="#000" stroke-width="1"/>
<line x1="613.5" y1="508.5" x2="613.5" y2="514.5" stroke="#000" stroke-width="1"/>
<line x1="638.5" y1="508.5" x2="638.5" y2="519.5" stroke="#000" stroke-width="1"/>
<line x1="663.5" y1="508.5" x2="663.5" y2="514.5" stroke="#000" stroke-width="1"/>
<line x1="688.5" y1="508.5" x2="688.5" y2="519.5" stroke="#000" stroke-width="1"/>
<line x1="713.5" y1="508.5" x2="713.5" y2="514.5" stroke="#000" stroke-width="1"/>
<line x1="738.5" y1="508.5" x2="738.5" y2="519.5" stroke="#000" stroke-width="1"/>
<text x="432.5" y="529.1" font-size="8.6" fill="#000" stroke="#000" stroke-width="0.15" text-anchor="start" textLength="21.8" lengthAdjust="spacingAndGlyphs" >16:51</text>
<text x="482.8" y="529.1" font-size="8.6" fill="#000" stroke="#000" stroke-width="0.15" text-anchor="start" textLength="21.8" lengthAdjust="spacingAndGlyphs" >17:11</text>
<text x="533.2" y="529.1" font-size="8.6" fill="#000" stroke="#000" stroke-width="0.15" text-anchor="start" textLength="21.8" lengthAdjust="spacingAndGlyphs" >17:31</text>
<text x="583.5" y="529.1" font-size="8.6" fill="#000" stroke="#000" stroke-width="0.15" text-anchor="start" textLength="21.8" lengthAdjust="spacingAndGlyphs" >17:51</text>
<text x="633.8" y="529.1" font-size="8.6" fill="#000" stroke="#000" stroke-width="0.15" text-anchor="start" textLength="21.8" lengthAdjust="spacingAndGlyphs" >18:11</text>
<text x="684.2" y="529.1" font-size="8.6" fill="#000" stroke="#000" stroke-width="0.15" text-anchor="start" textLength="21.8" lengthAdjust="spacingAndGlyphs" >18:31</text>
<text x="734.5" y="529.1" font-size="8.6" fill="#000" stroke="#000" stroke-width="0.15" text-anchor="start" textLength="21.8" lengthAdjust="spacingAndGlyphs" >18:51</text>
<defs><linearGradient id="jet2" x1="0" y1="1" x2="0" y2="0"><stop offset="0" stop-color="#00008f"/><stop offset="0.125" stop-color="#0000ff"/><stop offset="0.375" stop-color="#00ffff"/><stop offset="0.625" stop-color="#ffff00"/><stop offset="0.875" stop-color="#ff0000"/><stop offset="1" stop-color="#800000"/></linearGradient></defs>
<rect x="742.00" y="376.00" width="6.00" height="137.00" fill="url(#jet2)" />
<line x1="749" y1="378.5" x2="756" y2="378.5" stroke="#000" stroke-width="1"/>
<text x="756" y="380.6" font-size="8.6" fill="#000" stroke="#000" stroke-width="0.15" text-anchor="start" textLength="15.299999999999999" lengthAdjust="spacingAndGlyphs" >290</text>
<line x1="749" y1="410.5" x2="756" y2="410.5" stroke="#000" stroke-width="1"/>
<text x="756" y="413.0" font-size="8.6" fill="#000" stroke="#000" stroke-width="0.15" text-anchor="start" textLength="15.299999999999999" lengthAdjust="spacingAndGlyphs" >270</text>
<line x1="749" y1="444.5" x2="756" y2="444.5" stroke="#000" stroke-width="1"/>
<text x="756" y="446.9" font-size="8.6" fill="#000" stroke="#000" stroke-width="0.15" text-anchor="start" textLength="15.299999999999999" lengthAdjust="spacingAndGlyphs" >250</text>
<line x1="749" y1="478.5" x2="756" y2="478.5" stroke="#000" stroke-width="1"/>
<text x="756" y="481.0" font-size="8.6" fill="#000" stroke="#000" stroke-width="0.15" text-anchor="start" textLength="15.299999999999999" lengthAdjust="spacingAndGlyphs" >230</text>
<line x1="749" y1="510.5" x2="756" y2="510.5" stroke="#000" stroke-width="1"/>
<text x="756" y="509.5" font-size="8.6" fill="#000" stroke="#000" stroke-width="0.15" text-anchor="start" textLength="15.299999999999999" lengthAdjust="spacingAndGlyphs" >210</text>
<text x="402.3" y="552.2" font-size="9.6" fill="#000" stroke="#000" stroke-width="0.15" text-anchor="start" textLength="18" lengthAdjust="spacingAndGlyphs" >ILW</text>
<rect x="437.00" y="554.00" width="302.00" height="132.00" fill="#000" />
<polygon points="437.0,686.0 437.0,684.5 437.0,684.0 439.0,684.0 439.0,683.0 441.0,683.0 441.0,682.0 443.0,682.0 443.0,682.0 445.0,682.0 445.0,679.0 447.0,679.0 447.0,679.0 449.0,679.0 449.0,683.0 451.0,683.0 451.0,683.0 453.0,683.0 453.0,683.0 455.0,683.0 455.0,679.0 457.0,679.0 457.0,679.0 459.0,679.0 459.0,681.0 461.0,681.0 461.0,681.0 463.0,681.0 463.0,681.0 465.0,681.0 465.0,680.0 467.0,680.0 467.0,680.0 469.0,680.0 469.0,682.0 471.0,682.0 471.0,683.0 473.0,683.0 473.0,681.0 475.0,681.0 475.0,675.0 477.0,675.0 477.0,673.0 479.0,673.0 479.0,672.0 481.0,672.0 481.0,671.0 483.0,671.0 483.0,671.0 485.0,671.0 485.0,680.0 487.0,680.0 487.0,682.0 489.0,682.0 489.0,680.0 491.0,680.0 491.0,676.0 493.0,676.0 493.0,676.0 495.0,676.0 495.0,679.0 497.0,679.0 497.0,680.0 499.0,680.0 499.0,680.0 501.0,680.0 501.0,681.0 503.0,681.0 503.0,682.0 505.0,682.0 505.0,681.0 507.0,681.0 507.0,680.0 509.0,680.0 509.0,678.0 511.0,678.0 511.0,676.0 513.0,676.0 513.0,675.0 515.0,675.0 515.0,675.0 517.0,675.0 517.0,677.0 519.0,677.0 519.0,677.0 521.0,677.0 521.0,678.0 523.0,678.0 523.0,680.0 525.0,680.0 525.0,681.0 527.0,681.0 527.0,681.0 529.0,681.0 529.0,682.0 531.0,682.0 531.0,677.0 533.0,677.0 533.0,678.0 535.0,678.0 535.0,676.0 537.0,676.0 537.0,673.0 539.0,673.0 539.0,672.0 541.0,672.0 541.0,677.0 543.0,677.0 543.0,676.0 545.0,676.0 545.0,669.0 547.0,669.0 547.0,665.0 549.0,665.0 549.0,665.0 551.0,665.0 551.0,661.0 553.0,661.0 553.0,661.0 555.0,661.0 555.0,667.0 557.0,667.0 557.0,668.0 559.0,668.0 559.0,669.0 561.0,669.0 561.0,673.0 563.0,673.0 563.0,677.0 565.0,677.0 565.0,682.0 567.0,682.0 567.0,682.0 569.0,682.0 569.0,682.0 571.0,682.0 571.0,682.0 573.0,682.0 573.0,682.0 575.0,682.0 575.0,681.0 577.0,681.0 577.0,683.0 579.0,683.0 579.0,683.0 581.0,683.0 581.0,682.0 583.0,682.0 583.0,674.0 585.0,674.0 585.0,669.0 587.0,669.0 587.0,668.0 589.0,668.0 589.0,667.0 591.0,667.0 591.0,675.0 593.0,675.0 593.0,674.0 595.0,674.0 595.0,672.0 597.0,672.0 597.0,672.0 599.0,672.0 599.0,673.0 601.0,673.0 601.0,677.0 603.0,677.0 603.0,677.0 605.0,677.0 605.0,677.0 607.0,677.0 607.0,670.0 609.0,670.0 609.0,670.0 611.0,670.0 611.0,673.0 613.0,673.0 613.0,674.0 615.0,674.0 615.0,673.0 617.0,673.0 617.0,670.0 619.0,670.0 619.0,666.0 621.0,666.0 621.0,660.0 623.0,660.0 623.0,656.0 625.0,656.0 625.0,656.0 627.0,656.0 627.0,658.0 629.0,658.0 629.0,654.0 631.0,654.0 631.0,660.0 633.0,660.0 633.0,665.0 635.0,665.0 635.0,667.0 637.0,667.0 637.0,669.0 639.0,669.0 639.0,675.0 641.0,675.0 641.0,671.0 643.0,671.0 643.0,670.0 645.0,670.0 645.0,675.0 647.0,675.0 647.0,675.0 649.0,675.0 649.0,669.0 651.0,669.0 651.0,655.0 653.0,655.0 653.0,655.0 655.0,655.0 655.0,657.0 657.0,657.0 657.0,657.0 659.0,657.0 659.0,657.0 661.0,657.0 661.0,673.0 663.0,673.0 663.0,677.0 665.0,677.0 665.0,679.0 667.0,679.0 667.0,677.0 669.0,677.0 669.0,676.0 671.0,676.0 671.0,675.0 673.0,675.0 673.0,668.0 675.0,668.0 675.0,662.0 677.0,662.0 677.0,654.0 679.0,654.0 679.0,641.0 681.0,641.0 681.0,639.0 683.0,639.0 683.0,665.0 685.0,665.0 685.0,672.0 687.0,672.0 687.0,671.0 689.0,671.0 689.0,664.0 691.0,664.0 691.0,660.0 693.0,660.0 693.0,663.0 695.0,663.0 695.0,663.0 697.0,663.0 697.0,663.0 699.0,663.0 699.0,663.0 701.0,663.0 701.0,677.0 703.0,677.0 703.0,679.0 705.0,679.0 705.0,679.0 707.0,679.0 707.0,681.0 709.0,681.0 709.0,683.0 711.0,683.0 711.0,684.0 713.0,684.0 713.0,684.0 715.0,684.0 715.0,681.0 717.0,681.0 717.0,679.0 719.0,679.0 719.0,676.0 721.0,676.0 721.0,675.0 723.0,675.0 723.0,682.0 725.0,682.0 725.0,684.0 727.0,684.0 727.0,684.0 729.0,684.0 729.0,684.0 731.0,684.0 731.0,683.0 733.0,683.0 733.0,684.0 735.0,684.0 735.0,684.0 737.0,684.0 737.0,684.0 739.0,684.0 739.0,682.5 739.0,686.0" fill="#00ff00"/>
<line x1="431" y1="556.5" x2="437" y2="556.5" stroke="#000" stroke-width="1"/>
<text x="431.3" y="559.2" font-size="8.6" fill="#000" stroke="#000" stroke-width="0.15" text-anchor="end" >2</text>
<line x1="431" y1="622.5" x2="437" y2="622.5" stroke="#000" stroke-width="1"/>
<text x="431.3" y="624.7" font-size="8.6" fill="#000" stroke="#000" stroke-width="0.15" text-anchor="end" >1</text>
<line x1="431" y1="687.5" x2="437" y2="687.5" stroke="#000" stroke-width="1"/>
<text x="431.3" y="686.0" font-size="8.6" fill="#000" stroke="#000" stroke-width="0.15" text-anchor="end" >0</text>
<line x1="437.5" y1="686" x2="437.5" y2="697" stroke="#000" stroke-width="1"/>
<line x1="462.5" y1="686" x2="462.5" y2="692" stroke="#000" stroke-width="1"/>
<line x1="487.5" y1="686" x2="487.5" y2="697" stroke="#000" stroke-width="1"/>
<line x1="512.5" y1="686" x2="512.5" y2="692" stroke="#000" stroke-width="1"/>
<line x1="537.5" y1="686" x2="537.5" y2="697" stroke="#000" stroke-width="1"/>
<line x1="562.5" y1="686" x2="562.5" y2="692" stroke="#000" stroke-width="1"/>
<line x1="588.5" y1="686" x2="588.5" y2="697" stroke="#000" stroke-width="1"/>
<line x1="613.5" y1="686" x2="613.5" y2="692" stroke="#000" stroke-width="1"/>
<line x1="638.5" y1="686" x2="638.5" y2="697" stroke="#000" stroke-width="1"/>
<line x1="663.5" y1="686" x2="663.5" y2="692" stroke="#000" stroke-width="1"/>
<line x1="688.5" y1="686" x2="688.5" y2="697" stroke="#000" stroke-width="1"/>
<line x1="713.5" y1="686" x2="713.5" y2="692" stroke="#000" stroke-width="1"/>
<line x1="738.5" y1="686" x2="738.5" y2="697" stroke="#000" stroke-width="1"/>
<text x="432.5" y="706.6" font-size="8.6" fill="#000" stroke="#000" stroke-width="0.15" text-anchor="start" textLength="21.8" lengthAdjust="spacingAndGlyphs" >16:51</text>
<text x="482.8" y="706.6" font-size="8.6" fill="#000" stroke="#000" stroke-width="0.15" text-anchor="start" textLength="21.8" lengthAdjust="spacingAndGlyphs" >17:11</text>
<text x="533.2" y="706.6" font-size="8.6" fill="#000" stroke="#000" stroke-width="0.15" text-anchor="start" textLength="21.8" lengthAdjust="spacingAndGlyphs" >17:31</text>
<text x="583.5" y="706.6" font-size="8.6" fill="#000" stroke="#000" stroke-width="0.15" text-anchor="start" textLength="21.8" lengthAdjust="spacingAndGlyphs" >17:51</text>
<text x="633.8" y="706.6" font-size="8.6" fill="#000" stroke="#000" stroke-width="0.15" text-anchor="start" textLength="21.8" lengthAdjust="spacingAndGlyphs" >18:11</text>
<text x="684.2" y="706.6" font-size="8.6" fill="#000" stroke="#000" stroke-width="0.15" text-anchor="start" textLength="21.8" lengthAdjust="spacingAndGlyphs" >18:31</text>
<text x="734.5" y="706.6" font-size="8.6" fill="#000" stroke="#000" stroke-width="0.15" text-anchor="start" textLength="21.8" lengthAdjust="spacingAndGlyphs" >18:51</text>
<defs><linearGradient id="btn" x1="0" y1="0" x2="0" y2="1"><stop offset="0" stop-color="#ffffff"/><stop offset="0.45" stop-color="#eaf0f8"/><stop offset="1" stop-color="#b8cfe5"/></linearGradient></defs>
<text x="888.3" y="49.2" font-size="21" font-weight="bold" fill="#333" text-anchor="middle" textLength="148.2" lengthAdjust="spacingAndGlyphs" >NIRSS - Local</text>
<text x="886" y="94.6" font-size="11" font-weight="bold" fill="#333" text-anchor="middle" textLength="32.7" lengthAdjust="spacingAndGlyphs" >Mode:</text>
<rect x="799.50" y="107.50" width="86.50" height="21.50" fill="#b00000" stroke="#6a6a6a" stroke-width="1"/>
<rect x="892.50" y="107.50" width="83.00" height="21.50" fill="#00a010" stroke="#6a6a6a" stroke-width="1"/>
<text x="843.4" y="121.7" font-size="9.6" font-weight="bold" fill="#fff" text-anchor="middle" textLength="53.4" lengthAdjust="spacingAndGlyphs" >REALTIME</text>
<text x="934" y="121.7" font-size="9.6" font-weight="bold" fill="#fff" text-anchor="middle" textLength="48.5" lengthAdjust="spacingAndGlyphs" >ARCHIVE</text>
<text x="887.6" y="150.5" font-size="11" font-weight="bold" fill="#333" text-anchor="middle" textLength="103.2" lengthAdjust="spacingAndGlyphs" >Display time (UTC)</text>
<rect x="799.50" y="165.50" width="145.00" height="15.00" fill="#fff" stroke="#7a7a7a" stroke-width="1"/>
<text x="801.5" y="176.8" font-size="11" font-weight="bold" fill="#000" text-anchor="start" textLength="114.5" lengthAdjust="spacingAndGlyphs" >2013-04-25 18:51:23</text>
<rect x="951.50" y="163.50" width="23.00" height="20.00" fill="url(#btn)" stroke="#7a8a99" stroke-width="1"/>
<rect x="954.50" y="166.50" width="17.00" height="14.00" fill="none" stroke="#a3b8cc" stroke-width="1"/>
<text x="963.4" y="176.6" font-size="10.5" font-weight="bold" fill="#000" text-anchor="middle" textLength="14.8" lengthAdjust="spacingAndGlyphs" >GO</text>
<rect x="803.50" y="194.50" width="31.00" height="20.00" fill="url(#btn)" stroke="#7a8a99" stroke-width="1"/>
<text x="819.0" y="208.5" font-size="9.5" font-weight="bold" fill="#000" text-anchor="middle" textLength="22" lengthAdjust="spacingAndGlyphs" >&lt;&lt;&lt;</text>
<rect x="840.50" y="194.50" width="23.00" height="20.00" fill="url(#btn)" stroke="#7a8a99" stroke-width="1"/>
<text x="852.0" y="208.5" font-size="9.5" font-weight="bold" fill="#000" text-anchor="middle" textLength="15" lengthAdjust="spacingAndGlyphs" >&lt;&lt;</text>
<rect x="869.50" y="194.50" width="15.00" height="20.00" fill="url(#btn)" stroke="#7a8a99" stroke-width="1"/>
<text x="877.0" y="208.5" font-size="9.5" font-weight="bold" fill="#000" text-anchor="middle" textLength="6" lengthAdjust="spacingAndGlyphs" >&lt;</text>
<rect x="890.50" y="194.50" width="15.00" height="20.00" fill="url(#btn)" stroke="#7a8a99" stroke-width="1"/>
<text x="898.0" y="208.5" font-size="9.5" font-weight="bold" fill="#000" text-anchor="middle" textLength="6" lengthAdjust="spacingAndGlyphs" >&gt;</text>
<rect x="911.50" y="194.50" width="23.00" height="20.00" fill="url(#btn)" stroke="#7a8a99" stroke-width="1"/>
<text x="923.0" y="208.5" font-size="9.5" font-weight="bold" fill="#000" text-anchor="middle" textLength="14" lengthAdjust="spacingAndGlyphs" >&gt;&gt;</text>
<rect x="940.50" y="194.50" width="31.00" height="20.00" fill="url(#btn)" stroke="#7a8a99" stroke-width="1"/>
<text x="956.0" y="208.5" font-size="9.5" font-weight="bold" fill="#000" text-anchor="middle" textLength="23" lengthAdjust="spacingAndGlyphs" >&gt;&gt;&gt;</text>
<text x="809.6" y="241.2" font-size="13" fill="#333" stroke="#333" stroke-width="0.15" text-anchor="start" textLength="78.2" lengthAdjust="spacingAndGlyphs" >Time zoom:</text>
<rect x="894.50" y="225.50" width="70.00" height="23.00" fill="url(#btn)" stroke="#7a8a99" stroke-width="1"/>
<rect x="895.00" y="226.00" width="50.00" height="22.00" fill="#eeeeee" />
<line x1="945.5" y1="225.5" x2="945.5" y2="248.5" stroke="#7a8a99" stroke-width="1"/>
<text x="898" y="242" font-size="13" fill="#333" stroke="#333" stroke-width="0.15" text-anchor="start" textLength="35" lengthAdjust="spacingAndGlyphs" >2 hrs</text>
<polygon points="950,234.5 960,234.5 955,240" fill="#000"/>
</svg></body></html>
